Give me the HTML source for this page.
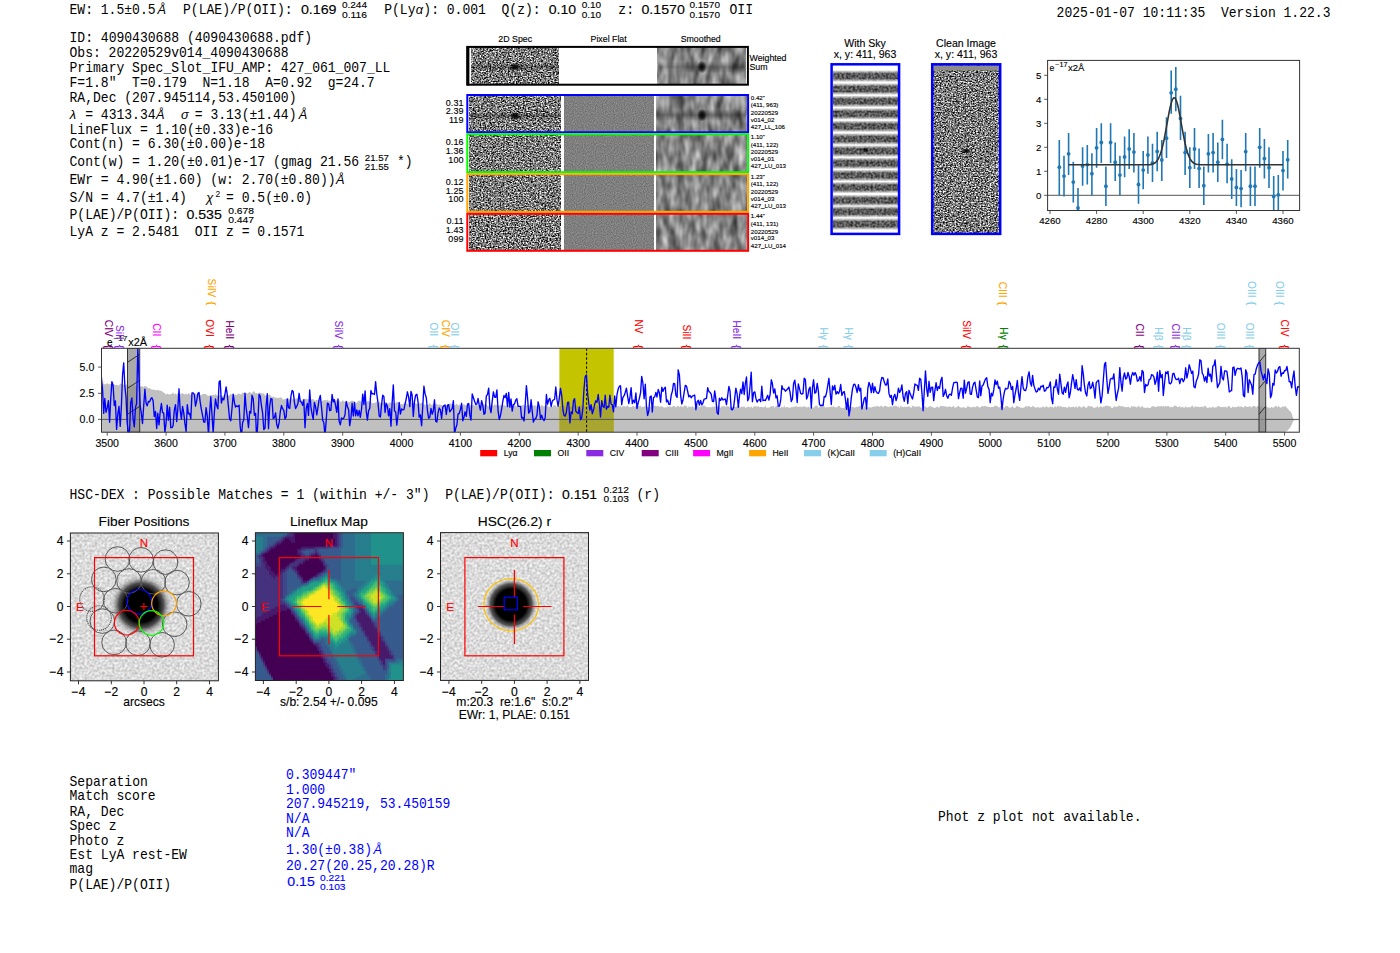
<!DOCTYPE html><html><head><meta charset="utf-8"><style>html,body{margin:0;padding:0;background:#fff;overflow:hidden}</style></head><body><svg width="1400" height="953" viewBox="0 0 1400 953" style="display:block;white-space:pre" xml:space="preserve">
<defs>
<filter id="nz1" x="0" y="0" width="1" height="1" color-interpolation-filters="sRGB">
 <feTurbulence type="fractalNoise" baseFrequency="0.6 0.8" numOctaves="3" seed="3" result="t"/>
 <feColorMatrix in="t" type="matrix" values="1 0 0 0 0  1 0 0 0 0  1 0 0 0 0  0 0 0 0 1"/>
 <feComponentTransfer><feFuncR type="linear" slope="2.0" intercept="-0.52"/><feFuncG type="linear" slope="2.0" intercept="-0.52"/><feFuncB type="linear" slope="2.0" intercept="-0.52"/></feComponentTransfer>
</filter>
<filter id="nz2" x="0" y="0" width="1" height="1" color-interpolation-filters="sRGB">
 <feTurbulence type="fractalNoise" baseFrequency="0.6 0.8" numOctaves="3" seed="11" result="t"/>
 <feColorMatrix in="t" type="matrix" values="1 0 0 0 0  1 0 0 0 0  1 0 0 0 0  0 0 0 0 1"/>
 <feComponentTransfer><feFuncR type="linear" slope="2.0" intercept="-0.52"/><feFuncG type="linear" slope="2.0" intercept="-0.52"/><feFuncB type="linear" slope="2.0" intercept="-0.52"/></feComponentTransfer>
</filter>
<filter id="nz3" x="0" y="0" width="1" height="1" color-interpolation-filters="sRGB">
 <feTurbulence type="fractalNoise" baseFrequency="0.6 0.8" numOctaves="3" seed="21" result="t"/>
 <feColorMatrix in="t" type="matrix" values="1 0 0 0 0  1 0 0 0 0  1 0 0 0 0  0 0 0 0 1"/>
 <feComponentTransfer><feFuncR type="linear" slope="2.0" intercept="-0.52"/><feFuncG type="linear" slope="2.0" intercept="-0.52"/><feFuncB type="linear" slope="2.0" intercept="-0.52"/></feComponentTransfer>
</filter>
<filter id="nz4" x="0" y="0" width="1" height="1" color-interpolation-filters="sRGB">
 <feTurbulence type="fractalNoise" baseFrequency="0.6 0.8" numOctaves="3" seed="31" result="t"/>
 <feColorMatrix in="t" type="matrix" values="1 0 0 0 0  1 0 0 0 0  1 0 0 0 0  0 0 0 0 1"/>
 <feComponentTransfer><feFuncR type="linear" slope="2.0" intercept="-0.52"/><feFuncG type="linear" slope="2.0" intercept="-0.52"/><feFuncB type="linear" slope="2.0" intercept="-0.52"/></feComponentTransfer>
</filter>
<filter id="nz5" x="0" y="0" width="1" height="1" color-interpolation-filters="sRGB">
 <feTurbulence type="fractalNoise" baseFrequency="0.6 0.8" numOctaves="3" seed="41" result="t"/>
 <feColorMatrix in="t" type="matrix" values="1 0 0 0 0  1 0 0 0 0  1 0 0 0 0  0 0 0 0 1"/>
 <feComponentTransfer><feFuncR type="linear" slope="2.0" intercept="-0.52"/><feFuncG type="linear" slope="2.0" intercept="-0.52"/><feFuncB type="linear" slope="2.0" intercept="-0.52"/></feComponentTransfer>
</filter>
<filter id="sm1" x="0" y="0" width="1" height="1" color-interpolation-filters="sRGB">
 <feTurbulence type="fractalNoise" baseFrequency="0.13 0.055" numOctaves="2" seed="5" result="t"/>
 <feColorMatrix in="t" type="matrix" values="1 0 0 0 0  1 0 0 0 0  1 0 0 0 0  0 0 0 0 1"/>
 <feComponentTransfer><feFuncR type="linear" slope="0.8" intercept="0.12"/><feFuncG type="linear" slope="0.8" intercept="0.12"/><feFuncB type="linear" slope="0.8" intercept="0.12"/></feComponentTransfer>
</filter>
<filter id="sm2" x="0" y="0" width="1" height="1" color-interpolation-filters="sRGB">
 <feTurbulence type="fractalNoise" baseFrequency="0.13 0.055" numOctaves="2" seed="15" result="t"/>
 <feColorMatrix in="t" type="matrix" values="1 0 0 0 0  1 0 0 0 0  1 0 0 0 0  0 0 0 0 1"/>
 <feComponentTransfer><feFuncR type="linear" slope="0.8" intercept="0.12"/><feFuncG type="linear" slope="0.8" intercept="0.12"/><feFuncB type="linear" slope="0.8" intercept="0.12"/></feComponentTransfer>
</filter>
<filter id="sm3" x="0" y="0" width="1" height="1" color-interpolation-filters="sRGB">
 <feTurbulence type="fractalNoise" baseFrequency="0.13 0.055" numOctaves="2" seed="25" result="t"/>
 <feColorMatrix in="t" type="matrix" values="1 0 0 0 0  1 0 0 0 0  1 0 0 0 0  0 0 0 0 1"/>
 <feComponentTransfer><feFuncR type="linear" slope="0.8" intercept="0.12"/><feFuncG type="linear" slope="0.8" intercept="0.12"/><feFuncB type="linear" slope="0.8" intercept="0.12"/></feComponentTransfer>
</filter>
<filter id="sm4" x="0" y="0" width="1" height="1" color-interpolation-filters="sRGB">
 <feTurbulence type="fractalNoise" baseFrequency="0.13 0.055" numOctaves="2" seed="35" result="t"/>
 <feColorMatrix in="t" type="matrix" values="1 0 0 0 0  1 0 0 0 0  1 0 0 0 0  0 0 0 0 1"/>
 <feComponentTransfer><feFuncR type="linear" slope="0.8" intercept="0.12"/><feFuncG type="linear" slope="0.8" intercept="0.12"/><feFuncB type="linear" slope="0.8" intercept="0.12"/></feComponentTransfer>
</filter>
<filter id="flat" x="0" y="0" width="1" height="1" color-interpolation-filters="sRGB">
 <feTurbulence type="fractalNoise" baseFrequency="0.9" numOctaves="1" seed="9" result="t"/>
 <feColorMatrix in="t" type="matrix" values="1 0 0 0 0  1 0 0 0 0  1 0 0 0 0  0 0 0 0 1"/>
 <feComponentTransfer><feFuncR type="linear" slope="0.3" intercept="0.35"/><feFuncG type="linear" slope="0.3" intercept="0.35"/><feFuncB type="linear" slope="0.3" intercept="0.35"/></feComponentTransfer>
</filter>
<filter id="cln" x="0" y="0" width="1" height="1" color-interpolation-filters="sRGB">
 <feTurbulence type="fractalNoise" baseFrequency="0.6 0.8" numOctaves="3" seed="51" result="t"/>
 <feColorMatrix in="t" type="matrix" values="1 0 0 0 0  1 0 0 0 0  1 0 0 0 0  0 0 0 0 1"/>
 <feComponentTransfer><feFuncR type="linear" slope="2.0" intercept="-0.52"/><feFuncG type="linear" slope="2.0" intercept="-0.52"/><feFuncB type="linear" slope="2.0" intercept="-0.52"/></feComponentTransfer>
</filter>
<filter id="sky" x="0" y="0" width="1" height="1" color-interpolation-filters="sRGB">
 <feTurbulence type="fractalNoise" baseFrequency="0.4" numOctaves="1" seed="61" result="t"/>
 <feColorMatrix in="t" type="matrix" values="1 0 0 0 0  1 0 0 0 0  1 0 0 0 0  0 0 0 0 1"/>
 <feComponentTransfer><feFuncR type="linear" slope="2.0" intercept="-0.5"/><feFuncG type="linear" slope="2.0" intercept="-0.5"/><feFuncB type="linear" slope="2.0" intercept="-0.5"/></feComponentTransfer>
</filter>
<filter id="lg" x="0" y="0" width="1" height="1" color-interpolation-filters="sRGB">
 <feTurbulence type="fractalNoise" baseFrequency="0.4" numOctaves="1" seed="71" result="t"/>
 <feColorMatrix in="t" type="matrix" values="1 0 0 0 0  1 0 0 0 0  1 0 0 0 0  0 0 0 0 1"/>
 <feComponentTransfer><feFuncR type="linear" slope="0.4" intercept="0.66"/><feFuncG type="linear" slope="0.4" intercept="0.66"/><feFuncB type="linear" slope="0.4" intercept="0.66"/></feComponentTransfer>
</filter>
<linearGradient id="trace" x1="0" y1="0" x2="0" y2="1"><stop offset="0" stop-color="#000" stop-opacity="0"/><stop offset="0.5" stop-color="#000" stop-opacity="0.32"/><stop offset="1" stop-color="#000" stop-opacity="0"/></linearGradient>
<radialGradient id="spot"><stop offset="0" stop-color="#000" stop-opacity="1"/><stop offset="0.5" stop-color="#000" stop-opacity="0.7"/><stop offset="1" stop-color="#000" stop-opacity="0"/></radialGradient>
</defs>
<rect width="1400" height="953" fill="#fff"/>
<text transform="translate(69.5,14.0) scale(1.0,1.107)" font-family="Liberation Mono" font-size="13.00" fill="#000" textLength="93.9" lengthAdjust="spacingAndGlyphs">EW: 1.5±0.5 </text>
<text transform="translate(157.4,14.0) scale(1.0,1.06)" font-family="Liberation Sans" font-size="12.80" fill="#000" font-style="italic">Å</text>
<text transform="translate(183.0,14.0) scale(1.0,1.107)" font-family="Liberation Mono" font-size="13.00" fill="#000" textLength="109.6" lengthAdjust="spacingAndGlyphs">P(LAE)/P(OII):</text>
<text transform="translate(300.9,14.0) scale(1.0,1.08)" font-family="Liberation Sans" font-size="12.40" fill="#000" textLength="35.6" lengthAdjust="spacingAndGlyphs" stroke="#000" stroke-width="0.12">0.169</text>
<text transform="translate(341.9,8.4) scale(1.0,1.08)" font-family="Liberation Sans" font-size="8.80" fill="#000" textLength="25.1" lengthAdjust="spacingAndGlyphs" stroke="#000" stroke-width="0.12">0.244</text>
<text transform="translate(341.9,17.6) scale(1.0,1.08)" font-family="Liberation Sans" font-size="8.80" fill="#000" textLength="25.1" lengthAdjust="spacingAndGlyphs" stroke="#000" stroke-width="0.12">0.116</text>
<text transform="translate(384.2,14.0) scale(1.0,1.107)" font-family="Liberation Mono" font-size="13.00" fill="#000" textLength="101.7" lengthAdjust="spacingAndGlyphs">P(Ly ): 0.001</text>
<text transform="translate(415.8,14.0) scale(1.0,1.06)" font-family="Liberation Sans" font-size="12.80" fill="#000" font-style="italic">α</text>
<text transform="translate(501.5,14.0) scale(1.0,1.107)" font-family="Liberation Mono" font-size="13.00" fill="#000" textLength="39.1" lengthAdjust="spacingAndGlyphs">Q(z):</text>
<text transform="translate(548.7,14.0) scale(1.0,1.08)" font-family="Liberation Sans" font-size="12.40" fill="#000" textLength="27.4" lengthAdjust="spacingAndGlyphs" stroke="#000" stroke-width="0.12">0.10</text>
<text transform="translate(581.7,8.4) scale(1.0,1.08)" font-family="Liberation Sans" font-size="8.80" fill="#000" textLength="19.5" lengthAdjust="spacingAndGlyphs" stroke="#000" stroke-width="0.12">0.10</text>
<text transform="translate(581.7,17.6) scale(1.0,1.08)" font-family="Liberation Sans" font-size="8.80" fill="#000" textLength="19.5" lengthAdjust="spacingAndGlyphs" stroke="#000" stroke-width="0.12">0.10</text>
<text transform="translate(618.3,14.0) scale(1.0,1.107)" font-family="Liberation Mono" font-size="13.00" fill="#000" textLength="15.7" lengthAdjust="spacingAndGlyphs">z:</text>
<text transform="translate(641.5,14.0) scale(1.0,1.08)" font-family="Liberation Sans" font-size="12.40" fill="#000" textLength="43.3" lengthAdjust="spacingAndGlyphs" stroke="#000" stroke-width="0.12">0.1570</text>
<text transform="translate(689.4,8.4) scale(1.0,1.08)" font-family="Liberation Sans" font-size="8.80" fill="#000" textLength="30.6" lengthAdjust="spacingAndGlyphs" stroke="#000" stroke-width="0.12">0.1570</text>
<text transform="translate(689.4,17.6) scale(1.0,1.08)" font-family="Liberation Sans" font-size="8.80" fill="#000" textLength="30.6" lengthAdjust="spacingAndGlyphs" stroke="#000" stroke-width="0.12">0.1570</text>
<text transform="translate(729.5,14.0) scale(1.0,1.107)" font-family="Liberation Mono" font-size="13.00" fill="#000" textLength="23.5" lengthAdjust="spacingAndGlyphs">OII</text>
<text transform="translate(1056.6,16.7) scale(1.0,1.107)" font-family="Liberation Mono" font-size="13.00" fill="#000" textLength="273.9" lengthAdjust="spacingAndGlyphs">2025-01-07 10:11:35  Version 1.22.3</text>
<text transform="translate(69.5,42.1) scale(1.0,1.107)" font-family="Liberation Mono" font-size="13.00" fill="#000" textLength="242.6" lengthAdjust="spacingAndGlyphs">ID: 4090430688 (4090430688.pdf)</text>
<text transform="translate(69.5,56.7) scale(1.0,1.107)" font-family="Liberation Mono" font-size="13.00" fill="#000" textLength="219.1" lengthAdjust="spacingAndGlyphs">Obs: 20220529v014_4090430688</text>
<text transform="translate(69.5,72.1) scale(1.0,1.107)" font-family="Liberation Mono" font-size="13.00" fill="#000" textLength="320.9" lengthAdjust="spacingAndGlyphs">Primary Spec_Slot_IFU_AMP: 427_061_007_LL</text>
<text transform="translate(69.5,86.7) scale(1.0,1.107)" font-family="Liberation Mono" font-size="13.00" fill="#000" textLength="305.2" lengthAdjust="spacingAndGlyphs">F=1.8"  T=0.179  N=1.18  A=0.92  g=24.7</text>
<text transform="translate(69.5,101.9) scale(1.0,1.107)" font-family="Liberation Mono" font-size="13.00" fill="#000" textLength="227.0" lengthAdjust="spacingAndGlyphs">RA,Dec (207.945114,53.450100)</text>
<text transform="translate(69.5,133.6) scale(1.0,1.107)" font-family="Liberation Mono" font-size="13.00" fill="#000" textLength="203.5" lengthAdjust="spacingAndGlyphs">LineFlux = 1.10(±0.33)e-16</text>
<text transform="translate(69.5,148.3) scale(1.0,1.107)" font-family="Liberation Mono" font-size="13.00" fill="#000" textLength="195.6" lengthAdjust="spacingAndGlyphs">Cont(n) = 6.30(±0.00)e-18</text>
<text transform="translate(69.5,236.4) scale(1.0,1.107)" font-family="Liberation Mono" font-size="13.00" fill="#000" textLength="234.8" lengthAdjust="spacingAndGlyphs">LyA z = 2.5481  OII z = 0.1571</text>
<text transform="translate(69.5,118.6) scale(1.0,1.107)" font-family="Liberation Mono" font-size="13.00" fill="#000" textLength="234.8" lengthAdjust="spacingAndGlyphs">  = 4313.34     = 3.13(±1.44) </text>
<text transform="translate(69.8,118.6) scale(1.0,1.06)" font-family="Liberation Sans" font-size="12.80" fill="#000" font-style="italic">λ</text>
<text transform="translate(155.9,118.6) scale(1.0,1.06)" font-family="Liberation Sans" font-size="12.80" fill="#000" font-style="italic">Å</text>
<text transform="translate(180.9,118.6) scale(1.0,1.06)" font-family="Liberation Sans" font-size="12.80" fill="#000" font-style="italic">σ</text>
<text transform="translate(298.8,118.6) scale(1.0,1.06)" font-family="Liberation Sans" font-size="12.80" fill="#000" font-style="italic">Å</text>
<text transform="translate(69.5,184.3) scale(1.0,1.107)" font-family="Liberation Mono" font-size="13.00" fill="#000" textLength="273.9" lengthAdjust="spacingAndGlyphs">EWr = 4.90(±1.60) (w: 2.70(±0.80)) </text>
<text transform="translate(335.9,184.3) scale(1.0,1.06)" font-family="Liberation Sans" font-size="12.80" fill="#000" font-style="italic">Å</text>
<text transform="translate(69.5,166.4) scale(1.0,1.107)" font-family="Liberation Mono" font-size="13.00" fill="#000" textLength="289.6" lengthAdjust="spacingAndGlyphs">Cont(w) = 1.20(±0.01)e-17 (gmag 21.56</text>
<text transform="translate(364.8,161.0) scale(1.0,1.08)" font-family="Liberation Sans" font-size="8.80" fill="#000" textLength="24.2" lengthAdjust="spacingAndGlyphs" stroke="#000" stroke-width="0.12">21.57</text>
<text transform="translate(364.8,170.0) scale(1.0,1.08)" font-family="Liberation Sans" font-size="8.80" fill="#000" textLength="24.2" lengthAdjust="spacingAndGlyphs" stroke="#000" stroke-width="0.12">21.55</text>
<text transform="translate(397.0,166.4) scale(1.0,1.107)" font-family="Liberation Mono" font-size="13.00" fill="#000" textLength="15.7" lengthAdjust="spacingAndGlyphs">*)</text>
<text transform="translate(69.5,201.7) scale(1.0,1.107)" font-family="Liberation Mono" font-size="13.00" fill="#000" textLength="242.6" lengthAdjust="spacingAndGlyphs">S/N = 4.7(±1.4)     = 0.5(±0.0)</text>
<text transform="translate(206.3,201.7) scale(1.0,1.06)" font-family="Liberation Sans" font-size="12.80" fill="#000" font-style="italic">χ</text>
<text transform="translate(215.4,196.7) scale(1.0,1.06)" font-family="Liberation Sans" font-size="8.50" fill="#000">2</text>
<text transform="translate(69.5,219.3) scale(1.0,1.107)" font-family="Liberation Mono" font-size="13.00" fill="#000" textLength="109.6" lengthAdjust="spacingAndGlyphs">P(LAE)/P(OII):</text>
<text transform="translate(186.4,219.3) scale(1.0,1.08)" font-family="Liberation Sans" font-size="12.40" fill="#000" textLength="35.4" lengthAdjust="spacingAndGlyphs" stroke="#000" stroke-width="0.12">0.535</text>
<text transform="translate(228.2,213.8) scale(1.0,1.08)" font-family="Liberation Sans" font-size="8.80" fill="#000" textLength="25.8" lengthAdjust="spacingAndGlyphs" stroke="#000" stroke-width="0.12">0.678</text>
<text transform="translate(228.2,222.8) scale(1.0,1.08)" font-family="Liberation Sans" font-size="8.80" fill="#000" textLength="25.8" lengthAdjust="spacingAndGlyphs" stroke="#000" stroke-width="0.12">0.447</text>
<text transform="translate(515.2,41.8) scale(1.1,1.08)" font-family="Liberation Sans" font-size="8.00" fill="#000" text-anchor="middle" stroke="#000" stroke-width="0.12">2D Spec</text>
<text transform="translate(608.6,41.8) scale(1.1,1.08)" font-family="Liberation Sans" font-size="8.00" fill="#000" text-anchor="middle" stroke="#000" stroke-width="0.12">Pixel Flat</text>
<text transform="translate(700.7,41.8) scale(1.1,1.08)" font-family="Liberation Sans" font-size="8.00" fill="#000" text-anchor="middle" stroke="#000" stroke-width="0.12">Smoothed</text>
<rect x="471.5" y="47.2" width="86.8" height="37.2" fill="#888" filter="url(#nz1)"/>
<ellipse cx="515" cy="67" rx="6" ry="4" fill="url(#spot)"/>
<rect x="657.8" y="47.2" width="87.8" height="37.2" fill="#888" filter="url(#sm1)"/>
<rect x="657.8" y="61" width="87.8" height="12" fill="url(#trace)"/>
<ellipse cx="702" cy="67" rx="5" ry="6.5" fill="url(#spot)"/>
<rect x="471.5" y="63" width="86.8" height="8" fill="url(#trace)"/>
<rect x="467.4" y="46.9" width="280.5" height="37.8" fill="none" stroke="#000" stroke-width="2"/>
<rect x="466.4" y="46.0" width="3" height="39.4" fill="#000"/>
<text transform="translate(749.5,61.0) scale(1.1,1.08)" font-family="Liberation Sans" font-size="8.00" fill="#000" stroke="#000" stroke-width="0.12">Weighted</text>
<text transform="translate(749.5,69.5) scale(1.1,1.08)" font-family="Liberation Sans" font-size="8.00" fill="#000" stroke="#000" stroke-width="0.12">Sum</text>
<rect x="469.7" y="95.0" width="90.4" height="37.3" fill="#888" filter="url(#nz2)"/>
<rect x="564.1" y="95.0" width="89.5" height="37.3" fill="#808080" filter="url(#flat)"/>
<rect x="656.6" y="95.0" width="89.6" height="37.3" fill="#888" filter="url(#sm2)"/>
<ellipse cx="515" cy="116.0" rx="6" ry="4" fill="url(#spot)"/>
<rect x="656.6" y="109.0" width="89.6" height="12" fill="url(#trace)"/>
<rect x="469.7" y="112.0" width="90.4" height="8" fill="url(#trace)"/>
<ellipse cx="702" cy="115.0" rx="5" ry="6.5" fill="url(#spot)"/>
<rect x="467.3" y="95.0" width="280.8" height="37.3" fill="none" stroke="#0000ff" stroke-width="2"/>
<text transform="translate(463.4,105.6) scale(1.1,1.08)" font-family="Liberation Sans" font-size="8.20" fill="#000" text-anchor="end" stroke="#000" stroke-width="0.12">0.31</text>
<text transform="translate(463.4,114.4) scale(1.1,1.08)" font-family="Liberation Sans" font-size="8.20" fill="#000" text-anchor="end" stroke="#000" stroke-width="0.12">2.39</text>
<text transform="translate(463.4,123.2) scale(1.1,1.08)" font-family="Liberation Sans" font-size="8.20" fill="#000" text-anchor="end" stroke="#000" stroke-width="0.12">119</text>
<text transform="translate(750.8,99.6) scale(1.1,1.08)" font-family="Liberation Sans" font-size="5.60" fill="#000" stroke="#000" stroke-width="0.12">0.42"</text>
<text transform="translate(750.8,107.2) scale(1.1,1.08)" font-family="Liberation Sans" font-size="5.60" fill="#000" stroke="#000" stroke-width="0.12">(411, 963)</text>
<text transform="translate(750.8,115.0) scale(1.1,1.08)" font-family="Liberation Sans" font-size="5.60" fill="#000" stroke="#000" stroke-width="0.12">20220529</text>
<text transform="translate(750.8,121.6) scale(1.1,1.08)" font-family="Liberation Sans" font-size="5.60" fill="#000" stroke="#000" stroke-width="0.12">v014_02</text>
<text transform="translate(750.8,129.0) scale(1.1,1.08)" font-family="Liberation Sans" font-size="5.60" fill="#000" stroke="#000" stroke-width="0.12">427_LL_106</text>
<rect x="469.7" y="134.3" width="90.4" height="37.9" fill="#888" filter="url(#nz3)"/>
<rect x="564.1" y="134.3" width="89.5" height="37.9" fill="#808080" filter="url(#flat)"/>
<rect x="656.6" y="134.3" width="89.6" height="37.9" fill="#888" filter="url(#sm3)"/>
<rect x="467.3" y="134.3" width="280.8" height="37.9" fill="none" stroke="#00ff00" stroke-width="2"/>
<text transform="translate(463.4,144.9) scale(1.1,1.08)" font-family="Liberation Sans" font-size="8.20" fill="#000" text-anchor="end" stroke="#000" stroke-width="0.12">0.16</text>
<text transform="translate(463.4,153.7) scale(1.1,1.08)" font-family="Liberation Sans" font-size="8.20" fill="#000" text-anchor="end" stroke="#000" stroke-width="0.12">1.36</text>
<text transform="translate(463.4,162.5) scale(1.1,1.08)" font-family="Liberation Sans" font-size="8.20" fill="#000" text-anchor="end" stroke="#000" stroke-width="0.12">100</text>
<text transform="translate(750.8,138.9) scale(1.1,1.08)" font-family="Liberation Sans" font-size="5.60" fill="#000" stroke="#000" stroke-width="0.12">1.10"</text>
<text transform="translate(750.8,146.5) scale(1.1,1.08)" font-family="Liberation Sans" font-size="5.60" fill="#000" stroke="#000" stroke-width="0.12">(411, 122)</text>
<text transform="translate(750.8,154.3) scale(1.1,1.08)" font-family="Liberation Sans" font-size="5.60" fill="#000" stroke="#000" stroke-width="0.12">20220529</text>
<text transform="translate(750.8,160.9) scale(1.1,1.08)" font-family="Liberation Sans" font-size="5.60" fill="#000" stroke="#000" stroke-width="0.12">v014_01</text>
<text transform="translate(750.8,168.3) scale(1.1,1.08)" font-family="Liberation Sans" font-size="5.60" fill="#000" stroke="#000" stroke-width="0.12">427_LU_013</text>
<rect x="469.7" y="174.2" width="90.4" height="37.6" fill="#888" filter="url(#nz4)"/>
<rect x="564.1" y="174.2" width="89.5" height="37.6" fill="#808080" filter="url(#flat)"/>
<rect x="656.6" y="174.2" width="89.6" height="37.6" fill="#888" filter="url(#sm4)"/>
<rect x="467.3" y="174.2" width="280.8" height="37.6" fill="none" stroke="#ffa500" stroke-width="2"/>
<text transform="translate(463.4,184.8) scale(1.1,1.08)" font-family="Liberation Sans" font-size="8.20" fill="#000" text-anchor="end" stroke="#000" stroke-width="0.12">0.12</text>
<text transform="translate(463.4,193.6) scale(1.1,1.08)" font-family="Liberation Sans" font-size="8.20" fill="#000" text-anchor="end" stroke="#000" stroke-width="0.12">1.25</text>
<text transform="translate(463.4,202.4) scale(1.1,1.08)" font-family="Liberation Sans" font-size="8.20" fill="#000" text-anchor="end" stroke="#000" stroke-width="0.12">100</text>
<text transform="translate(750.8,178.8) scale(1.1,1.08)" font-family="Liberation Sans" font-size="5.60" fill="#000" stroke="#000" stroke-width="0.12">1.23"</text>
<text transform="translate(750.8,186.4) scale(1.1,1.08)" font-family="Liberation Sans" font-size="5.60" fill="#000" stroke="#000" stroke-width="0.12">(411, 122)</text>
<text transform="translate(750.8,194.2) scale(1.1,1.08)" font-family="Liberation Sans" font-size="5.60" fill="#000" stroke="#000" stroke-width="0.12">20220529</text>
<text transform="translate(750.8,200.8) scale(1.1,1.08)" font-family="Liberation Sans" font-size="5.60" fill="#000" stroke="#000" stroke-width="0.12">v014_03</text>
<text transform="translate(750.8,208.2) scale(1.1,1.08)" font-family="Liberation Sans" font-size="5.60" fill="#000" stroke="#000" stroke-width="0.12">427_LU_013</text>
<rect x="469.7" y="213.8" width="90.4" height="37.0" fill="#888" filter="url(#nz5)"/>
<rect x="564.1" y="213.8" width="89.5" height="37.0" fill="#808080" filter="url(#flat)"/>
<rect x="656.6" y="213.8" width="89.6" height="37.0" fill="#888" filter="url(#sm1)"/>
<rect x="467.3" y="213.8" width="280.8" height="37.0" fill="none" stroke="#ff0000" stroke-width="2"/>
<text transform="translate(463.4,224.4) scale(1.1,1.08)" font-family="Liberation Sans" font-size="8.20" fill="#000" text-anchor="end" stroke="#000" stroke-width="0.12">0.11</text>
<text transform="translate(463.4,233.2) scale(1.1,1.08)" font-family="Liberation Sans" font-size="8.20" fill="#000" text-anchor="end" stroke="#000" stroke-width="0.12">1.43</text>
<text transform="translate(463.4,242.0) scale(1.1,1.08)" font-family="Liberation Sans" font-size="8.20" fill="#000" text-anchor="end" stroke="#000" stroke-width="0.12">099</text>
<text transform="translate(750.8,218.4) scale(1.1,1.08)" font-family="Liberation Sans" font-size="5.60" fill="#000" stroke="#000" stroke-width="0.12">1.44"</text>
<text transform="translate(750.8,226.0) scale(1.1,1.08)" font-family="Liberation Sans" font-size="5.60" fill="#000" stroke="#000" stroke-width="0.12">(411, 131)</text>
<text transform="translate(750.8,233.8) scale(1.1,1.08)" font-family="Liberation Sans" font-size="5.60" fill="#000" stroke="#000" stroke-width="0.12">20220529</text>
<text transform="translate(750.8,240.4) scale(1.1,1.08)" font-family="Liberation Sans" font-size="5.60" fill="#000" stroke="#000" stroke-width="0.12">v014_03</text>
<text transform="translate(750.8,247.8) scale(1.1,1.08)" font-family="Liberation Sans" font-size="5.60" fill="#000" stroke="#000" stroke-width="0.12">427_LU_014</text>
<text transform="translate(865.0,47.1) scale(1.1,1.08)" font-family="Liberation Sans" font-size="9.60" fill="#000" text-anchor="middle" stroke="#000" stroke-width="0.12">With Sky</text>
<text transform="translate(865.0,57.9) scale(1.1,1.08)" font-family="Liberation Sans" font-size="9.60" fill="#000" text-anchor="middle" stroke="#000" stroke-width="0.12">x, y: 411, 963</text>
<text transform="translate(966.0,47.1) scale(1.1,1.08)" font-family="Liberation Sans" font-size="9.60" fill="#000" text-anchor="middle" stroke="#000" stroke-width="0.12">Clean Image</text>
<text transform="translate(966.0,57.9) scale(1.1,1.08)" font-family="Liberation Sans" font-size="9.60" fill="#000" text-anchor="middle" stroke="#000" stroke-width="0.12">x, y: 411, 963</text>
<defs><linearGradient id="bandg" x1="0" y1="0" x2="0" y2="1"><stop offset="0" stop-color="#fff"/><stop offset="0.3" stop-color="#585858"/><stop offset="0.7" stop-color="#585858"/><stop offset="1" stop-color="#fff"/></linearGradient><filter id="skyf" x="0" y="0" width="1" height="1" color-interpolation-filters="sRGB"><feTurbulence type="fractalNoise" baseFrequency="0.45" numOctaves="1" seed="61" result="t"/><feColorMatrix in="t" type="matrix" values="1 0 0 0 0  1 0 0 0 0  1 0 0 0 0  0 0 0 0 1" result="n"/><feComposite in="n" in2="SourceGraphic" operator="arithmetic" k1="1.1" k2="-1.1" k3="0.45" k4="0.55"/></filter></defs>
<g filter="url(#skyf)">
<rect x="833" y="66" width="65" height="167" fill="#fff"/>
<rect x="833" y="70.1" width="65" height="12" fill="url(#bandg)"/>
<rect x="833" y="83.0" width="65" height="12" fill="url(#bandg)"/>
<rect x="833" y="95.4" width="65" height="12" fill="url(#bandg)"/>
<rect x="833" y="107.8" width="65" height="12" fill="url(#bandg)"/>
<rect x="833" y="120.3" width="65" height="12" fill="url(#bandg)"/>
<rect x="833" y="133.0" width="65" height="12" fill="url(#bandg)"/>
<rect x="833" y="145.1" width="65" height="12" fill="url(#bandg)"/>
<rect x="833" y="157.3" width="65" height="12" fill="url(#bandg)"/>
<rect x="833" y="169.4" width="65" height="12" fill="url(#bandg)"/>
<rect x="833" y="181.5" width="65" height="12" fill="url(#bandg)"/>
<rect x="833" y="194.4" width="65" height="12" fill="url(#bandg)"/>
<rect x="833" y="205.8" width="65" height="12" fill="url(#bandg)"/>
<rect x="833" y="218.0" width="65" height="12" fill="url(#bandg)"/>
<ellipse cx="865" cy="150" rx="3" ry="2.5" fill="url(#spot)"/>
</g>
<rect x="831.6" y="64.3" width="67.5" height="169.6" fill="none" stroke="#0000ff" stroke-width="2.5"/>
<rect x="933" y="65.5" width="67" height="168" fill="#888" filter="url(#cln)"/>
<rect x="933" y="65.5" width="67" height="5" fill="#8c8c8c"/>
<ellipse cx="966" cy="151" rx="5" ry="3" fill="url(#spot)"/>
<rect x="932.2" y="64.3" width="68" height="169.6" fill="none" stroke="#0000ff" stroke-width="2.5"/>
<defs><clipPath id="fitclip"><rect x="1047.6" y="60.4" width="252" height="150.1"/></clipPath></defs>
<g clip-path="url(#fitclip)">
<line x1="1047.6" y1="195.3" x2="1299.6" y2="195.3" stroke="#555" stroke-width="1"/>
<path d="M1059.3 140.1V195.3M1064.0 155.7V196.5M1068.6 132.9V174.9M1073.3 161.7V202.5M1078.0 188.1V216.9M1082.6 147.3V185.7M1087.3 144.9V184.5M1091.9 153.3V195.3M1096.6 128.1V167.7M1101.3 123.3V162.9M1105.9 166.5V206.1M1110.6 123.3V162.9M1115.2 142.5V180.9M1119.9 155.7V195.3M1124.6 136.5V177.3M1129.2 129.3V168.9M1133.9 132.9V172.5M1138.5 165.3V203.7M1143.2 150.9V189.3M1147.9 136.5V173.7M1152.5 143.7V182.1M1157.2 131.7V171.3M1161.8 140.1V180.9M1166.5 117.3V158.1M1171.2 70.5V113.7M1175.8 66.9V111.3M1180.5 95.7V140.1M1185.1 131.7V174.9M1189.8 147.3V188.1M1194.5 128.1V168.9M1199.1 148.5V188.1M1203.8 166.5V204.9M1208.4 134.1V172.5M1213.1 132.9V172.5M1217.8 142.5V182.1M1222.4 119.7V159.3M1227.1 143.7V183.3M1231.7 159.3V198.9M1236.4 168.9V206.1M1241.1 170.1V207.3M1245.7 132.9V171.3M1250.4 166.5V206.1M1255.0 166.5V206.1M1259.7 128.1V167.7M1264.4 138.9V178.5M1269.0 147.3V188.1M1273.7 176.1V210.4M1278.3 174.9V210.4M1283.0 150.9V190.5M1287.7 140.1V178.5" stroke="#1f77b4" stroke-width="1.6" fill="none"/>
<circle cx="1059.3" cy="167.2" r="1.9" fill="#1f77b4"/>
<circle cx="1064.0" cy="176.1" r="1.9" fill="#1f77b4"/>
<circle cx="1068.6" cy="153.8" r="1.9" fill="#1f77b4"/>
<circle cx="1073.3" cy="182.1" r="1.9" fill="#1f77b4"/>
<circle cx="1078.0" cy="208.0" r="1.9" fill="#1f77b4"/>
<circle cx="1082.6" cy="166.0" r="1.9" fill="#1f77b4"/>
<circle cx="1087.3" cy="164.6" r="1.9" fill="#1f77b4"/>
<circle cx="1091.9" cy="173.7" r="1.9" fill="#1f77b4"/>
<circle cx="1096.6" cy="147.8" r="1.9" fill="#1f77b4"/>
<circle cx="1101.3" cy="142.5" r="1.9" fill="#1f77b4"/>
<circle cx="1105.9" cy="186.2" r="1.9" fill="#1f77b4"/>
<circle cx="1110.6" cy="142.5" r="1.9" fill="#1f77b4"/>
<circle cx="1115.2" cy="162.2" r="1.9" fill="#1f77b4"/>
<circle cx="1119.9" cy="175.1" r="1.9" fill="#1f77b4"/>
<circle cx="1124.6" cy="156.9" r="1.9" fill="#1f77b4"/>
<circle cx="1129.2" cy="149.0" r="1.9" fill="#1f77b4"/>
<circle cx="1133.9" cy="152.1" r="1.9" fill="#1f77b4"/>
<circle cx="1138.5" cy="184.5" r="1.9" fill="#1f77b4"/>
<circle cx="1143.2" cy="170.1" r="1.9" fill="#1f77b4"/>
<circle cx="1147.9" cy="155.0" r="1.9" fill="#1f77b4"/>
<circle cx="1152.5" cy="162.9" r="1.9" fill="#1f77b4"/>
<circle cx="1157.2" cy="151.4" r="1.9" fill="#1f77b4"/>
<circle cx="1161.8" cy="160.0" r="1.9" fill="#1f77b4"/>
<circle cx="1166.5" cy="138.2" r="1.9" fill="#1f77b4"/>
<circle cx="1171.2" cy="92.8" r="1.9" fill="#1f77b4"/>
<circle cx="1175.8" cy="89.2" r="1.9" fill="#1f77b4"/>
<circle cx="1180.5" cy="118.5" r="1.9" fill="#1f77b4"/>
<circle cx="1185.1" cy="152.6" r="1.9" fill="#1f77b4"/>
<circle cx="1189.8" cy="167.7" r="1.9" fill="#1f77b4"/>
<circle cx="1194.5" cy="149.0" r="1.9" fill="#1f77b4"/>
<circle cx="1199.1" cy="168.4" r="1.9" fill="#1f77b4"/>
<circle cx="1203.8" cy="185.7" r="1.9" fill="#1f77b4"/>
<circle cx="1208.4" cy="153.8" r="1.9" fill="#1f77b4"/>
<circle cx="1213.1" cy="152.6" r="1.9" fill="#1f77b4"/>
<circle cx="1217.8" cy="162.2" r="1.9" fill="#1f77b4"/>
<circle cx="1222.4" cy="139.4" r="1.9" fill="#1f77b4"/>
<circle cx="1227.1" cy="164.1" r="1.9" fill="#1f77b4"/>
<circle cx="1231.7" cy="179.0" r="1.9" fill="#1f77b4"/>
<circle cx="1236.4" cy="187.4" r="1.9" fill="#1f77b4"/>
<circle cx="1241.1" cy="188.6" r="1.9" fill="#1f77b4"/>
<circle cx="1245.7" cy="151.6" r="1.9" fill="#1f77b4"/>
<circle cx="1250.4" cy="186.2" r="1.9" fill="#1f77b4"/>
<circle cx="1255.0" cy="186.2" r="1.9" fill="#1f77b4"/>
<circle cx="1259.7" cy="147.3" r="1.9" fill="#1f77b4"/>
<circle cx="1264.4" cy="158.6" r="1.9" fill="#1f77b4"/>
<circle cx="1269.0" cy="167.7" r="1.9" fill="#1f77b4"/>
<circle cx="1273.7" cy="196.5" r="1.9" fill="#1f77b4"/>
<circle cx="1278.3" cy="194.8" r="1.9" fill="#1f77b4"/>
<circle cx="1283.0" cy="170.6" r="1.9" fill="#1f77b4"/>
<circle cx="1287.7" cy="159.8" r="1.9" fill="#1f77b4"/>
<path d="M1068.6 164.8L1069.8 164.8L1071.0 164.8L1072.1 164.8L1073.3 164.8L1074.5 164.8L1075.6 164.8L1076.8 164.8L1078.0 164.8L1079.1 164.8L1080.3 164.8L1081.5 164.8L1082.6 164.8L1083.8 164.8L1085.0 164.8L1086.1 164.8L1087.3 164.8L1088.4 164.8L1089.6 164.8L1090.8 164.8L1091.9 164.8L1093.1 164.8L1094.3 164.8L1095.4 164.8L1096.6 164.8L1097.8 164.8L1098.9 164.8L1100.1 164.8L1101.3 164.8L1102.4 164.8L1103.6 164.8L1104.8 164.8L1105.9 164.8L1107.1 164.8L1108.2 164.8L1109.4 164.8L1110.6 164.8L1111.7 164.8L1112.9 164.8L1114.1 164.8L1115.2 164.8L1116.4 164.8L1117.6 164.8L1118.7 164.8L1119.9 164.8L1121.1 164.8L1122.2 164.8L1123.4 164.8L1124.6 164.8L1125.7 164.8L1126.9 164.8L1128.1 164.8L1129.2 164.8L1130.4 164.8L1131.5 164.8L1132.7 164.8L1133.9 164.8L1135.0 164.8L1136.2 164.8L1137.4 164.8L1138.5 164.8L1139.7 164.8L1140.9 164.8L1142.0 164.8L1143.2 164.8L1144.4 164.8L1145.5 164.8L1146.7 164.8L1147.9 164.7L1149.0 164.7L1150.2 164.6L1151.4 164.4L1152.5 164.1L1153.7 163.6L1154.8 163.0L1156.0 162.0L1157.2 160.6L1158.3 158.8L1159.5 156.3L1160.7 153.1L1161.8 149.2L1163.0 144.6L1164.2 139.1L1165.3 133.1L1166.5 126.7L1167.7 120.1L1168.8 113.8L1170.0 108.0L1171.2 103.3L1172.3 99.8L1173.5 97.9L1174.7 97.8L1175.8 99.3L1177.0 102.5L1178.2 107.0L1179.3 112.6L1180.5 118.8L1181.6 125.4L1182.8 131.9L1184.0 138.0L1185.1 143.5L1186.3 148.4L1187.5 152.4L1188.6 155.7L1189.8 158.3L1191.0 160.3L1192.1 161.7L1193.3 162.8L1194.5 163.5L1195.6 164.0L1196.8 164.3L1198.0 164.5L1199.1 164.6L1200.3 164.7L1201.5 164.8L1202.6 164.8L1203.8 164.8L1204.9 164.8L1206.1 164.8L1207.3 164.8L1208.4 164.8L1209.6 164.8L1210.8 164.8L1211.9 164.8L1213.1 164.8L1214.3 164.8L1215.4 164.8L1216.6 164.8L1217.8 164.8L1218.9 164.8L1220.1 164.8L1221.3 164.8L1222.4 164.8L1223.6 164.8L1224.8 164.8L1225.9 164.8L1227.1 164.8L1228.2 164.8L1229.4 164.8L1230.6 164.8L1231.7 164.8L1232.9 164.8L1234.1 164.8L1235.2 164.8L1236.4 164.8L1237.6 164.8L1238.7 164.8L1239.9 164.8L1241.1 164.8L1242.2 164.8L1243.4 164.8L1244.6 164.8L1245.7 164.8L1246.9 164.8L1248.0 164.8L1249.2 164.8L1250.4 164.8L1251.5 164.8L1252.7 164.8L1253.9 164.8L1255.0 164.8L1256.2 164.8L1257.4 164.8L1258.5 164.8L1259.7 164.8L1260.9 164.8L1262.0 164.8L1263.2 164.8L1264.4 164.8L1265.5 164.8L1266.7 164.8L1267.9 164.8L1269.0 164.8L1270.2 164.8L1271.3 164.8L1272.5 164.8L1273.7 164.8L1274.8 164.8L1276.0 164.8L1277.2 164.8L1278.3 164.8L1279.5 164.8L1280.7 164.8L1281.8 164.8L1283.0 164.8" stroke="#333" stroke-width="1.6" fill="none"/>
</g>
<rect x="1047.6" y="60.4" width="252" height="150.1" fill="none" stroke="#333" stroke-width="1"/>
<line x1="1044.1" y1="195.3" x2="1047.6" y2="195.3" stroke="#333" stroke-width="0.8"/>
<text transform="translate(1041.5,198.6) scale(1.1,1.08)" font-family="Liberation Sans" font-size="8.80" fill="#000" text-anchor="end" stroke="#000" stroke-width="0.12">0</text>
<line x1="1044.1" y1="171.3" x2="1047.6" y2="171.3" stroke="#333" stroke-width="0.8"/>
<text transform="translate(1041.5,174.6) scale(1.1,1.08)" font-family="Liberation Sans" font-size="8.80" fill="#000" text-anchor="end" stroke="#000" stroke-width="0.12">1</text>
<line x1="1044.1" y1="147.3" x2="1047.6" y2="147.3" stroke="#333" stroke-width="0.8"/>
<text transform="translate(1041.5,150.6) scale(1.1,1.08)" font-family="Liberation Sans" font-size="8.80" fill="#000" text-anchor="end" stroke="#000" stroke-width="0.12">2</text>
<line x1="1044.1" y1="123.3" x2="1047.6" y2="123.3" stroke="#333" stroke-width="0.8"/>
<text transform="translate(1041.5,126.6) scale(1.1,1.08)" font-family="Liberation Sans" font-size="8.80" fill="#000" text-anchor="end" stroke="#000" stroke-width="0.12">3</text>
<line x1="1044.1" y1="99.3" x2="1047.6" y2="99.3" stroke="#333" stroke-width="0.8"/>
<text transform="translate(1041.5,102.6) scale(1.1,1.08)" font-family="Liberation Sans" font-size="8.80" fill="#000" text-anchor="end" stroke="#000" stroke-width="0.12">4</text>
<line x1="1044.1" y1="75.3" x2="1047.6" y2="75.3" stroke="#333" stroke-width="0.8"/>
<text transform="translate(1041.5,78.6) scale(1.1,1.08)" font-family="Liberation Sans" font-size="8.80" fill="#000" text-anchor="end" stroke="#000" stroke-width="0.12">5</text>
<line x1="1050.0" y1="210.5" x2="1050.0" y2="214" stroke="#333" stroke-width="0.8"/>
<text transform="translate(1050.0,224.2) scale(1.1,1.08)" font-family="Liberation Sans" font-size="8.80" fill="#000" text-anchor="middle" stroke="#000" stroke-width="0.12">4260</text>
<line x1="1096.6" y1="210.5" x2="1096.6" y2="214" stroke="#333" stroke-width="0.8"/>
<text transform="translate(1096.6,224.2) scale(1.1,1.08)" font-family="Liberation Sans" font-size="8.80" fill="#000" text-anchor="middle" stroke="#000" stroke-width="0.12">4280</text>
<line x1="1143.2" y1="210.5" x2="1143.2" y2="214" stroke="#333" stroke-width="0.8"/>
<text transform="translate(1143.2,224.2) scale(1.1,1.08)" font-family="Liberation Sans" font-size="8.80" fill="#000" text-anchor="middle" stroke="#000" stroke-width="0.12">4300</text>
<line x1="1189.8" y1="210.5" x2="1189.8" y2="214" stroke="#333" stroke-width="0.8"/>
<text transform="translate(1189.8,224.2) scale(1.1,1.08)" font-family="Liberation Sans" font-size="8.80" fill="#000" text-anchor="middle" stroke="#000" stroke-width="0.12">4320</text>
<line x1="1236.4" y1="210.5" x2="1236.4" y2="214" stroke="#333" stroke-width="0.8"/>
<text transform="translate(1236.4,224.2) scale(1.1,1.08)" font-family="Liberation Sans" font-size="8.80" fill="#000" text-anchor="middle" stroke="#000" stroke-width="0.12">4340</text>
<line x1="1283.0" y1="210.5" x2="1283.0" y2="214" stroke="#333" stroke-width="0.8"/>
<text transform="translate(1283.0,224.2) scale(1.1,1.08)" font-family="Liberation Sans" font-size="8.80" fill="#000" text-anchor="middle" stroke="#000" stroke-width="0.12">4360</text>
<text transform="translate(1049.6,71.2) scale(1.0,1.08)" font-family="Liberation Sans" font-size="8.70" fill="#000" stroke="#000" stroke-width="0.12">e</text>
<text transform="translate(1055.2,67.3) scale(1.0,1.08)" font-family="Liberation Sans" font-size="6.10" fill="#000" textLength="12.2" lengthAdjust="spacingAndGlyphs" stroke="#000" stroke-width="0.12">−17</text>
<text transform="translate(1068.0,71.2) scale(1.0,1.08)" font-family="Liberation Sans" font-size="8.70" fill="#000" textLength="16.4" lengthAdjust="spacingAndGlyphs" stroke="#000" stroke-width="0.12">x2Å</text>
<defs><clipPath id="specclip"><rect x="101.5" y="348.3" width="1197.8" height="83.9"/></clipPath><clipPath id="bandclip"><rect x="559.4" y="348.3" width="54.3" height="83.9"/></clipPath><pattern id="hatch" width="8" height="18" patternUnits="userSpaceOnUse" patternTransform="translate(0,0)"><rect width="8" height="18" fill="#8c8c8c"/></pattern></defs>
<g clip-path="url(#specclip)">
<polygon points="89.5,385.5 90.7,385.3 91.9,384.4 93.1,383.7 94.2,385.7 95.4,384.6 96.6,383.7 97.8,384.4 99.0,384.1 100.1,383.7 101.3,383.9 102.5,385.4 103.7,383.1 104.8,384.6 106.0,384.1 107.2,383.0 108.4,384.3 109.6,384.2 110.7,383.8 111.9,384.5 113.1,384.8 114.3,384.2 115.4,385.2 116.6,384.7 117.8,385.2 119.0,385.5 120.2,383.5 121.3,383.9 122.5,383.6 123.7,385.1 124.9,385.5 126.0,384.0 127.2,385.7 128.4,385.3 129.6,384.9 130.7,386.0 131.9,385.4 133.1,384.7 134.3,385.2 135.5,386.0 136.6,386.5 137.8,385.8 139.0,385.8 140.2,386.4 141.3,386.2 142.5,386.3 143.7,387.3 144.9,385.7 146.1,386.3 147.2,387.2 148.4,388.4 149.6,388.0 150.8,388.9 151.9,389.6 153.1,389.8 154.3,389.4 155.5,390.5 156.7,390.0 157.8,389.8 159.0,390.5 160.2,390.5 161.4,390.9 162.5,391.5 163.7,392.6 164.9,393.6 166.1,394.4 167.2,393.6 168.4,394.3 169.6,394.4 170.8,393.9 172.0,393.9 173.1,392.3 174.3,394.5 175.5,393.3 176.7,394.8 177.8,392.8 179.0,394.7 180.2,394.1 181.4,393.8 182.6,393.1 183.7,394.0 184.9,394.5 186.1,393.2 187.3,394.8 188.4,392.9 189.6,393.7 190.8,395.3 192.0,393.0 193.2,393.3 194.3,395.0 195.5,393.1 196.7,394.6 197.9,393.2 199.0,394.4 200.2,394.7 201.4,394.9 202.6,394.0 203.7,393.9 204.9,393.9 206.1,394.0 207.3,395.6 208.5,395.9 209.6,395.3 210.8,395.3 212.0,395.2 213.2,394.8 214.3,395.6 215.5,393.8 216.7,395.4 217.9,395.8 219.1,395.4 220.2,395.3 221.4,395.1 222.6,396.1 223.8,395.5 224.9,394.3 226.1,396.2 227.3,394.4 228.5,395.6 229.6,395.3 230.8,393.8 232.0,394.7 233.2,393.4 234.4,395.6 235.5,394.1 236.7,395.2 237.9,394.0 239.1,393.2 240.2,394.6 241.4,394.3 242.6,392.6 243.8,392.7 245.0,393.1 246.1,392.9 247.3,393.7 248.5,392.8 249.7,391.7 250.8,392.8 252.0,393.6 253.2,391.3 254.4,391.5 255.6,393.5 256.7,392.9 257.9,393.9 259.1,392.3 260.3,393.1 261.4,392.7 262.6,394.1 263.8,393.0 265.0,395.6 266.1,395.4 267.3,394.2 268.5,395.0 269.7,394.4 270.9,396.1 272.0,397.2 273.2,396.3 274.4,397.4 275.6,397.6 276.7,397.7 277.9,398.0 279.1,397.7 280.3,397.6 281.5,397.2 282.6,399.4 283.8,399.6 285.0,398.9 286.2,398.8 287.3,399.7 288.5,398.0 289.7,399.4 290.9,397.6 292.1,398.5 293.2,400.0 294.4,397.9 295.6,399.1 296.8,398.3 297.9,398.6 299.1,399.7 300.3,399.2 301.5,400.4 302.6,400.5 303.8,399.8 305.0,398.4 306.2,398.9 307.4,398.9 308.5,399.8 309.7,398.5 310.9,399.5 312.1,399.5 313.2,398.8 314.4,400.5 315.6,400.6 316.8,399.8 318.0,399.9 319.1,399.7 320.3,401.1 321.5,400.7 322.7,400.8 323.8,400.3 325.0,400.1 326.2,400.6 327.4,399.5 328.6,400.7 329.7,400.4 330.9,401.5 332.1,400.6 333.3,399.6 334.4,399.8 335.6,402.0 336.8,399.6 338.0,400.8 339.1,400.2 340.3,401.7 341.5,402.1 342.7,400.1 343.9,401.2 345.0,401.8 346.2,401.8 347.4,401.6 348.6,402.0 349.7,402.0 350.9,401.1 352.1,400.4 353.3,401.1 354.5,401.4 355.6,402.4 356.8,402.9 358.0,400.8 359.2,400.8 360.3,400.8 361.5,402.6 362.7,403.0 363.9,401.9 365.1,402.0 366.2,401.9 367.4,401.4 368.6,401.1 369.8,402.1 370.9,401.4 372.1,403.4 373.3,402.9 374.5,402.9 375.6,402.6 376.8,401.4 378.0,403.2 379.2,401.6 380.4,403.3 381.5,403.4 382.7,402.9 383.9,402.6 385.1,401.7 386.2,402.4 387.4,403.2 388.6,403.6 389.8,402.6 391.0,402.2 392.1,403.0 393.3,403.6 394.5,403.4 395.7,403.1 396.8,402.1 398.0,402.0 399.2,404.1 400.4,404.2 401.6,403.7 402.7,404.5 403.9,403.2 405.1,402.2 406.3,402.7 407.4,403.8 408.6,404.6 409.8,403.1 411.0,402.9 412.1,402.6 413.3,402.6 414.5,403.0 415.7,403.4 416.9,403.9 418.0,404.1 419.2,402.9 420.4,403.5 421.6,402.7 422.7,403.1 423.9,404.5 425.1,404.8 426.3,405.1 427.5,405.0 428.6,404.3 429.8,402.9 431.0,404.4 432.2,405.2 433.3,403.2 434.5,404.2 435.7,404.0 436.9,403.8 438.0,405.2 439.2,404.2 440.4,404.8 441.6,404.9 442.8,405.5 443.9,404.4 445.1,405.5 446.3,405.4 447.5,404.2 448.6,404.1 449.8,403.6 451.0,403.5 452.2,404.6 453.4,403.8 454.5,405.4 455.7,404.5 456.9,403.6 458.1,405.8 459.2,404.0 460.4,405.6 461.6,405.9 462.8,404.7 464.0,403.9 465.1,405.3 466.3,405.5 467.5,405.3 468.7,405.6 469.8,404.8 471.0,405.9 472.2,405.7 473.4,404.2 474.5,405.7 475.7,404.5 476.9,405.1 478.1,406.0 479.3,405.4 480.4,405.7 481.6,404.4 482.8,404.1 484.0,404.6 485.1,405.1 486.3,403.9 487.5,405.9 488.7,406.2 489.9,405.9 491.0,405.2 492.2,404.6 493.4,406.2 494.6,404.1 495.7,405.2 496.9,404.5 498.1,404.8 499.3,406.3 500.5,404.5 501.6,405.7 502.8,405.2 504.0,405.0 505.2,405.8 506.3,406.0 507.5,405.6 508.7,404.8 509.9,405.0 511.0,405.5 512.2,404.7 513.4,406.2 514.6,404.5 515.8,405.8 516.9,406.7 518.1,405.5 519.3,405.6 520.5,406.1 521.6,405.5 522.8,405.1 524.0,404.5 525.2,406.8 526.4,405.4 527.5,404.5 528.7,406.1 529.9,404.7 531.1,406.1 532.2,405.1 533.4,406.0 534.6,405.4 535.8,405.3 537.0,406.7 538.1,406.6 539.3,405.8 540.5,406.7 541.7,405.0 542.8,405.5 544.0,406.9 545.2,405.0 546.4,405.2 547.5,405.0 548.7,407.2 549.9,407.0 551.1,406.9 552.3,407.0 553.4,405.6 554.6,404.9 555.8,405.5 557.0,407.2 558.1,405.1 559.3,406.5 560.5,406.2 561.7,405.6 562.9,405.9 564.0,405.2 565.2,406.9 566.4,406.9 567.6,407.1 568.7,406.8 569.9,406.2 571.1,407.2 572.3,405.3 573.5,405.5 574.6,405.6 575.8,405.2 577.0,406.2 578.2,405.9 579.3,406.9 580.5,405.3 581.7,405.5 582.9,406.0 584.0,407.1 585.2,406.2 586.4,406.7 587.6,407.1 588.8,406.4 589.9,406.1 591.1,405.4 592.3,406.7 593.5,407.1 594.6,406.9 595.8,406.2 597.0,406.1 598.2,406.8 599.4,405.5 600.5,406.6 601.7,406.3 602.9,405.7 604.1,405.5 605.2,406.5 606.4,407.6 607.6,405.8 608.8,407.3 609.9,406.2 611.1,405.4 612.3,406.2 613.5,405.5 614.7,406.6 615.8,407.4 617.0,406.6 618.2,405.6 619.4,407.1 620.5,405.3 621.7,407.4 622.9,406.0 624.1,405.7 625.3,407.1 626.4,405.9 627.6,405.4 628.8,406.9 630.0,407.1 631.1,407.0 632.3,406.5 633.5,405.5 634.7,406.9 635.9,405.4 637.0,405.8 638.2,406.3 639.4,406.1 640.6,405.4 641.7,407.5 642.9,406.6 644.1,407.0 645.3,405.5 646.4,406.5 647.6,406.9 648.8,407.5 650.0,405.6 651.2,407.5 652.3,406.5 653.5,405.8 654.7,406.1 655.9,405.7 657.0,406.4 658.2,406.0 659.4,406.4 660.6,406.7 661.8,405.9 662.9,407.0 664.1,407.4 665.3,407.6 666.5,407.6 667.6,406.1 668.8,407.2 670.0,405.6 671.2,407.5 672.4,406.6 673.5,405.9 674.7,406.1 675.9,407.8 677.1,406.0 678.2,405.5 679.4,407.3 680.6,405.8 681.8,406.5 682.9,407.3 684.1,405.5 685.3,405.6 686.5,405.9 687.7,407.9 688.8,406.2 690.0,406.8 691.2,407.3 692.4,405.8 693.5,407.5 694.7,407.6 695.9,406.4 697.1,406.4 698.3,406.0 699.4,407.2 700.6,406.3 701.8,406.1 703.0,405.5 704.1,405.5 705.3,406.1 706.5,407.2 707.7,406.9 708.9,407.3 710.0,407.0 711.2,407.6 712.4,406.2 713.6,407.6 714.7,406.0 715.9,407.0 717.1,406.9 718.3,405.6 719.4,406.2 720.6,407.9 721.8,405.9 723.0,406.5 724.2,406.0 725.3,406.7 726.5,406.6 727.7,406.1 728.9,406.5 730.0,407.7 731.2,406.1 732.4,407.2 733.6,407.5 734.8,406.6 735.9,407.3 737.1,406.0 738.3,406.1 739.5,405.7 740.6,407.8 741.8,406.3 743.0,407.3 744.2,405.9 745.4,408.0 746.5,407.2 747.7,407.1 748.9,406.3 750.1,407.7 751.2,406.2 752.4,407.9 753.6,406.7 754.8,405.9 755.9,406.6 757.1,406.5 758.3,406.3 759.5,407.3 760.7,407.1 761.8,406.7 763.0,407.2 764.2,407.3 765.4,405.7 766.5,408.1 767.7,407.4 768.9,407.7 770.1,407.1 771.3,405.9 772.4,406.5 773.6,405.8 774.8,407.9 776.0,405.6 777.1,406.0 778.3,405.9 779.5,407.0 780.7,407.9 781.9,406.3 783.0,407.9 784.2,405.6 785.4,407.7 786.6,406.9 787.7,407.0 788.9,407.8 790.1,407.7 791.3,407.0 792.4,407.3 793.6,406.8 794.8,406.7 796.0,406.3 797.2,406.6 798.3,407.0 799.5,406.7 800.7,406.4 801.9,407.5 803.0,406.3 804.2,406.4 805.4,406.5 806.6,407.4 807.8,407.3 808.9,406.4 810.1,408.0 811.3,407.3 812.5,407.2 813.6,407.8 814.8,406.5 816.0,405.6 817.2,405.8 818.3,407.9 819.5,406.8 820.7,407.3 821.9,405.7 823.1,406.5 824.2,406.1 825.4,408.0 826.6,406.7 827.8,407.5 828.9,407.1 830.1,406.9 831.3,406.4 832.5,407.1 833.7,406.0 834.8,407.2 836.0,407.5 837.2,406.9 838.4,405.9 839.5,405.7 840.7,407.8 841.9,407.7 843.1,407.9 844.3,407.7 845.4,405.9 846.6,406.3 847.8,406.1 849.0,406.2 850.1,407.3 851.3,407.1 852.5,407.2 853.7,406.8 854.8,407.9 856.0,406.8 857.2,407.0 858.4,406.7 859.6,405.8 860.7,405.8 861.9,407.1 863.1,407.9 864.3,405.7 865.4,407.7 866.6,405.8 867.8,407.8 869.0,407.0 870.2,407.4 871.3,407.5 872.5,406.8 873.7,406.8 874.9,406.2 876.0,406.8 877.2,405.7 878.4,406.4 879.6,406.7 880.8,406.0 881.9,405.7 883.1,407.6 884.3,405.8 885.5,405.9 886.6,406.6 887.8,406.8 889.0,406.9 890.2,406.3 891.3,406.6 892.5,406.7 893.7,405.9 894.9,405.9 896.1,405.6 897.2,407.1 898.4,406.3 899.6,407.9 900.8,405.6 901.9,406.8 903.1,407.2 904.3,406.4 905.5,407.0 906.7,406.7 907.8,406.8 909.0,406.3 910.2,407.0 911.4,408.0 912.5,405.8 913.7,405.9 914.9,407.1 916.1,406.5 917.3,406.4 918.4,406.5 919.6,406.3 920.8,407.8 922.0,407.4 923.1,406.6 924.3,406.0 925.5,406.4 926.7,407.7 927.8,407.5 929.0,406.5 930.2,406.0 931.4,406.7 932.6,407.0 933.7,407.7 934.9,407.9 936.1,407.3 937.3,406.3 938.4,407.7 939.6,407.0 940.8,405.7 942.0,406.1 943.2,405.9 944.3,406.6 945.5,406.2 946.7,406.8 947.9,407.1 949.0,406.2 950.2,406.7 951.4,407.3 952.6,406.5 953.8,405.7 954.9,407.9 956.1,407.2 957.3,406.6 958.5,405.8 959.6,407.1 960.8,407.6 962.0,407.7 963.2,406.9 964.3,407.3 965.5,408.0 966.7,407.5 967.9,405.7 969.1,407.1 970.2,407.1 971.4,407.5 972.6,407.1 973.8,406.7 974.9,407.6 976.1,406.6 977.3,406.0 978.5,407.0 979.7,407.6 980.8,407.2 982.0,405.7 983.2,406.6 984.4,406.0 985.5,405.9 986.7,406.7 987.9,406.4 989.1,407.1 990.2,407.2 991.4,406.9 992.6,407.1 993.8,406.7 995.0,405.6 996.1,406.1 997.3,405.9 998.5,407.5 999.7,407.3 1000.8,405.7 1002.0,407.1 1003.2,406.7 1004.4,408.0 1005.6,405.9 1006.7,406.2 1007.9,406.1 1009.1,407.8 1010.3,407.8 1011.4,407.1 1012.6,405.9 1013.8,407.9 1015.0,407.9 1016.2,406.2 1017.3,406.1 1018.5,406.8 1019.7,406.9 1020.9,407.7 1022.0,407.7 1023.2,407.7 1024.4,407.5 1025.6,406.0 1026.7,406.6 1027.9,406.6 1029.1,405.6 1030.3,407.3 1031.5,406.9 1032.6,406.1 1033.8,406.5 1035.0,407.4 1036.2,407.6 1037.3,407.2 1038.5,407.3 1039.7,407.8 1040.9,407.3 1042.1,407.5 1043.2,406.0 1044.4,407.7 1045.6,406.8 1046.8,406.2 1047.9,407.4 1049.1,407.6 1050.3,406.6 1051.5,407.1 1052.7,406.9 1053.8,407.9 1055.0,405.6 1056.2,407.6 1057.4,406.2 1058.5,405.6 1059.7,407.3 1060.9,405.6 1062.1,407.3 1063.2,406.9 1064.4,406.9 1065.6,407.3 1066.8,407.4 1068.0,407.7 1069.1,406.1 1070.3,407.4 1071.5,407.1 1072.7,407.1 1073.8,406.5 1075.0,407.7 1076.2,406.0 1077.4,407.8 1078.6,406.5 1079.7,405.9 1080.9,407.4 1082.1,407.4 1083.3,406.1 1084.4,406.4 1085.6,407.7 1086.8,407.7 1088.0,405.8 1089.2,406.0 1090.3,406.8 1091.5,406.1 1092.7,407.1 1093.9,408.1 1095.0,407.4 1096.2,407.5 1097.4,406.1 1098.6,407.7 1099.7,407.1 1100.9,405.7 1102.1,407.4 1103.3,406.5 1104.5,406.4 1105.6,405.8 1106.8,405.7 1108.0,405.8 1109.2,406.7 1110.3,405.7 1111.5,407.9 1112.7,408.0 1113.9,406.3 1115.1,406.6 1116.2,407.1 1117.4,406.4 1118.6,406.0 1119.8,405.6 1120.9,406.4 1122.1,406.3 1123.3,406.5 1124.5,407.0 1125.7,407.0 1126.8,407.6 1128.0,406.5 1129.2,407.2 1130.4,408.1 1131.5,405.8 1132.7,406.7 1133.9,406.5 1135.1,406.2 1136.2,407.4 1137.4,407.1 1138.6,405.6 1139.8,407.5 1141.0,407.2 1142.1,405.8 1143.3,407.5 1144.5,407.8 1145.7,407.7 1146.8,407.7 1148.0,407.6 1149.2,408.1 1150.4,408.0 1151.6,406.4 1152.7,406.3 1153.9,406.3 1155.1,406.9 1156.3,406.9 1157.4,406.1 1158.6,406.5 1159.8,406.2 1161.0,405.9 1162.2,406.7 1163.3,405.7 1164.5,406.7 1165.7,406.0 1166.9,406.5 1168.0,405.7 1169.2,406.6 1170.4,407.6 1171.6,406.6 1172.7,407.5 1173.9,406.0 1175.1,405.6 1176.3,406.1 1177.5,406.9 1178.6,407.0 1179.8,406.0 1181.0,407.8 1182.2,406.4 1183.3,407.6 1184.5,407.8 1185.7,405.9 1186.9,407.8 1188.1,407.3 1189.2,407.0 1190.4,407.5 1191.6,406.0 1192.8,405.6 1193.9,408.0 1195.1,405.9 1196.3,407.0 1197.5,406.5 1198.6,406.9 1199.8,407.0 1201.0,407.0 1202.2,406.2 1203.4,407.6 1204.5,405.7 1205.7,406.1 1206.9,407.7 1208.1,408.1 1209.2,407.3 1210.4,407.6 1211.6,407.8 1212.8,406.2 1214.0,407.9 1215.1,407.3 1216.3,407.4 1217.5,406.2 1218.7,405.8 1219.8,406.9 1221.0,407.1 1222.2,407.3 1223.4,406.8 1224.6,407.3 1225.7,406.3 1226.9,408.0 1228.1,405.9 1229.3,406.1 1230.4,407.5 1231.6,408.1 1232.8,406.3 1234.0,407.6 1235.1,407.0 1236.3,407.3 1237.5,406.8 1238.7,405.9 1239.9,407.2 1241.0,406.2 1242.2,406.7 1243.4,407.8 1244.6,406.3 1245.7,406.1 1246.9,407.0 1248.1,407.1 1249.3,406.2 1250.5,406.4 1251.6,407.5 1252.8,405.9 1254.0,405.9 1255.2,406.2 1256.3,407.5 1257.5,405.7 1258.7,406.3 1259.9,408.0 1261.1,406.0 1262.2,406.8 1263.4,408.1 1264.6,407.7 1265.8,407.5 1266.9,406.5 1268.1,407.8 1269.3,407.5 1270.5,407.9 1271.6,406.8 1272.8,407.7 1274.0,407.5 1275.2,405.9 1276.4,406.1 1277.5,407.5 1278.7,405.8 1279.9,407.2 1281.1,407.7 1282.2,406.4 1283.4,406.6 1284.6,406.8 1285.8,406.0 1287.0,408.3 1288.1,408.7 1289.3,410.7 1290.5,411.2 1291.7,413.6 1292.8,417.0 1294.0,420.7 1295.2,419.8 1296.4,420.2 1297.6,419.1 1298.7,420.0 1299.9,420.2 1301.1,419.6 1302.3,419.3 1303.4,420.5 1304.6,418.3 1305.8,420.1 1307.0,419.7 1308.1,419.9 1309.3,418.2 1310.5,418.5 1310.5,419.4 1309.3,419.4 1308.1,419.4 1307.0,419.4 1305.8,419.4 1304.6,419.4 1303.4,419.4 1302.3,419.4 1301.1,419.4 1299.9,419.4 1298.7,419.4 1297.6,419.4 1296.4,419.4 1295.2,419.4 1294.0,419.4 1292.8,422.2 1291.7,424.8 1290.5,427.1 1289.3,428.8 1288.1,429.8 1287.0,430.9 1285.8,431.6 1284.6,431.9 1283.4,431.9 1282.2,431.9 1281.1,431.9 1279.9,431.9 1278.7,431.9 1277.5,431.9 1276.4,431.9 1275.2,431.9 1274.0,431.9 1272.8,431.9 1271.6,431.9 1270.5,431.9 1269.3,431.9 1268.1,431.9 1266.9,431.9 1265.8,431.9 1264.6,431.9 1263.4,431.9 1262.2,431.9 1261.1,431.9 1259.9,431.9 1258.7,431.9 1257.5,431.9 1256.3,431.9 1255.2,431.9 1254.0,431.9 1252.8,431.9 1251.6,431.9 1250.5,431.9 1249.3,431.9 1248.1,431.9 1246.9,431.9 1245.7,431.9 1244.6,431.9 1243.4,431.9 1242.2,431.9 1241.0,431.9 1239.9,431.9 1238.7,431.9 1237.5,431.9 1236.3,431.9 1235.1,431.9 1234.0,431.9 1232.8,431.9 1231.6,431.9 1230.4,431.9 1229.3,431.9 1228.1,431.9 1226.9,431.9 1225.7,431.9 1224.6,431.9 1223.4,431.9 1222.2,431.9 1221.0,431.9 1219.8,431.9 1218.7,431.9 1217.5,431.9 1216.3,431.9 1215.1,431.9 1214.0,431.9 1212.8,431.9 1211.6,431.9 1210.4,431.9 1209.2,431.9 1208.1,431.9 1206.9,431.9 1205.7,431.9 1204.5,431.9 1203.4,431.9 1202.2,431.9 1201.0,431.9 1199.8,431.9 1198.6,431.9 1197.5,431.9 1196.3,431.9 1195.1,431.9 1193.9,431.9 1192.8,431.9 1191.6,431.9 1190.4,431.9 1189.2,431.9 1188.1,431.9 1186.9,431.9 1185.7,431.9 1184.5,431.9 1183.3,431.9 1182.2,431.9 1181.0,431.9 1179.8,431.9 1178.6,431.9 1177.5,431.9 1176.3,431.9 1175.1,431.9 1173.9,431.9 1172.7,431.9 1171.6,431.9 1170.4,431.9 1169.2,431.9 1168.0,431.9 1166.9,431.9 1165.7,431.9 1164.5,431.9 1163.3,431.9 1162.2,431.9 1161.0,431.9 1159.8,431.9 1158.6,431.9 1157.4,431.9 1156.3,431.9 1155.1,431.9 1153.9,431.9 1152.7,431.9 1151.6,431.9 1150.4,431.9 1149.2,431.9 1148.0,431.9 1146.8,431.9 1145.7,431.9 1144.5,431.9 1143.3,431.9 1142.1,431.9 1141.0,431.9 1139.8,431.9 1138.6,431.9 1137.4,431.9 1136.2,431.9 1135.1,431.9 1133.9,431.9 1132.7,431.9 1131.5,431.9 1130.4,431.9 1129.2,431.9 1128.0,431.9 1126.8,431.9 1125.7,431.9 1124.5,431.9 1123.3,431.9 1122.1,431.9 1120.9,431.9 1119.8,431.9 1118.6,431.9 1117.4,431.9 1116.2,431.9 1115.1,431.9 1113.9,431.9 1112.7,431.9 1111.5,431.9 1110.3,431.9 1109.2,431.9 1108.0,431.9 1106.8,431.9 1105.6,431.9 1104.5,431.9 1103.3,431.9 1102.1,431.9 1100.9,431.9 1099.7,431.9 1098.6,431.9 1097.4,431.9 1096.2,431.9 1095.0,431.9 1093.9,431.9 1092.7,431.9 1091.5,431.9 1090.3,431.9 1089.2,431.9 1088.0,431.9 1086.8,431.9 1085.6,431.9 1084.4,431.9 1083.3,431.9 1082.1,431.9 1080.9,431.9 1079.7,431.9 1078.6,431.9 1077.4,431.9 1076.2,431.9 1075.0,431.9 1073.8,431.9 1072.7,431.9 1071.5,431.9 1070.3,431.9 1069.1,431.9 1068.0,431.9 1066.8,431.9 1065.6,431.9 1064.4,431.9 1063.2,431.9 1062.1,431.9 1060.9,431.9 1059.7,431.9 1058.5,431.9 1057.4,431.9 1056.2,431.9 1055.0,431.9 1053.8,431.9 1052.7,431.9 1051.5,431.9 1050.3,431.9 1049.1,431.9 1047.9,431.9 1046.8,431.9 1045.6,431.9 1044.4,431.9 1043.2,431.9 1042.1,431.9 1040.9,431.9 1039.7,431.9 1038.5,431.9 1037.3,431.9 1036.2,431.9 1035.0,431.9 1033.8,431.9 1032.6,431.9 1031.5,431.9 1030.3,431.9 1029.1,431.9 1027.9,431.9 1026.7,431.9 1025.6,431.9 1024.4,431.9 1023.2,431.9 1022.0,431.9 1020.9,431.9 1019.7,431.9 1018.5,431.9 1017.3,431.9 1016.2,431.9 1015.0,431.9 1013.8,431.9 1012.6,431.9 1011.4,431.9 1010.3,431.9 1009.1,431.9 1007.9,431.9 1006.7,431.9 1005.6,431.9 1004.4,431.9 1003.2,431.9 1002.0,431.9 1000.8,431.9 999.7,431.9 998.5,431.9 997.3,431.9 996.1,431.9 995.0,431.9 993.8,431.9 992.6,431.9 991.4,431.9 990.2,431.9 989.1,431.9 987.9,431.9 986.7,431.9 985.5,431.9 984.4,431.9 983.2,431.9 982.0,431.9 980.8,431.9 979.7,431.9 978.5,431.9 977.3,431.9 976.1,431.9 974.9,431.9 973.8,431.9 972.6,431.9 971.4,431.9 970.2,431.9 969.1,431.9 967.9,431.9 966.7,431.9 965.5,431.9 964.3,431.9 963.2,431.9 962.0,431.9 960.8,431.9 959.6,431.9 958.5,431.9 957.3,431.9 956.1,431.9 954.9,431.9 953.8,431.9 952.6,431.9 951.4,431.9 950.2,431.9 949.0,431.9 947.9,431.9 946.7,431.9 945.5,431.9 944.3,431.9 943.2,431.9 942.0,431.9 940.8,431.9 939.6,431.9 938.4,431.9 937.3,431.9 936.1,431.9 934.9,431.9 933.7,431.9 932.6,431.9 931.4,431.9 930.2,431.9 929.0,431.9 927.8,431.9 926.7,431.9 925.5,431.9 924.3,431.9 923.1,431.9 922.0,431.9 920.8,431.9 919.6,431.9 918.4,431.9 917.3,431.9 916.1,431.9 914.9,431.9 913.7,431.9 912.5,431.9 911.4,431.9 910.2,431.9 909.0,431.9 907.8,431.9 906.7,431.9 905.5,431.9 904.3,431.9 903.1,431.9 901.9,431.9 900.8,431.9 899.6,431.9 898.4,431.9 897.2,431.9 896.1,431.9 894.9,431.9 893.7,431.9 892.5,431.9 891.3,431.9 890.2,431.9 889.0,431.9 887.8,431.9 886.6,431.9 885.5,431.9 884.3,431.9 883.1,431.9 881.9,431.9 880.8,431.9 879.6,431.9 878.4,431.9 877.2,431.9 876.0,431.9 874.9,431.9 873.7,431.9 872.5,431.9 871.3,431.9 870.2,431.9 869.0,431.9 867.8,431.9 866.6,431.9 865.4,431.9 864.3,431.9 863.1,431.9 861.9,431.9 860.7,431.9 859.6,431.9 858.4,431.9 857.2,431.9 856.0,431.9 854.8,431.9 853.7,431.9 852.5,431.9 851.3,431.9 850.1,431.9 849.0,431.9 847.8,431.9 846.6,431.9 845.4,431.9 844.3,431.9 843.1,431.9 841.9,431.9 840.7,431.9 839.5,431.9 838.4,431.9 837.2,431.9 836.0,431.9 834.8,431.9 833.7,431.9 832.5,431.9 831.3,431.9 830.1,431.9 828.9,431.9 827.8,431.9 826.6,431.9 825.4,431.9 824.2,431.9 823.1,431.9 821.9,431.9 820.7,431.9 819.5,431.9 818.3,431.9 817.2,431.9 816.0,431.9 814.8,431.9 813.6,431.9 812.5,431.9 811.3,431.9 810.1,431.9 808.9,431.9 807.8,431.9 806.6,431.9 805.4,431.9 804.2,431.9 803.0,431.9 801.9,431.9 800.7,431.9 799.5,431.9 798.3,431.9 797.2,431.9 796.0,431.9 794.8,431.9 793.6,431.9 792.4,431.9 791.3,431.9 790.1,431.9 788.9,431.9 787.7,431.9 786.6,431.9 785.4,431.9 784.2,431.9 783.0,431.9 781.9,431.9 780.7,431.9 779.5,431.9 778.3,431.9 777.1,431.9 776.0,431.9 774.8,431.9 773.6,431.9 772.4,431.9 771.3,431.9 770.1,431.9 768.9,431.9 767.7,431.9 766.5,431.9 765.4,431.9 764.2,431.9 763.0,431.9 761.8,431.9 760.7,431.9 759.5,431.9 758.3,431.9 757.1,431.9 755.9,431.9 754.8,431.9 753.6,431.9 752.4,431.9 751.2,432.0 750.1,432.0 748.9,432.0 747.7,432.0 746.5,432.0 745.4,432.0 744.2,432.0 743.0,432.0 741.8,432.0 740.6,432.0 739.5,432.0 738.3,432.0 737.1,432.0 735.9,432.0 734.8,432.0 733.6,432.0 732.4,432.0 731.2,432.0 730.0,432.0 728.9,432.0 727.7,432.0 726.5,432.0 725.3,432.0 724.2,432.0 723.0,432.0 721.8,432.0 720.6,432.0 719.4,432.0 718.3,432.0 717.1,432.1 715.9,432.1 714.7,432.1 713.6,432.1 712.4,432.1 711.2,432.1 710.0,432.1 708.9,432.1 707.7,432.1 706.5,432.1 705.3,432.1 704.1,432.1 703.0,432.1 701.8,432.1 700.6,432.1 699.4,432.1 698.3,432.1 697.1,432.1 695.9,432.1 694.7,432.1 693.5,432.1 692.4,432.1 691.2,432.1 690.0,432.1 688.8,432.1 687.7,432.1 686.5,432.1 685.3,432.1 684.1,432.1 682.9,432.2 681.8,432.2 680.6,432.2 679.4,432.2 678.2,432.2 677.1,432.2 675.9,432.2 674.7,432.2 673.5,432.2 672.4,432.2 671.2,432.2 670.0,432.2 668.8,432.2 667.6,432.2 666.5,432.2 665.3,432.2 664.1,432.2 662.9,432.2 661.8,432.2 660.6,432.2 659.4,432.2 658.2,432.2 657.0,432.2 655.9,432.2 654.7,432.2 653.5,432.2 652.3,432.2 651.2,432.2 650.0,432.3 648.8,432.3 647.6,432.3 646.4,432.3 645.3,432.3 644.1,432.3 642.9,432.3 641.7,432.3 640.6,432.3 639.4,432.3 638.2,432.3 637.0,432.3 635.9,432.3 634.7,432.3 633.5,432.3 632.3,432.3 631.1,432.3 630.0,432.3 628.8,432.3 627.6,432.3 626.4,432.3 625.3,432.3 624.1,432.3 622.9,432.3 621.7,432.3 620.5,432.3 619.4,432.3 618.2,432.3 617.0,432.3 615.8,432.4 614.7,432.4 613.5,432.4 612.3,432.4 611.1,432.4 609.9,432.4 608.8,432.4 607.6,432.4 606.4,432.4 605.2,432.4 604.1,432.4 602.9,432.4 601.7,432.4 600.5,432.4 599.4,432.4 598.2,432.4 597.0,432.4 595.8,432.4 594.6,432.4 593.5,432.4 592.3,432.4 591.1,432.4 589.9,432.4 588.8,432.4 587.6,432.4 586.4,432.4 585.2,432.4 584.0,432.4 582.9,432.4 581.7,432.5 580.5,432.5 579.3,432.5 578.2,432.5 577.0,432.5 575.8,432.5 574.6,432.5 573.5,432.5 572.3,432.5 571.1,432.6 569.9,432.6 568.7,432.6 567.6,432.6 566.4,432.6 565.2,432.6 564.0,432.7 562.9,432.7 561.7,432.7 560.5,432.7 559.3,432.7 558.1,432.7 557.0,432.7 555.8,432.8 554.6,432.8 553.4,432.8 552.3,432.8 551.1,432.8 549.9,432.8 548.7,432.9 547.5,432.9 546.4,432.9 545.2,432.9 544.0,432.9 542.8,432.9 541.7,432.9 540.5,433.0 539.3,433.0 538.1,433.0 537.0,433.0 535.8,433.0 534.6,433.0 533.4,433.1 532.2,433.1 531.1,433.1 529.9,433.1 528.7,433.1 527.5,433.1 526.4,433.2 525.2,433.2 524.0,433.2 522.8,433.2 521.6,433.2 520.5,433.2 519.3,433.2 518.1,433.3 516.9,433.3 515.8,433.3 514.6,433.3 513.4,433.3 512.2,433.3 511.0,433.4 509.9,433.4 508.7,433.4 507.5,433.4 506.3,433.4 505.2,433.4 504.0,433.5 502.8,433.5 501.6,433.5 500.5,433.5 499.3,433.5 498.1,433.5 496.9,433.5 495.7,433.6 494.6,433.6 493.4,433.6 492.2,433.6 491.0,433.6 489.9,433.6 488.7,433.7 487.5,433.7 486.3,433.7 485.1,433.7 484.0,433.7 482.8,433.7 481.6,433.7 480.4,433.8 479.3,433.8 478.1,433.8 476.9,433.8 475.7,433.8 474.5,433.8 473.4,433.9 472.2,433.9 471.0,433.9 469.8,433.9 468.7,433.9 467.5,433.9 466.3,434.0 465.1,434.0 464.0,434.0 462.8,434.0 461.6,434.0 460.4,434.0 459.2,434.1 458.1,434.1 456.9,434.1 455.7,434.2 454.5,434.2 453.4,434.2 452.2,434.2 451.0,434.3 449.8,434.3 448.6,434.3 447.5,434.4 446.3,434.4 445.1,434.4 443.9,434.5 442.8,434.5 441.6,434.5 440.4,434.6 439.2,434.6 438.0,434.6 436.9,434.7 435.7,434.7 434.5,434.7 433.3,434.8 432.2,434.8 431.0,434.8 429.8,434.8 428.6,434.9 427.5,434.9 426.3,434.9 425.1,435.0 423.9,435.0 422.7,435.0 421.6,435.1 420.4,435.1 419.2,435.1 418.0,435.2 416.9,435.2 415.7,435.2 414.5,435.3 413.3,435.3 412.1,435.3 411.0,435.3 409.8,435.4 408.6,435.4 407.4,435.4 406.3,435.5 405.1,435.5 403.9,435.5 402.7,435.6 401.6,435.6 400.4,435.6 399.2,435.7 398.0,435.7 396.8,435.8 395.7,435.8 394.5,435.8 393.3,435.9 392.1,435.9 391.0,436.0 389.8,436.0 388.6,436.1 387.4,436.1 386.2,436.1 385.1,436.2 383.9,436.2 382.7,436.3 381.5,436.3 380.4,436.3 379.2,436.4 378.0,436.4 376.8,436.5 375.6,436.5 374.5,436.6 373.3,436.6 372.1,436.6 370.9,436.7 369.8,436.7 368.6,436.8 367.4,436.8 366.2,436.9 365.1,436.9 363.9,436.9 362.7,437.0 361.5,437.0 360.3,437.1 359.2,437.1 358.0,437.1 356.8,437.2 355.6,437.2 354.5,437.3 353.3,437.3 352.1,437.4 350.9,437.4 349.7,437.4 348.6,437.5 347.4,437.5 346.2,437.6 345.0,437.6 343.9,437.6 342.7,437.7 341.5,437.7 340.3,437.8 339.1,437.8 338.0,437.9 336.8,437.9 335.6,438.0 334.4,438.1 333.3,438.1 332.1,438.2 330.9,438.2 329.7,438.3 328.6,438.3 327.4,438.4 326.2,438.4 325.0,438.5 323.8,438.5 322.7,438.6 321.5,438.6 320.3,438.7 319.1,438.7 318.0,438.8 316.8,438.8 315.6,438.9 314.4,438.9 313.2,439.0 312.1,439.0 310.9,439.1 309.7,439.2 308.5,439.2 307.4,439.3 306.2,439.3 305.0,439.4 303.8,439.4 302.6,439.5 301.5,439.5 300.3,439.6 299.1,439.6 297.9,439.7 296.8,439.7 295.6,439.8 294.4,439.8 293.2,439.9 292.1,439.9 290.9,440.0 289.7,440.0 288.5,440.1 287.3,440.1 286.2,440.2 285.0,440.2 283.8,440.3 282.6,440.6 281.5,440.8 280.3,441.1 279.1,441.3 277.9,441.6 276.7,441.8 275.6,442.1 274.4,442.3 273.2,442.6 272.0,442.8 270.9,443.1 269.7,443.3 268.5,443.6 267.3,443.8 266.1,444.1 265.0,444.3 263.8,444.6 262.6,444.8 261.4,445.1 260.3,445.3 259.1,445.6 257.9,445.8 256.7,446.1 255.6,446.3 254.4,446.6 253.2,446.4 252.0,446.3 250.8,446.2 249.7,446.1 248.5,445.9 247.3,445.8 246.1,445.7 245.0,445.6 243.8,445.4 242.6,445.3 241.4,445.2 240.2,445.1 239.1,444.9 237.9,444.8 236.7,444.7 235.5,444.6 234.4,444.4 233.2,444.3 232.0,444.2 230.8,444.1 229.6,443.9 228.5,443.8 227.3,443.7 226.1,443.6 224.9,443.4 223.8,443.5 222.6,443.5 221.4,443.6 220.2,443.6 219.1,443.6 217.9,443.7 216.7,443.7 215.5,443.8 214.3,443.8 213.2,443.9 212.0,443.9 210.8,443.9 209.6,444.0 208.5,444.0 207.3,444.1 206.1,444.1 204.9,444.1 203.7,444.2 202.6,444.2 201.4,444.3 200.2,444.3 199.0,444.4 197.9,444.4 196.7,444.4 195.5,444.5 194.3,444.5 193.2,444.6 192.0,444.6 190.8,444.6 189.6,444.7 188.4,444.7 187.3,444.8 186.1,444.8 184.9,444.9 183.7,444.9 182.6,444.9 181.4,445.0 180.2,445.0 179.0,445.1 177.8,445.1 176.7,445.1 175.5,445.2 174.3,445.2 173.1,445.3 172.0,445.3 170.8,445.4 169.6,445.4 168.4,445.4 167.2,445.5 166.1,445.5 164.9,445.9 163.7,446.3 162.5,446.6 161.4,447.0 160.2,447.4 159.0,447.7 157.8,448.1 156.7,448.5 155.5,448.8 154.3,449.2 153.1,449.5 151.9,449.9 150.8,450.3 149.6,450.6 148.4,451.0 147.2,451.4 146.1,451.7 144.9,452.1 143.7,452.5 142.5,452.8 141.3,452.9 140.2,453.0 139.0,453.0 137.8,453.1 136.6,453.2 135.5,453.3 134.3,453.3 133.1,453.4 131.9,453.5 130.7,453.5 129.6,453.6 128.4,453.7 127.2,453.7 126.0,453.8 124.9,453.9 123.7,454.0 122.5,454.0 121.3,454.1 120.2,454.2 119.0,454.2 117.8,454.3 116.6,454.4 115.4,454.4 114.3,454.5 113.1,454.6 111.9,454.7 110.7,454.7 109.6,454.8 108.4,454.9 107.2,454.9 106.0,454.9 104.8,454.8 103.7,454.7 102.5,454.7 101.3,454.6 100.1,454.5 99.0,454.4 97.8,454.4 96.6,454.3 95.4,454.2 94.2,454.2 93.1,454.1 91.9,454.0 90.7,454.0 89.5,453.9" fill="#c0c0c0"/>
<rect x="559.4" y="348.3" width="54.3" height="83.9" fill="#c4c400"/>
<g clip-path="url(#bandclip)"><polygon points="89.5,385.5 90.7,385.3 91.9,384.4 93.1,383.7 94.2,385.7 95.4,384.6 96.6,383.7 97.8,384.4 99.0,384.1 100.1,383.7 101.3,383.9 102.5,385.4 103.7,383.1 104.8,384.6 106.0,384.1 107.2,383.0 108.4,384.3 109.6,384.2 110.7,383.8 111.9,384.5 113.1,384.8 114.3,384.2 115.4,385.2 116.6,384.7 117.8,385.2 119.0,385.5 120.2,383.5 121.3,383.9 122.5,383.6 123.7,385.1 124.9,385.5 126.0,384.0 127.2,385.7 128.4,385.3 129.6,384.9 130.7,386.0 131.9,385.4 133.1,384.7 134.3,385.2 135.5,386.0 136.6,386.5 137.8,385.8 139.0,385.8 140.2,386.4 141.3,386.2 142.5,386.3 143.7,387.3 144.9,385.7 146.1,386.3 147.2,387.2 148.4,388.4 149.6,388.0 150.8,388.9 151.9,389.6 153.1,389.8 154.3,389.4 155.5,390.5 156.7,390.0 157.8,389.8 159.0,390.5 160.2,390.5 161.4,390.9 162.5,391.5 163.7,392.6 164.9,393.6 166.1,394.4 167.2,393.6 168.4,394.3 169.6,394.4 170.8,393.9 172.0,393.9 173.1,392.3 174.3,394.5 175.5,393.3 176.7,394.8 177.8,392.8 179.0,394.7 180.2,394.1 181.4,393.8 182.6,393.1 183.7,394.0 184.9,394.5 186.1,393.2 187.3,394.8 188.4,392.9 189.6,393.7 190.8,395.3 192.0,393.0 193.2,393.3 194.3,395.0 195.5,393.1 196.7,394.6 197.9,393.2 199.0,394.4 200.2,394.7 201.4,394.9 202.6,394.0 203.7,393.9 204.9,393.9 206.1,394.0 207.3,395.6 208.5,395.9 209.6,395.3 210.8,395.3 212.0,395.2 213.2,394.8 214.3,395.6 215.5,393.8 216.7,395.4 217.9,395.8 219.1,395.4 220.2,395.3 221.4,395.1 222.6,396.1 223.8,395.5 224.9,394.3 226.1,396.2 227.3,394.4 228.5,395.6 229.6,395.3 230.8,393.8 232.0,394.7 233.2,393.4 234.4,395.6 235.5,394.1 236.7,395.2 237.9,394.0 239.1,393.2 240.2,394.6 241.4,394.3 242.6,392.6 243.8,392.7 245.0,393.1 246.1,392.9 247.3,393.7 248.5,392.8 249.7,391.7 250.8,392.8 252.0,393.6 253.2,391.3 254.4,391.5 255.6,393.5 256.7,392.9 257.9,393.9 259.1,392.3 260.3,393.1 261.4,392.7 262.6,394.1 263.8,393.0 265.0,395.6 266.1,395.4 267.3,394.2 268.5,395.0 269.7,394.4 270.9,396.1 272.0,397.2 273.2,396.3 274.4,397.4 275.6,397.6 276.7,397.7 277.9,398.0 279.1,397.7 280.3,397.6 281.5,397.2 282.6,399.4 283.8,399.6 285.0,398.9 286.2,398.8 287.3,399.7 288.5,398.0 289.7,399.4 290.9,397.6 292.1,398.5 293.2,400.0 294.4,397.9 295.6,399.1 296.8,398.3 297.9,398.6 299.1,399.7 300.3,399.2 301.5,400.4 302.6,400.5 303.8,399.8 305.0,398.4 306.2,398.9 307.4,398.9 308.5,399.8 309.7,398.5 310.9,399.5 312.1,399.5 313.2,398.8 314.4,400.5 315.6,400.6 316.8,399.8 318.0,399.9 319.1,399.7 320.3,401.1 321.5,400.7 322.7,400.8 323.8,400.3 325.0,400.1 326.2,400.6 327.4,399.5 328.6,400.7 329.7,400.4 330.9,401.5 332.1,400.6 333.3,399.6 334.4,399.8 335.6,402.0 336.8,399.6 338.0,400.8 339.1,400.2 340.3,401.7 341.5,402.1 342.7,400.1 343.9,401.2 345.0,401.8 346.2,401.8 347.4,401.6 348.6,402.0 349.7,402.0 350.9,401.1 352.1,400.4 353.3,401.1 354.5,401.4 355.6,402.4 356.8,402.9 358.0,400.8 359.2,400.8 360.3,400.8 361.5,402.6 362.7,403.0 363.9,401.9 365.1,402.0 366.2,401.9 367.4,401.4 368.6,401.1 369.8,402.1 370.9,401.4 372.1,403.4 373.3,402.9 374.5,402.9 375.6,402.6 376.8,401.4 378.0,403.2 379.2,401.6 380.4,403.3 381.5,403.4 382.7,402.9 383.9,402.6 385.1,401.7 386.2,402.4 387.4,403.2 388.6,403.6 389.8,402.6 391.0,402.2 392.1,403.0 393.3,403.6 394.5,403.4 395.7,403.1 396.8,402.1 398.0,402.0 399.2,404.1 400.4,404.2 401.6,403.7 402.7,404.5 403.9,403.2 405.1,402.2 406.3,402.7 407.4,403.8 408.6,404.6 409.8,403.1 411.0,402.9 412.1,402.6 413.3,402.6 414.5,403.0 415.7,403.4 416.9,403.9 418.0,404.1 419.2,402.9 420.4,403.5 421.6,402.7 422.7,403.1 423.9,404.5 425.1,404.8 426.3,405.1 427.5,405.0 428.6,404.3 429.8,402.9 431.0,404.4 432.2,405.2 433.3,403.2 434.5,404.2 435.7,404.0 436.9,403.8 438.0,405.2 439.2,404.2 440.4,404.8 441.6,404.9 442.8,405.5 443.9,404.4 445.1,405.5 446.3,405.4 447.5,404.2 448.6,404.1 449.8,403.6 451.0,403.5 452.2,404.6 453.4,403.8 454.5,405.4 455.7,404.5 456.9,403.6 458.1,405.8 459.2,404.0 460.4,405.6 461.6,405.9 462.8,404.7 464.0,403.9 465.1,405.3 466.3,405.5 467.5,405.3 468.7,405.6 469.8,404.8 471.0,405.9 472.2,405.7 473.4,404.2 474.5,405.7 475.7,404.5 476.9,405.1 478.1,406.0 479.3,405.4 480.4,405.7 481.6,404.4 482.8,404.1 484.0,404.6 485.1,405.1 486.3,403.9 487.5,405.9 488.7,406.2 489.9,405.9 491.0,405.2 492.2,404.6 493.4,406.2 494.6,404.1 495.7,405.2 496.9,404.5 498.1,404.8 499.3,406.3 500.5,404.5 501.6,405.7 502.8,405.2 504.0,405.0 505.2,405.8 506.3,406.0 507.5,405.6 508.7,404.8 509.9,405.0 511.0,405.5 512.2,404.7 513.4,406.2 514.6,404.5 515.8,405.8 516.9,406.7 518.1,405.5 519.3,405.6 520.5,406.1 521.6,405.5 522.8,405.1 524.0,404.5 525.2,406.8 526.4,405.4 527.5,404.5 528.7,406.1 529.9,404.7 531.1,406.1 532.2,405.1 533.4,406.0 534.6,405.4 535.8,405.3 537.0,406.7 538.1,406.6 539.3,405.8 540.5,406.7 541.7,405.0 542.8,405.5 544.0,406.9 545.2,405.0 546.4,405.2 547.5,405.0 548.7,407.2 549.9,407.0 551.1,406.9 552.3,407.0 553.4,405.6 554.6,404.9 555.8,405.5 557.0,407.2 558.1,405.1 559.3,406.5 560.5,406.2 561.7,405.6 562.9,405.9 564.0,405.2 565.2,406.9 566.4,406.9 567.6,407.1 568.7,406.8 569.9,406.2 571.1,407.2 572.3,405.3 573.5,405.5 574.6,405.6 575.8,405.2 577.0,406.2 578.2,405.9 579.3,406.9 580.5,405.3 581.7,405.5 582.9,406.0 584.0,407.1 585.2,406.2 586.4,406.7 587.6,407.1 588.8,406.4 589.9,406.1 591.1,405.4 592.3,406.7 593.5,407.1 594.6,406.9 595.8,406.2 597.0,406.1 598.2,406.8 599.4,405.5 600.5,406.6 601.7,406.3 602.9,405.7 604.1,405.5 605.2,406.5 606.4,407.6 607.6,405.8 608.8,407.3 609.9,406.2 611.1,405.4 612.3,406.2 613.5,405.5 614.7,406.6 615.8,407.4 617.0,406.6 618.2,405.6 619.4,407.1 620.5,405.3 621.7,407.4 622.9,406.0 624.1,405.7 625.3,407.1 626.4,405.9 627.6,405.4 628.8,406.9 630.0,407.1 631.1,407.0 632.3,406.5 633.5,405.5 634.7,406.9 635.9,405.4 637.0,405.8 638.2,406.3 639.4,406.1 640.6,405.4 641.7,407.5 642.9,406.6 644.1,407.0 645.3,405.5 646.4,406.5 647.6,406.9 648.8,407.5 650.0,405.6 651.2,407.5 652.3,406.5 653.5,405.8 654.7,406.1 655.9,405.7 657.0,406.4 658.2,406.0 659.4,406.4 660.6,406.7 661.8,405.9 662.9,407.0 664.1,407.4 665.3,407.6 666.5,407.6 667.6,406.1 668.8,407.2 670.0,405.6 671.2,407.5 672.4,406.6 673.5,405.9 674.7,406.1 675.9,407.8 677.1,406.0 678.2,405.5 679.4,407.3 680.6,405.8 681.8,406.5 682.9,407.3 684.1,405.5 685.3,405.6 686.5,405.9 687.7,407.9 688.8,406.2 690.0,406.8 691.2,407.3 692.4,405.8 693.5,407.5 694.7,407.6 695.9,406.4 697.1,406.4 698.3,406.0 699.4,407.2 700.6,406.3 701.8,406.1 703.0,405.5 704.1,405.5 705.3,406.1 706.5,407.2 707.7,406.9 708.9,407.3 710.0,407.0 711.2,407.6 712.4,406.2 713.6,407.6 714.7,406.0 715.9,407.0 717.1,406.9 718.3,405.6 719.4,406.2 720.6,407.9 721.8,405.9 723.0,406.5 724.2,406.0 725.3,406.7 726.5,406.6 727.7,406.1 728.9,406.5 730.0,407.7 731.2,406.1 732.4,407.2 733.6,407.5 734.8,406.6 735.9,407.3 737.1,406.0 738.3,406.1 739.5,405.7 740.6,407.8 741.8,406.3 743.0,407.3 744.2,405.9 745.4,408.0 746.5,407.2 747.7,407.1 748.9,406.3 750.1,407.7 751.2,406.2 752.4,407.9 753.6,406.7 754.8,405.9 755.9,406.6 757.1,406.5 758.3,406.3 759.5,407.3 760.7,407.1 761.8,406.7 763.0,407.2 764.2,407.3 765.4,405.7 766.5,408.1 767.7,407.4 768.9,407.7 770.1,407.1 771.3,405.9 772.4,406.5 773.6,405.8 774.8,407.9 776.0,405.6 777.1,406.0 778.3,405.9 779.5,407.0 780.7,407.9 781.9,406.3 783.0,407.9 784.2,405.6 785.4,407.7 786.6,406.9 787.7,407.0 788.9,407.8 790.1,407.7 791.3,407.0 792.4,407.3 793.6,406.8 794.8,406.7 796.0,406.3 797.2,406.6 798.3,407.0 799.5,406.7 800.7,406.4 801.9,407.5 803.0,406.3 804.2,406.4 805.4,406.5 806.6,407.4 807.8,407.3 808.9,406.4 810.1,408.0 811.3,407.3 812.5,407.2 813.6,407.8 814.8,406.5 816.0,405.6 817.2,405.8 818.3,407.9 819.5,406.8 820.7,407.3 821.9,405.7 823.1,406.5 824.2,406.1 825.4,408.0 826.6,406.7 827.8,407.5 828.9,407.1 830.1,406.9 831.3,406.4 832.5,407.1 833.7,406.0 834.8,407.2 836.0,407.5 837.2,406.9 838.4,405.9 839.5,405.7 840.7,407.8 841.9,407.7 843.1,407.9 844.3,407.7 845.4,405.9 846.6,406.3 847.8,406.1 849.0,406.2 850.1,407.3 851.3,407.1 852.5,407.2 853.7,406.8 854.8,407.9 856.0,406.8 857.2,407.0 858.4,406.7 859.6,405.8 860.7,405.8 861.9,407.1 863.1,407.9 864.3,405.7 865.4,407.7 866.6,405.8 867.8,407.8 869.0,407.0 870.2,407.4 871.3,407.5 872.5,406.8 873.7,406.8 874.9,406.2 876.0,406.8 877.2,405.7 878.4,406.4 879.6,406.7 880.8,406.0 881.9,405.7 883.1,407.6 884.3,405.8 885.5,405.9 886.6,406.6 887.8,406.8 889.0,406.9 890.2,406.3 891.3,406.6 892.5,406.7 893.7,405.9 894.9,405.9 896.1,405.6 897.2,407.1 898.4,406.3 899.6,407.9 900.8,405.6 901.9,406.8 903.1,407.2 904.3,406.4 905.5,407.0 906.7,406.7 907.8,406.8 909.0,406.3 910.2,407.0 911.4,408.0 912.5,405.8 913.7,405.9 914.9,407.1 916.1,406.5 917.3,406.4 918.4,406.5 919.6,406.3 920.8,407.8 922.0,407.4 923.1,406.6 924.3,406.0 925.5,406.4 926.7,407.7 927.8,407.5 929.0,406.5 930.2,406.0 931.4,406.7 932.6,407.0 933.7,407.7 934.9,407.9 936.1,407.3 937.3,406.3 938.4,407.7 939.6,407.0 940.8,405.7 942.0,406.1 943.2,405.9 944.3,406.6 945.5,406.2 946.7,406.8 947.9,407.1 949.0,406.2 950.2,406.7 951.4,407.3 952.6,406.5 953.8,405.7 954.9,407.9 956.1,407.2 957.3,406.6 958.5,405.8 959.6,407.1 960.8,407.6 962.0,407.7 963.2,406.9 964.3,407.3 965.5,408.0 966.7,407.5 967.9,405.7 969.1,407.1 970.2,407.1 971.4,407.5 972.6,407.1 973.8,406.7 974.9,407.6 976.1,406.6 977.3,406.0 978.5,407.0 979.7,407.6 980.8,407.2 982.0,405.7 983.2,406.6 984.4,406.0 985.5,405.9 986.7,406.7 987.9,406.4 989.1,407.1 990.2,407.2 991.4,406.9 992.6,407.1 993.8,406.7 995.0,405.6 996.1,406.1 997.3,405.9 998.5,407.5 999.7,407.3 1000.8,405.7 1002.0,407.1 1003.2,406.7 1004.4,408.0 1005.6,405.9 1006.7,406.2 1007.9,406.1 1009.1,407.8 1010.3,407.8 1011.4,407.1 1012.6,405.9 1013.8,407.9 1015.0,407.9 1016.2,406.2 1017.3,406.1 1018.5,406.8 1019.7,406.9 1020.9,407.7 1022.0,407.7 1023.2,407.7 1024.4,407.5 1025.6,406.0 1026.7,406.6 1027.9,406.6 1029.1,405.6 1030.3,407.3 1031.5,406.9 1032.6,406.1 1033.8,406.5 1035.0,407.4 1036.2,407.6 1037.3,407.2 1038.5,407.3 1039.7,407.8 1040.9,407.3 1042.1,407.5 1043.2,406.0 1044.4,407.7 1045.6,406.8 1046.8,406.2 1047.9,407.4 1049.1,407.6 1050.3,406.6 1051.5,407.1 1052.7,406.9 1053.8,407.9 1055.0,405.6 1056.2,407.6 1057.4,406.2 1058.5,405.6 1059.7,407.3 1060.9,405.6 1062.1,407.3 1063.2,406.9 1064.4,406.9 1065.6,407.3 1066.8,407.4 1068.0,407.7 1069.1,406.1 1070.3,407.4 1071.5,407.1 1072.7,407.1 1073.8,406.5 1075.0,407.7 1076.2,406.0 1077.4,407.8 1078.6,406.5 1079.7,405.9 1080.9,407.4 1082.1,407.4 1083.3,406.1 1084.4,406.4 1085.6,407.7 1086.8,407.7 1088.0,405.8 1089.2,406.0 1090.3,406.8 1091.5,406.1 1092.7,407.1 1093.9,408.1 1095.0,407.4 1096.2,407.5 1097.4,406.1 1098.6,407.7 1099.7,407.1 1100.9,405.7 1102.1,407.4 1103.3,406.5 1104.5,406.4 1105.6,405.8 1106.8,405.7 1108.0,405.8 1109.2,406.7 1110.3,405.7 1111.5,407.9 1112.7,408.0 1113.9,406.3 1115.1,406.6 1116.2,407.1 1117.4,406.4 1118.6,406.0 1119.8,405.6 1120.9,406.4 1122.1,406.3 1123.3,406.5 1124.5,407.0 1125.7,407.0 1126.8,407.6 1128.0,406.5 1129.2,407.2 1130.4,408.1 1131.5,405.8 1132.7,406.7 1133.9,406.5 1135.1,406.2 1136.2,407.4 1137.4,407.1 1138.6,405.6 1139.8,407.5 1141.0,407.2 1142.1,405.8 1143.3,407.5 1144.5,407.8 1145.7,407.7 1146.8,407.7 1148.0,407.6 1149.2,408.1 1150.4,408.0 1151.6,406.4 1152.7,406.3 1153.9,406.3 1155.1,406.9 1156.3,406.9 1157.4,406.1 1158.6,406.5 1159.8,406.2 1161.0,405.9 1162.2,406.7 1163.3,405.7 1164.5,406.7 1165.7,406.0 1166.9,406.5 1168.0,405.7 1169.2,406.6 1170.4,407.6 1171.6,406.6 1172.7,407.5 1173.9,406.0 1175.1,405.6 1176.3,406.1 1177.5,406.9 1178.6,407.0 1179.8,406.0 1181.0,407.8 1182.2,406.4 1183.3,407.6 1184.5,407.8 1185.7,405.9 1186.9,407.8 1188.1,407.3 1189.2,407.0 1190.4,407.5 1191.6,406.0 1192.8,405.6 1193.9,408.0 1195.1,405.9 1196.3,407.0 1197.5,406.5 1198.6,406.9 1199.8,407.0 1201.0,407.0 1202.2,406.2 1203.4,407.6 1204.5,405.7 1205.7,406.1 1206.9,407.7 1208.1,408.1 1209.2,407.3 1210.4,407.6 1211.6,407.8 1212.8,406.2 1214.0,407.9 1215.1,407.3 1216.3,407.4 1217.5,406.2 1218.7,405.8 1219.8,406.9 1221.0,407.1 1222.2,407.3 1223.4,406.8 1224.6,407.3 1225.7,406.3 1226.9,408.0 1228.1,405.9 1229.3,406.1 1230.4,407.5 1231.6,408.1 1232.8,406.3 1234.0,407.6 1235.1,407.0 1236.3,407.3 1237.5,406.8 1238.7,405.9 1239.9,407.2 1241.0,406.2 1242.2,406.7 1243.4,407.8 1244.6,406.3 1245.7,406.1 1246.9,407.0 1248.1,407.1 1249.3,406.2 1250.5,406.4 1251.6,407.5 1252.8,405.9 1254.0,405.9 1255.2,406.2 1256.3,407.5 1257.5,405.7 1258.7,406.3 1259.9,408.0 1261.1,406.0 1262.2,406.8 1263.4,408.1 1264.6,407.7 1265.8,407.5 1266.9,406.5 1268.1,407.8 1269.3,407.5 1270.5,407.9 1271.6,406.8 1272.8,407.7 1274.0,407.5 1275.2,405.9 1276.4,406.1 1277.5,407.5 1278.7,405.8 1279.9,407.2 1281.1,407.7 1282.2,406.4 1283.4,406.6 1284.6,406.8 1285.8,406.0 1287.0,408.3 1288.1,408.7 1289.3,410.7 1290.5,411.2 1291.7,413.6 1292.8,417.0 1294.0,420.7 1295.2,419.8 1296.4,420.2 1297.6,419.1 1298.7,420.0 1299.9,420.2 1301.1,419.6 1302.3,419.3 1303.4,420.5 1304.6,418.3 1305.8,420.1 1307.0,419.7 1308.1,419.9 1309.3,418.2 1310.5,418.5 1310.5,419.4 1309.3,419.4 1308.1,419.4 1307.0,419.4 1305.8,419.4 1304.6,419.4 1303.4,419.4 1302.3,419.4 1301.1,419.4 1299.9,419.4 1298.7,419.4 1297.6,419.4 1296.4,419.4 1295.2,419.4 1294.0,419.4 1292.8,422.2 1291.7,424.8 1290.5,427.1 1289.3,428.8 1288.1,429.8 1287.0,430.9 1285.8,431.6 1284.6,431.9 1283.4,431.9 1282.2,431.9 1281.1,431.9 1279.9,431.9 1278.7,431.9 1277.5,431.9 1276.4,431.9 1275.2,431.9 1274.0,431.9 1272.8,431.9 1271.6,431.9 1270.5,431.9 1269.3,431.9 1268.1,431.9 1266.9,431.9 1265.8,431.9 1264.6,431.9 1263.4,431.9 1262.2,431.9 1261.1,431.9 1259.9,431.9 1258.7,431.9 1257.5,431.9 1256.3,431.9 1255.2,431.9 1254.0,431.9 1252.8,431.9 1251.6,431.9 1250.5,431.9 1249.3,431.9 1248.1,431.9 1246.9,431.9 1245.7,431.9 1244.6,431.9 1243.4,431.9 1242.2,431.9 1241.0,431.9 1239.9,431.9 1238.7,431.9 1237.5,431.9 1236.3,431.9 1235.1,431.9 1234.0,431.9 1232.8,431.9 1231.6,431.9 1230.4,431.9 1229.3,431.9 1228.1,431.9 1226.9,431.9 1225.7,431.9 1224.6,431.9 1223.4,431.9 1222.2,431.9 1221.0,431.9 1219.8,431.9 1218.7,431.9 1217.5,431.9 1216.3,431.9 1215.1,431.9 1214.0,431.9 1212.8,431.9 1211.6,431.9 1210.4,431.9 1209.2,431.9 1208.1,431.9 1206.9,431.9 1205.7,431.9 1204.5,431.9 1203.4,431.9 1202.2,431.9 1201.0,431.9 1199.8,431.9 1198.6,431.9 1197.5,431.9 1196.3,431.9 1195.1,431.9 1193.9,431.9 1192.8,431.9 1191.6,431.9 1190.4,431.9 1189.2,431.9 1188.1,431.9 1186.9,431.9 1185.7,431.9 1184.5,431.9 1183.3,431.9 1182.2,431.9 1181.0,431.9 1179.8,431.9 1178.6,431.9 1177.5,431.9 1176.3,431.9 1175.1,431.9 1173.9,431.9 1172.7,431.9 1171.6,431.9 1170.4,431.9 1169.2,431.9 1168.0,431.9 1166.9,431.9 1165.7,431.9 1164.5,431.9 1163.3,431.9 1162.2,431.9 1161.0,431.9 1159.8,431.9 1158.6,431.9 1157.4,431.9 1156.3,431.9 1155.1,431.9 1153.9,431.9 1152.7,431.9 1151.6,431.9 1150.4,431.9 1149.2,431.9 1148.0,431.9 1146.8,431.9 1145.7,431.9 1144.5,431.9 1143.3,431.9 1142.1,431.9 1141.0,431.9 1139.8,431.9 1138.6,431.9 1137.4,431.9 1136.2,431.9 1135.1,431.9 1133.9,431.9 1132.7,431.9 1131.5,431.9 1130.4,431.9 1129.2,431.9 1128.0,431.9 1126.8,431.9 1125.7,431.9 1124.5,431.9 1123.3,431.9 1122.1,431.9 1120.9,431.9 1119.8,431.9 1118.6,431.9 1117.4,431.9 1116.2,431.9 1115.1,431.9 1113.9,431.9 1112.7,431.9 1111.5,431.9 1110.3,431.9 1109.2,431.9 1108.0,431.9 1106.8,431.9 1105.6,431.9 1104.5,431.9 1103.3,431.9 1102.1,431.9 1100.9,431.9 1099.7,431.9 1098.6,431.9 1097.4,431.9 1096.2,431.9 1095.0,431.9 1093.9,431.9 1092.7,431.9 1091.5,431.9 1090.3,431.9 1089.2,431.9 1088.0,431.9 1086.8,431.9 1085.6,431.9 1084.4,431.9 1083.3,431.9 1082.1,431.9 1080.9,431.9 1079.7,431.9 1078.6,431.9 1077.4,431.9 1076.2,431.9 1075.0,431.9 1073.8,431.9 1072.7,431.9 1071.5,431.9 1070.3,431.9 1069.1,431.9 1068.0,431.9 1066.8,431.9 1065.6,431.9 1064.4,431.9 1063.2,431.9 1062.1,431.9 1060.9,431.9 1059.7,431.9 1058.5,431.9 1057.4,431.9 1056.2,431.9 1055.0,431.9 1053.8,431.9 1052.7,431.9 1051.5,431.9 1050.3,431.9 1049.1,431.9 1047.9,431.9 1046.8,431.9 1045.6,431.9 1044.4,431.9 1043.2,431.9 1042.1,431.9 1040.9,431.9 1039.7,431.9 1038.5,431.9 1037.3,431.9 1036.2,431.9 1035.0,431.9 1033.8,431.9 1032.6,431.9 1031.5,431.9 1030.3,431.9 1029.1,431.9 1027.9,431.9 1026.7,431.9 1025.6,431.9 1024.4,431.9 1023.2,431.9 1022.0,431.9 1020.9,431.9 1019.7,431.9 1018.5,431.9 1017.3,431.9 1016.2,431.9 1015.0,431.9 1013.8,431.9 1012.6,431.9 1011.4,431.9 1010.3,431.9 1009.1,431.9 1007.9,431.9 1006.7,431.9 1005.6,431.9 1004.4,431.9 1003.2,431.9 1002.0,431.9 1000.8,431.9 999.7,431.9 998.5,431.9 997.3,431.9 996.1,431.9 995.0,431.9 993.8,431.9 992.6,431.9 991.4,431.9 990.2,431.9 989.1,431.9 987.9,431.9 986.7,431.9 985.5,431.9 984.4,431.9 983.2,431.9 982.0,431.9 980.8,431.9 979.7,431.9 978.5,431.9 977.3,431.9 976.1,431.9 974.9,431.9 973.8,431.9 972.6,431.9 971.4,431.9 970.2,431.9 969.1,431.9 967.9,431.9 966.7,431.9 965.5,431.9 964.3,431.9 963.2,431.9 962.0,431.9 960.8,431.9 959.6,431.9 958.5,431.9 957.3,431.9 956.1,431.9 954.9,431.9 953.8,431.9 952.6,431.9 951.4,431.9 950.2,431.9 949.0,431.9 947.9,431.9 946.7,431.9 945.5,431.9 944.3,431.9 943.2,431.9 942.0,431.9 940.8,431.9 939.6,431.9 938.4,431.9 937.3,431.9 936.1,431.9 934.9,431.9 933.7,431.9 932.6,431.9 931.4,431.9 930.2,431.9 929.0,431.9 927.8,431.9 926.7,431.9 925.5,431.9 924.3,431.9 923.1,431.9 922.0,431.9 920.8,431.9 919.6,431.9 918.4,431.9 917.3,431.9 916.1,431.9 914.9,431.9 913.7,431.9 912.5,431.9 911.4,431.9 910.2,431.9 909.0,431.9 907.8,431.9 906.7,431.9 905.5,431.9 904.3,431.9 903.1,431.9 901.9,431.9 900.8,431.9 899.6,431.9 898.4,431.9 897.2,431.9 896.1,431.9 894.9,431.9 893.7,431.9 892.5,431.9 891.3,431.9 890.2,431.9 889.0,431.9 887.8,431.9 886.6,431.9 885.5,431.9 884.3,431.9 883.1,431.9 881.9,431.9 880.8,431.9 879.6,431.9 878.4,431.9 877.2,431.9 876.0,431.9 874.9,431.9 873.7,431.9 872.5,431.9 871.3,431.9 870.2,431.9 869.0,431.9 867.8,431.9 866.6,431.9 865.4,431.9 864.3,431.9 863.1,431.9 861.9,431.9 860.7,431.9 859.6,431.9 858.4,431.9 857.2,431.9 856.0,431.9 854.8,431.9 853.7,431.9 852.5,431.9 851.3,431.9 850.1,431.9 849.0,431.9 847.8,431.9 846.6,431.9 845.4,431.9 844.3,431.9 843.1,431.9 841.9,431.9 840.7,431.9 839.5,431.9 838.4,431.9 837.2,431.9 836.0,431.9 834.8,431.9 833.7,431.9 832.5,431.9 831.3,431.9 830.1,431.9 828.9,431.9 827.8,431.9 826.6,431.9 825.4,431.9 824.2,431.9 823.1,431.9 821.9,431.9 820.7,431.9 819.5,431.9 818.3,431.9 817.2,431.9 816.0,431.9 814.8,431.9 813.6,431.9 812.5,431.9 811.3,431.9 810.1,431.9 808.9,431.9 807.8,431.9 806.6,431.9 805.4,431.9 804.2,431.9 803.0,431.9 801.9,431.9 800.7,431.9 799.5,431.9 798.3,431.9 797.2,431.9 796.0,431.9 794.8,431.9 793.6,431.9 792.4,431.9 791.3,431.9 790.1,431.9 788.9,431.9 787.7,431.9 786.6,431.9 785.4,431.9 784.2,431.9 783.0,431.9 781.9,431.9 780.7,431.9 779.5,431.9 778.3,431.9 777.1,431.9 776.0,431.9 774.8,431.9 773.6,431.9 772.4,431.9 771.3,431.9 770.1,431.9 768.9,431.9 767.7,431.9 766.5,431.9 765.4,431.9 764.2,431.9 763.0,431.9 761.8,431.9 760.7,431.9 759.5,431.9 758.3,431.9 757.1,431.9 755.9,431.9 754.8,431.9 753.6,431.9 752.4,431.9 751.2,432.0 750.1,432.0 748.9,432.0 747.7,432.0 746.5,432.0 745.4,432.0 744.2,432.0 743.0,432.0 741.8,432.0 740.6,432.0 739.5,432.0 738.3,432.0 737.1,432.0 735.9,432.0 734.8,432.0 733.6,432.0 732.4,432.0 731.2,432.0 730.0,432.0 728.9,432.0 727.7,432.0 726.5,432.0 725.3,432.0 724.2,432.0 723.0,432.0 721.8,432.0 720.6,432.0 719.4,432.0 718.3,432.0 717.1,432.1 715.9,432.1 714.7,432.1 713.6,432.1 712.4,432.1 711.2,432.1 710.0,432.1 708.9,432.1 707.7,432.1 706.5,432.1 705.3,432.1 704.1,432.1 703.0,432.1 701.8,432.1 700.6,432.1 699.4,432.1 698.3,432.1 697.1,432.1 695.9,432.1 694.7,432.1 693.5,432.1 692.4,432.1 691.2,432.1 690.0,432.1 688.8,432.1 687.7,432.1 686.5,432.1 685.3,432.1 684.1,432.1 682.9,432.2 681.8,432.2 680.6,432.2 679.4,432.2 678.2,432.2 677.1,432.2 675.9,432.2 674.7,432.2 673.5,432.2 672.4,432.2 671.2,432.2 670.0,432.2 668.8,432.2 667.6,432.2 666.5,432.2 665.3,432.2 664.1,432.2 662.9,432.2 661.8,432.2 660.6,432.2 659.4,432.2 658.2,432.2 657.0,432.2 655.9,432.2 654.7,432.2 653.5,432.2 652.3,432.2 651.2,432.2 650.0,432.3 648.8,432.3 647.6,432.3 646.4,432.3 645.3,432.3 644.1,432.3 642.9,432.3 641.7,432.3 640.6,432.3 639.4,432.3 638.2,432.3 637.0,432.3 635.9,432.3 634.7,432.3 633.5,432.3 632.3,432.3 631.1,432.3 630.0,432.3 628.8,432.3 627.6,432.3 626.4,432.3 625.3,432.3 624.1,432.3 622.9,432.3 621.7,432.3 620.5,432.3 619.4,432.3 618.2,432.3 617.0,432.3 615.8,432.4 614.7,432.4 613.5,432.4 612.3,432.4 611.1,432.4 609.9,432.4 608.8,432.4 607.6,432.4 606.4,432.4 605.2,432.4 604.1,432.4 602.9,432.4 601.7,432.4 600.5,432.4 599.4,432.4 598.2,432.4 597.0,432.4 595.8,432.4 594.6,432.4 593.5,432.4 592.3,432.4 591.1,432.4 589.9,432.4 588.8,432.4 587.6,432.4 586.4,432.4 585.2,432.4 584.0,432.4 582.9,432.4 581.7,432.5 580.5,432.5 579.3,432.5 578.2,432.5 577.0,432.5 575.8,432.5 574.6,432.5 573.5,432.5 572.3,432.5 571.1,432.6 569.9,432.6 568.7,432.6 567.6,432.6 566.4,432.6 565.2,432.6 564.0,432.7 562.9,432.7 561.7,432.7 560.5,432.7 559.3,432.7 558.1,432.7 557.0,432.7 555.8,432.8 554.6,432.8 553.4,432.8 552.3,432.8 551.1,432.8 549.9,432.8 548.7,432.9 547.5,432.9 546.4,432.9 545.2,432.9 544.0,432.9 542.8,432.9 541.7,432.9 540.5,433.0 539.3,433.0 538.1,433.0 537.0,433.0 535.8,433.0 534.6,433.0 533.4,433.1 532.2,433.1 531.1,433.1 529.9,433.1 528.7,433.1 527.5,433.1 526.4,433.2 525.2,433.2 524.0,433.2 522.8,433.2 521.6,433.2 520.5,433.2 519.3,433.2 518.1,433.3 516.9,433.3 515.8,433.3 514.6,433.3 513.4,433.3 512.2,433.3 511.0,433.4 509.9,433.4 508.7,433.4 507.5,433.4 506.3,433.4 505.2,433.4 504.0,433.5 502.8,433.5 501.6,433.5 500.5,433.5 499.3,433.5 498.1,433.5 496.9,433.5 495.7,433.6 494.6,433.6 493.4,433.6 492.2,433.6 491.0,433.6 489.9,433.6 488.7,433.7 487.5,433.7 486.3,433.7 485.1,433.7 484.0,433.7 482.8,433.7 481.6,433.7 480.4,433.8 479.3,433.8 478.1,433.8 476.9,433.8 475.7,433.8 474.5,433.8 473.4,433.9 472.2,433.9 471.0,433.9 469.8,433.9 468.7,433.9 467.5,433.9 466.3,434.0 465.1,434.0 464.0,434.0 462.8,434.0 461.6,434.0 460.4,434.0 459.2,434.1 458.1,434.1 456.9,434.1 455.7,434.2 454.5,434.2 453.4,434.2 452.2,434.2 451.0,434.3 449.8,434.3 448.6,434.3 447.5,434.4 446.3,434.4 445.1,434.4 443.9,434.5 442.8,434.5 441.6,434.5 440.4,434.6 439.2,434.6 438.0,434.6 436.9,434.7 435.7,434.7 434.5,434.7 433.3,434.8 432.2,434.8 431.0,434.8 429.8,434.8 428.6,434.9 427.5,434.9 426.3,434.9 425.1,435.0 423.9,435.0 422.7,435.0 421.6,435.1 420.4,435.1 419.2,435.1 418.0,435.2 416.9,435.2 415.7,435.2 414.5,435.3 413.3,435.3 412.1,435.3 411.0,435.3 409.8,435.4 408.6,435.4 407.4,435.4 406.3,435.5 405.1,435.5 403.9,435.5 402.7,435.6 401.6,435.6 400.4,435.6 399.2,435.7 398.0,435.7 396.8,435.8 395.7,435.8 394.5,435.8 393.3,435.9 392.1,435.9 391.0,436.0 389.8,436.0 388.6,436.1 387.4,436.1 386.2,436.1 385.1,436.2 383.9,436.2 382.7,436.3 381.5,436.3 380.4,436.3 379.2,436.4 378.0,436.4 376.8,436.5 375.6,436.5 374.5,436.6 373.3,436.6 372.1,436.6 370.9,436.7 369.8,436.7 368.6,436.8 367.4,436.8 366.2,436.9 365.1,436.9 363.9,436.9 362.7,437.0 361.5,437.0 360.3,437.1 359.2,437.1 358.0,437.1 356.8,437.2 355.6,437.2 354.5,437.3 353.3,437.3 352.1,437.4 350.9,437.4 349.7,437.4 348.6,437.5 347.4,437.5 346.2,437.6 345.0,437.6 343.9,437.6 342.7,437.7 341.5,437.7 340.3,437.8 339.1,437.8 338.0,437.9 336.8,437.9 335.6,438.0 334.4,438.1 333.3,438.1 332.1,438.2 330.9,438.2 329.7,438.3 328.6,438.3 327.4,438.4 326.2,438.4 325.0,438.5 323.8,438.5 322.7,438.6 321.5,438.6 320.3,438.7 319.1,438.7 318.0,438.8 316.8,438.8 315.6,438.9 314.4,438.9 313.2,439.0 312.1,439.0 310.9,439.1 309.7,439.2 308.5,439.2 307.4,439.3 306.2,439.3 305.0,439.4 303.8,439.4 302.6,439.5 301.5,439.5 300.3,439.6 299.1,439.6 297.9,439.7 296.8,439.7 295.6,439.8 294.4,439.8 293.2,439.9 292.1,439.9 290.9,440.0 289.7,440.0 288.5,440.1 287.3,440.1 286.2,440.2 285.0,440.2 283.8,440.3 282.6,440.6 281.5,440.8 280.3,441.1 279.1,441.3 277.9,441.6 276.7,441.8 275.6,442.1 274.4,442.3 273.2,442.6 272.0,442.8 270.9,443.1 269.7,443.3 268.5,443.6 267.3,443.8 266.1,444.1 265.0,444.3 263.8,444.6 262.6,444.8 261.4,445.1 260.3,445.3 259.1,445.6 257.9,445.8 256.7,446.1 255.6,446.3 254.4,446.6 253.2,446.4 252.0,446.3 250.8,446.2 249.7,446.1 248.5,445.9 247.3,445.8 246.1,445.7 245.0,445.6 243.8,445.4 242.6,445.3 241.4,445.2 240.2,445.1 239.1,444.9 237.9,444.8 236.7,444.7 235.5,444.6 234.4,444.4 233.2,444.3 232.0,444.2 230.8,444.1 229.6,443.9 228.5,443.8 227.3,443.7 226.1,443.6 224.9,443.4 223.8,443.5 222.6,443.5 221.4,443.6 220.2,443.6 219.1,443.6 217.9,443.7 216.7,443.7 215.5,443.8 214.3,443.8 213.2,443.9 212.0,443.9 210.8,443.9 209.6,444.0 208.5,444.0 207.3,444.1 206.1,444.1 204.9,444.1 203.7,444.2 202.6,444.2 201.4,444.3 200.2,444.3 199.0,444.4 197.9,444.4 196.7,444.4 195.5,444.5 194.3,444.5 193.2,444.6 192.0,444.6 190.8,444.6 189.6,444.7 188.4,444.7 187.3,444.8 186.1,444.8 184.9,444.9 183.7,444.9 182.6,444.9 181.4,445.0 180.2,445.0 179.0,445.1 177.8,445.1 176.7,445.1 175.5,445.2 174.3,445.2 173.1,445.3 172.0,445.3 170.8,445.4 169.6,445.4 168.4,445.4 167.2,445.5 166.1,445.5 164.9,445.9 163.7,446.3 162.5,446.6 161.4,447.0 160.2,447.4 159.0,447.7 157.8,448.1 156.7,448.5 155.5,448.8 154.3,449.2 153.1,449.5 151.9,449.9 150.8,450.3 149.6,450.6 148.4,451.0 147.2,451.4 146.1,451.7 144.9,452.1 143.7,452.5 142.5,452.8 141.3,452.9 140.2,453.0 139.0,453.0 137.8,453.1 136.6,453.2 135.5,453.3 134.3,453.3 133.1,453.4 131.9,453.5 130.7,453.5 129.6,453.6 128.4,453.7 127.2,453.7 126.0,453.8 124.9,453.9 123.7,454.0 122.5,454.0 121.3,454.1 120.2,454.2 119.0,454.2 117.8,454.3 116.6,454.4 115.4,454.4 114.3,454.5 113.1,454.6 111.9,454.7 110.7,454.7 109.6,454.8 108.4,454.9 107.2,454.9 106.0,454.9 104.8,454.8 103.7,454.7 102.5,454.7 101.3,454.6 100.1,454.5 99.0,454.4 97.8,454.4 96.6,454.3 95.4,454.2 94.2,454.2 93.1,454.1 91.9,454.0 90.7,454.0 89.5,453.9" fill="#a8a530"/></g>
<line x1="101.5" y1="419.4" x2="1299.3" y2="419.4" stroke="#555" stroke-width="1"/>
<line x1="586.6" y1="348.3" x2="586.6" y2="432.2" stroke="#000" stroke-width="1" stroke-dasharray="2.5,2"/>
<rect x="127.5" y="348.3" width="12.2" height="83.9" fill="#8c8c8c" fill-opacity="0.75" stroke="#333" stroke-width="1"/>
<line x1="127.5" y1="336.3" x2="139.7" y2="328.3" stroke="#222" stroke-width="0.9"/>
<line x1="127.5" y1="362.3" x2="139.7" y2="354.3" stroke="#222" stroke-width="0.9"/>
<line x1="127.5" y1="388.3" x2="139.7" y2="380.3" stroke="#222" stroke-width="0.9"/>
<line x1="127.5" y1="414.3" x2="139.7" y2="406.3" stroke="#222" stroke-width="0.9"/>
<line x1="127.5" y1="440.3" x2="139.7" y2="432.3" stroke="#222" stroke-width="0.9"/>
<rect x="1259.0" y="348.3" width="6.7" height="83.9" fill="#8c8c8c" fill-opacity="0.75" stroke="#333" stroke-width="1"/>
<line x1="1259.0" y1="336.3" x2="1265.7" y2="328.3" stroke="#222" stroke-width="0.9"/>
<line x1="1259.0" y1="362.3" x2="1265.7" y2="354.3" stroke="#222" stroke-width="0.9"/>
<line x1="1259.0" y1="388.3" x2="1265.7" y2="380.3" stroke="#222" stroke-width="0.9"/>
<line x1="1259.0" y1="414.3" x2="1265.7" y2="406.3" stroke="#222" stroke-width="0.9"/>
<line x1="1259.0" y1="440.3" x2="1265.7" y2="432.3" stroke="#222" stroke-width="0.9"/>
<polyline points="89.5,425.4 90.7,396.2 91.9,417.9 93.1,414.9 94.2,412.3 95.4,423.8 96.6,428.8 97.8,401.5 99.0,406.8 100.1,428.5 101.3,376.1 102.5,388.5 103.7,413.4 104.8,398.5 106.0,412.3 107.2,407.9 108.4,400.6 109.6,422.3 110.7,399.2 111.9,381.6 113.1,385.3 114.3,405.5 115.4,401.0 116.6,429.4 117.8,414.1 119.0,406.3 120.2,426.4 121.3,408.2 122.5,375.5 123.7,362.9 124.9,386.5 126.0,396.9 127.2,423.1 128.4,432.7 129.6,430.4 130.7,402.6 131.9,398.0 133.1,419.0 134.3,426.8 135.5,407.4 136.6,403.5 137.8,348.3 139.0,377.6 140.2,406.0 141.3,412.8 142.5,423.5 143.7,405.8 144.9,389.1 146.1,403.3 147.2,405.9 148.4,401.4 149.6,401.8 150.8,398.8 151.9,397.7 153.1,400.8 154.3,416.6 155.5,411.4 156.7,428.5 157.8,413.2 159.0,424.9 160.2,411.7 161.4,403.5 162.5,412.4 163.7,413.1 164.9,432.6 166.1,422.7 167.2,405.1 168.4,420.1 169.6,407.2 170.8,427.7 172.0,427.6 173.1,425.6 174.3,410.1 175.5,404.6 176.7,421.6 177.8,409.5 179.0,388.8 180.2,410.5 181.4,419.1 182.6,406.5 183.7,412.5 184.9,423.4 186.1,431.7 187.3,404.7 188.4,413.8 189.6,413.3 190.8,418.9 192.0,392.8 193.2,392.8 194.3,394.4 195.5,406.2 196.7,400.6 197.9,393.3 199.0,392.4 200.2,402.2 201.4,409.7 202.6,415.6 203.7,422.0 204.9,422.2 206.1,407.6 207.3,416.4 208.5,435.2 209.6,413.4 210.8,396.7 212.0,414.5 213.2,433.3 214.3,413.4 215.5,398.9 216.7,405.5 217.9,408.8 219.1,382.0 220.2,380.7 221.4,403.0 222.6,398.1 223.8,399.9 224.9,394.5 226.1,386.9 227.3,394.9 228.5,407.5 229.6,419.0 230.8,420.8 232.0,408.5 233.2,394.2 234.4,402.3 235.5,407.0 236.7,405.8 237.9,406.6 239.1,405.3 240.2,426.5 241.4,437.1 242.6,422.4 243.8,420.0 245.0,393.1 246.1,407.6 247.3,416.6 248.5,427.6 249.7,411.4 250.8,413.1 252.0,395.3 253.2,398.4 254.4,415.3 255.6,413.3 256.7,442.2 257.9,421.0 259.1,394.3 260.3,396.4 261.4,405.3 262.6,412.8 263.8,429.5 265.0,428.3 266.1,405.7 267.3,393.7 268.5,428.7 269.7,406.0 270.9,398.5 272.0,399.0 273.2,418.4 274.4,417.6 275.6,412.8 276.7,424.2 277.9,428.3 279.1,422.8 280.3,411.5 281.5,405.4 282.6,408.7 283.8,410.4 285.0,418.9 286.2,416.6 287.3,398.8 288.5,407.7 289.7,408.4 290.9,396.3 292.1,390.5 293.2,391.5 294.4,402.2 295.6,408.5 296.8,406.1 297.9,403.7 299.1,393.3 300.3,401.7 301.5,402.1 302.6,405.3 303.8,399.7 305.0,427.7 306.2,408.6 307.4,403.4 308.5,415.4 309.7,390.0 310.9,406.8 312.1,414.2 313.2,419.4 314.4,402.5 315.6,406.8 316.8,414.9 318.0,407.2 319.1,399.6 320.3,395.4 321.5,407.1 322.7,420.4 323.8,422.5 325.0,435.8 326.2,420.6 327.4,403.1 328.6,403.9 329.7,410.7 330.9,410.1 332.1,394.4 333.3,401.9 334.4,399.6 335.6,405.6 336.8,412.4 338.0,398.9 339.1,421.1 340.3,424.9 341.5,418.0 342.7,418.9 343.9,417.9 345.0,414.7 346.2,401.5 347.4,406.4 348.6,409.4 349.7,425.6 350.9,418.5 352.1,403.2 353.3,416.0 354.5,402.5 355.6,415.8 356.8,410.0 358.0,415.9 359.2,410.5 360.3,417.4 361.5,409.5 362.7,394.1 363.9,404.5 365.1,390.9 366.2,410.9 367.4,420.1 368.6,410.6 369.8,408.2 370.9,390.6 372.1,393.9 373.3,393.7 374.5,394.5 375.6,381.6 376.8,394.1 378.0,402.6 379.2,415.9 380.4,417.1 381.5,405.3 382.7,395.2 383.9,396.5 385.1,412.5 386.2,403.4 387.4,406.2 388.6,415.8 389.8,408.6 391.0,426.2 392.1,403.6 393.3,384.9 394.5,410.8 395.7,411.9 396.8,425.2 398.0,415.3 399.2,402.5 400.4,414.1 401.6,408.9 402.7,409.9 403.9,409.6 405.1,403.8 406.3,398.5 407.4,391.8 408.6,396.8 409.8,406.6 411.0,391.4 412.1,394.6 413.3,416.4 414.5,401.1 415.7,395.0 416.9,394.2 418.0,401.4 419.2,417.2 420.4,414.9 421.6,425.7 422.7,407.3 423.9,386.2 425.1,393.9 426.3,397.8 427.5,410.9 428.6,418.2 429.8,417.4 431.0,408.4 432.2,414.2 433.3,411.0 434.5,399.8 435.7,421.1 436.9,422.0 438.0,413.2 439.2,408.0 440.4,409.9 441.6,418.4 442.8,407.0 443.9,405.9 445.1,405.0 446.3,414.5 447.5,405.3 448.6,404.6 449.8,411.8 451.0,410.2 452.2,408.6 453.4,400.7 454.5,434.2 455.7,428.3 456.9,424.8 458.1,413.9 459.2,413.5 460.4,409.5 461.6,403.3 462.8,420.8 464.0,417.0 465.1,411.8 466.3,416.3 467.5,404.2 468.7,403.5 469.8,414.9 471.0,420.0 472.2,394.0 473.4,397.7 474.5,401.0 475.7,404.4 476.9,404.2 478.1,398.5 479.3,405.6 480.4,410.1 481.6,400.6 482.8,405.4 484.0,414.3 485.1,413.1 486.3,396.1 487.5,394.3 488.7,388.2 489.9,408.1 491.0,412.6 492.2,401.1 493.4,391.8 494.6,397.2 495.7,397.4 496.9,389.9 498.1,411.1 499.3,419.5 500.5,415.2 501.6,409.3 502.8,401.3 504.0,395.5 505.2,397.6 506.3,393.4 507.5,406.6 508.7,392.4 509.9,407.1 511.0,399.0 512.2,411.1 513.4,404.5 514.6,403.8 515.8,399.9 516.9,398.8 518.1,406.4 519.3,406.3 520.5,406.3 521.6,417.9 522.8,417.4 524.0,421.0 525.2,404.7 526.4,385.6 527.5,397.1 528.7,413.1 529.9,411.6 531.1,399.7 532.2,411.0 533.4,422.1 534.6,419.3 535.8,418.4 537.0,415.1 538.1,401.8 539.3,406.7 540.5,419.1 541.7,415.1 542.8,418.5 544.0,420.7 545.2,417.4 546.4,394.5 547.5,404.2 548.7,400.0 549.9,398.3 551.1,406.5 552.3,401.1 553.4,400.0 554.6,399.2 555.8,387.0 557.0,400.0 558.1,406.1 559.3,397.8 560.5,388.3 561.7,395.4 562.9,409.5 564.0,415.3 565.2,416.1 566.4,412.2 567.6,402.3 568.7,402.2 569.9,422.9 571.1,411.9 572.3,413.6 573.5,400.6 574.6,398.6 575.8,411.3 577.0,412.5 578.2,413.6 579.3,407.0 580.5,419.8 581.7,417.6 582.9,407.5 584.0,388.9 585.2,376.6 586.4,374.9 587.6,393.3 588.8,403.6 589.9,410.1 591.1,404.7 592.3,413.7 593.5,409.8 594.6,404.7 595.8,400.8 597.0,402.3 598.2,394.5 599.4,404.5 600.5,417.0 601.7,400.7 602.9,406.2 604.1,407.5 605.2,395.2 606.4,409.3 607.6,406.4 608.8,407.2 609.9,395.2 611.1,404.0 612.3,404.9 613.5,411.8 614.7,396.0 615.8,406.9 617.0,394.7 618.2,389.0 619.4,386.2 620.5,385.8 621.7,404.7 622.9,397.3 624.1,395.7 625.3,392.2 626.4,388.1 627.6,396.1 628.8,403.6 630.0,396.9 631.1,387.6 632.3,403.6 633.5,400.2 634.7,402.8 635.9,393.0 637.0,408.5 638.2,402.6 639.4,398.4 640.6,392.5 641.7,376.4 642.9,383.0 644.1,398.8 645.3,384.2 646.4,405.5 647.6,415.5 648.8,411.0 650.0,396.9 651.2,396.0 652.3,412.0 653.5,397.5 654.7,396.9 655.9,392.4 657.0,397.0 658.2,389.5 659.4,392.8 660.6,402.2 661.8,387.2 662.9,391.4 664.1,388.6 665.3,387.3 666.5,401.9 667.6,400.0 668.8,404.3 670.0,404.4 671.2,395.3 672.4,391.1 673.5,383.4 674.7,383.6 675.9,395.5 677.1,397.4 678.2,369.8 679.4,374.8 680.6,394.9 681.8,404.0 682.9,400.3 684.1,392.8 685.3,385.4 686.5,386.1 687.7,391.5 688.8,396.8 690.0,395.5 691.2,397.8 692.4,396.0 693.5,395.6 694.7,395.0 695.9,409.7 697.1,401.9 698.3,400.3 699.4,405.0 700.6,400.5 701.8,404.9 703.0,402.8 704.1,399.2 705.3,398.8 706.5,398.4 707.7,387.7 708.9,391.6 710.0,392.3 711.2,394.2 712.4,401.4 713.6,401.7 714.7,390.9 715.9,399.4 717.1,412.7 718.3,414.3 719.4,398.2 720.6,400.5 721.8,397.7 723.0,400.0 724.2,399.3 725.3,399.0 726.5,404.7 727.7,395.5 728.9,386.4 730.0,390.9 731.2,409.1 732.4,409.9 733.6,407.4 734.8,397.4 735.9,388.2 737.1,393.8 738.3,407.3 739.5,395.8 740.6,389.2 741.8,393.6 743.0,382.0 744.2,394.5 745.4,383.0 746.5,377.0 747.7,400.8 748.9,398.0 750.1,385.5 751.2,372.2 752.4,401.7 753.6,392.5 754.8,391.9 755.9,398.4 757.1,402.1 758.3,400.0 759.5,399.4 760.7,401.7 761.8,386.2 763.0,400.7 764.2,400.2 765.4,400.5 766.5,398.1 767.7,395.3 768.9,400.0 770.1,394.3 771.3,379.8 772.4,383.8 773.6,393.0 774.8,388.9 776.0,397.9 777.1,395.8 778.3,406.1 779.5,406.2 780.7,400.2 781.9,385.6 783.0,389.2 784.2,389.1 785.4,391.2 786.6,390.1 787.7,388.8 788.9,387.0 790.1,392.7 791.3,401.6 792.4,399.1 793.6,383.5 794.8,380.2 796.0,389.8 797.2,402.5 798.3,383.9 799.5,388.7 800.7,393.5 801.9,394.1 803.0,393.4 804.2,378.2 805.4,379.7 806.6,399.0 807.8,396.0 808.9,389.3 810.1,387.2 811.3,408.0 812.5,387.6 813.6,379.8 814.8,393.2 816.0,392.2 817.2,383.4 818.3,390.6 819.5,404.5 820.7,405.8 821.9,405.1 823.1,405.5 824.2,396.4 825.4,397.0 826.6,392.6 827.8,385.0 828.9,378.3 830.1,391.6 831.3,404.5 832.5,385.9 833.7,389.9 834.8,385.3 836.0,394.1 837.2,391.7 838.4,393.6 839.5,391.4 840.7,384.5 841.9,395.5 843.1,392.4 844.3,391.6 845.4,399.0 846.6,409.4 847.8,398.3 849.0,415.9 850.1,409.3 851.3,397.9 852.5,388.9 853.7,384.3 854.8,384.2 856.0,387.5 857.2,392.5 858.4,384.6 859.6,390.9 860.7,388.2 861.9,409.0 863.1,404.2 864.3,398.4 865.4,397.3 866.6,409.0 867.8,388.7 869.0,382.5 870.2,385.8 871.3,392.7 872.5,383.3 873.7,392.7 874.9,386.6 876.0,391.4 877.2,392.8 878.4,393.5 879.6,390.9 880.8,381.7 881.9,377.5 883.1,377.8 884.3,382.1 885.5,385.0 886.6,384.9 887.8,379.0 889.0,393.6 890.2,397.4 891.3,395.4 892.5,404.7 893.7,396.5 894.9,394.4 896.1,400.6 897.2,396.8 898.4,388.1 899.6,392.4 900.8,390.0 901.9,385.0 903.1,396.6 904.3,401.4 905.5,393.3 906.7,391.6 907.8,403.5 909.0,390.3 910.2,393.7 911.4,396.6 912.5,399.0 913.7,392.9 914.9,383.9 916.1,384.9 917.3,385.3 918.4,390.4 919.6,378.3 920.8,379.5 922.0,393.8 923.1,410.8 924.3,390.8 925.5,371.0 926.7,389.0 927.8,396.3 929.0,381.3 930.2,392.4 931.4,387.4 932.6,387.1 933.7,400.6 934.9,390.6 936.1,382.6 937.3,390.5 938.4,386.7 939.6,388.4 940.8,380.4 942.0,377.3 943.2,396.4 944.3,394.0 945.5,389.3 946.7,396.0 947.9,398.3 949.0,394.9 950.2,394.1 951.4,395.2 952.6,387.8 953.8,382.7 954.9,382.5 956.1,382.2 957.3,382.6 958.5,398.6 959.6,392.9 960.8,388.1 962.0,388.5 963.2,398.2 964.3,380.1 965.5,393.2 966.7,388.2 967.9,382.3 969.1,381.8 970.2,394.0 971.4,394.3 972.6,386.9 973.8,383.3 974.9,382.1 976.1,389.7 977.3,396.9 978.5,397.7 979.7,380.9 980.8,395.7 982.0,386.0 983.2,385.0 984.4,381.7 985.5,378.9 986.7,377.8 987.9,386.8 989.1,389.4 990.2,402.7 991.4,393.2 992.6,395.9 993.8,389.7 995.0,380.0 996.1,384.6 997.3,381.2 998.5,388.2 999.7,387.1 1000.8,395.5 1002.0,409.5 1003.2,398.7 1004.4,391.9 1005.6,388.3 1006.7,389.0 1007.9,388.5 1009.1,381.3 1010.3,383.6 1011.4,389.6 1012.6,386.4 1013.8,402.7 1015.0,394.5 1016.2,388.5 1017.3,380.5 1018.5,393.2 1019.7,400.4 1020.9,387.4 1022.0,376.6 1023.2,388.0 1024.4,390.4 1025.6,390.6 1026.7,386.9 1027.9,376.3 1029.1,371.8 1030.3,382.6 1031.5,386.1 1032.6,375.4 1033.8,385.2 1035.0,388.9 1036.2,392.0 1037.3,391.4 1038.5,388.1 1039.7,390.0 1040.9,386.2 1042.1,386.7 1043.2,385.3 1044.4,391.2 1045.6,390.6 1046.8,387.4 1047.9,387.9 1049.1,386.3 1050.3,381.9 1051.5,398.0 1052.7,403.7 1053.8,387.0 1055.0,387.4 1056.2,379.6 1057.4,389.3 1058.5,394.2 1059.7,374.1 1060.9,383.3 1062.1,392.8 1063.2,394.2 1064.4,387.1 1065.6,392.4 1066.8,385.3 1068.0,382.0 1069.1,397.8 1070.3,393.0 1071.5,383.4 1072.7,374.6 1073.8,380.3 1075.0,388.5 1076.2,379.6 1077.4,389.5 1078.6,390.1 1079.7,387.9 1080.9,391.1 1082.1,365.7 1083.3,374.1 1084.4,385.1 1085.6,393.1 1086.8,396.0 1088.0,385.0 1089.2,381.7 1090.3,388.6 1091.5,387.4 1092.7,382.3 1093.9,388.2 1095.0,398.1 1096.2,382.9 1097.4,381.0 1098.6,380.2 1099.7,392.2 1100.9,402.8 1102.1,395.9 1103.3,380.3 1104.5,364.3 1105.6,362.4 1106.8,379.4 1108.0,393.4 1109.2,386.7 1110.3,379.2 1111.5,378.4 1112.7,378.9 1113.9,373.8 1115.1,390.0 1116.2,400.5 1117.4,393.5 1118.6,388.2 1119.8,367.6 1120.9,381.7 1122.1,391.2 1123.3,377.6 1124.5,373.0 1125.7,379.0 1126.8,378.0 1128.0,372.5 1129.2,376.7 1130.4,384.2 1131.5,376.1 1132.7,372.4 1133.9,375.2 1135.1,372.6 1136.2,375.0 1137.4,381.2 1138.6,380.5 1139.8,376.6 1141.0,381.1 1142.1,370.4 1143.3,372.2 1144.5,392.5 1145.7,384.3 1146.8,385.9 1148.0,384.8 1149.2,379.3 1150.4,379.2 1151.6,374.6 1152.7,375.1 1153.9,376.8 1155.1,384.3 1156.3,380.0 1157.4,372.2 1158.6,391.3 1159.8,370.5 1161.0,377.7 1162.2,374.4 1163.3,395.5 1164.5,383.5 1165.7,372.0 1166.9,373.6 1168.0,371.3 1169.2,383.1 1170.4,383.8 1171.6,382.1 1172.7,373.9 1173.9,373.3 1175.1,377.7 1176.3,379.6 1177.5,379.4 1178.6,378.3 1179.8,383.7 1181.0,378.9 1182.2,378.7 1183.3,381.7 1184.5,379.3 1185.7,367.8 1186.9,378.0 1188.1,372.3 1189.2,364.8 1190.4,368.9 1191.6,373.4 1192.8,371.1 1193.9,386.8 1195.1,387.8 1196.3,381.1 1197.5,378.3 1198.6,374.0 1199.8,359.8 1201.0,360.8 1202.2,373.0 1203.4,375.3 1204.5,381.2 1205.7,376.7 1206.9,382.5 1208.1,368.2 1209.2,376.1 1210.4,374.1 1211.6,381.6 1212.8,366.2 1214.0,365.5 1215.1,359.9 1216.3,373.9 1217.5,387.6 1218.7,384.9 1219.8,382.6 1221.0,366.3 1222.2,377.9 1223.4,380.0 1224.6,371.0 1225.7,370.9 1226.9,371.3 1228.1,380.5 1229.3,391.9 1230.4,390.9 1231.6,390.7 1232.8,367.6 1234.0,367.0 1235.1,375.3 1236.3,370.1 1237.5,368.3 1238.7,368.7 1239.9,369.1 1241.0,368.0 1242.2,376.8 1243.4,395.5 1244.6,396.8 1245.7,369.8 1246.9,373.2 1248.1,392.5 1249.3,379.7 1250.5,382.6 1251.6,385.1 1252.8,394.2 1254.0,374.6 1255.2,374.2 1256.3,368.7 1257.5,365.1 1258.7,362.8 1259.9,362.0 1261.1,371.4 1262.2,375.4 1263.4,379.9 1264.6,374.1 1265.8,379.3 1266.9,383.6 1268.1,368.8 1269.3,373.9 1270.5,397.8 1271.6,394.7 1272.8,383.4 1274.0,385.1 1275.2,370.0 1276.4,373.0 1277.5,371.3 1278.7,367.5 1279.9,366.6 1281.1,376.2 1282.2,372.9 1283.4,373.4 1284.6,370.5 1285.8,370.5 1287.0,366.5 1288.1,373.6 1289.3,381.9 1290.5,381.6 1291.7,387.9 1292.8,378.1 1294.0,371.0 1295.2,386.5 1296.4,395.4 1297.6,386.8 1298.7,387.2 1299.9,385.4 1301.1,387.8 1302.3,385.6 1303.4,388.5 1304.6,374.5 1305.8,382.1 1307.0,379.2 1308.1,377.7 1309.3,382.9 1310.5,380.7" fill="none" stroke="#0000ff" stroke-width="1.35" stroke-linejoin="round"/>
</g>
<rect x="101.5" y="348.3" width="1197.8" height="83.9" fill="none" stroke="#333" stroke-width="1"/>
<line x1="98.0" y1="419.4" x2="101.5" y2="419.4" stroke="#333" stroke-width="0.8"/>
<text transform="translate(94.3,423.0) scale(1.1,1.08)" font-family="Liberation Sans" font-size="9.60" fill="#000" text-anchor="end" stroke="#000" stroke-width="0.12">0.0</text>
<line x1="98.0" y1="393.3" x2="101.5" y2="393.3" stroke="#333" stroke-width="0.8"/>
<text transform="translate(94.3,396.9) scale(1.1,1.08)" font-family="Liberation Sans" font-size="9.60" fill="#000" text-anchor="end" stroke="#000" stroke-width="0.12">2.5</text>
<line x1="98.0" y1="367.1" x2="101.5" y2="367.1" stroke="#333" stroke-width="0.8"/>
<text transform="translate(94.3,370.8) scale(1.1,1.08)" font-family="Liberation Sans" font-size="9.60" fill="#000" text-anchor="end" stroke="#000" stroke-width="0.12">5.0</text>
<line x1="107.2" y1="432.2" x2="107.2" y2="435.7" stroke="#333" stroke-width="0.8"/>
<text transform="translate(107.2,447.3) scale(1.1,1.08)" font-family="Liberation Sans" font-size="9.60" fill="#000" text-anchor="middle" stroke="#000" stroke-width="0.12">3500</text>
<line x1="166.1" y1="432.2" x2="166.1" y2="435.7" stroke="#333" stroke-width="0.8"/>
<text transform="translate(166.1,447.3) scale(1.1,1.08)" font-family="Liberation Sans" font-size="9.60" fill="#000" text-anchor="middle" stroke="#000" stroke-width="0.12">3600</text>
<line x1="224.9" y1="432.2" x2="224.9" y2="435.7" stroke="#333" stroke-width="0.8"/>
<text transform="translate(224.9,447.3) scale(1.1,1.08)" font-family="Liberation Sans" font-size="9.60" fill="#000" text-anchor="middle" stroke="#000" stroke-width="0.12">3700</text>
<line x1="283.8" y1="432.2" x2="283.8" y2="435.7" stroke="#333" stroke-width="0.8"/>
<text transform="translate(283.8,447.3) scale(1.1,1.08)" font-family="Liberation Sans" font-size="9.60" fill="#000" text-anchor="middle" stroke="#000" stroke-width="0.12">3800</text>
<line x1="342.7" y1="432.2" x2="342.7" y2="435.7" stroke="#333" stroke-width="0.8"/>
<text transform="translate(342.7,447.3) scale(1.1,1.08)" font-family="Liberation Sans" font-size="9.60" fill="#000" text-anchor="middle" stroke="#000" stroke-width="0.12">3900</text>
<line x1="401.6" y1="432.2" x2="401.6" y2="435.7" stroke="#333" stroke-width="0.8"/>
<text transform="translate(401.6,447.3) scale(1.1,1.08)" font-family="Liberation Sans" font-size="9.60" fill="#000" text-anchor="middle" stroke="#000" stroke-width="0.12">4000</text>
<line x1="460.4" y1="432.2" x2="460.4" y2="435.7" stroke="#333" stroke-width="0.8"/>
<text transform="translate(460.4,447.3) scale(1.1,1.08)" font-family="Liberation Sans" font-size="9.60" fill="#000" text-anchor="middle" stroke="#000" stroke-width="0.12">4100</text>
<line x1="519.3" y1="432.2" x2="519.3" y2="435.7" stroke="#333" stroke-width="0.8"/>
<text transform="translate(519.3,447.3) scale(1.1,1.08)" font-family="Liberation Sans" font-size="9.60" fill="#000" text-anchor="middle" stroke="#000" stroke-width="0.12">4200</text>
<line x1="578.2" y1="432.2" x2="578.2" y2="435.7" stroke="#333" stroke-width="0.8"/>
<text transform="translate(578.2,447.3) scale(1.1,1.08)" font-family="Liberation Sans" font-size="9.60" fill="#000" text-anchor="middle" stroke="#000" stroke-width="0.12">4300</text>
<line x1="637.0" y1="432.2" x2="637.0" y2="435.7" stroke="#333" stroke-width="0.8"/>
<text transform="translate(637.0,447.3) scale(1.1,1.08)" font-family="Liberation Sans" font-size="9.60" fill="#000" text-anchor="middle" stroke="#000" stroke-width="0.12">4400</text>
<line x1="695.9" y1="432.2" x2="695.9" y2="435.7" stroke="#333" stroke-width="0.8"/>
<text transform="translate(695.9,447.3) scale(1.1,1.08)" font-family="Liberation Sans" font-size="9.60" fill="#000" text-anchor="middle" stroke="#000" stroke-width="0.12">4500</text>
<line x1="754.8" y1="432.2" x2="754.8" y2="435.7" stroke="#333" stroke-width="0.8"/>
<text transform="translate(754.8,447.3) scale(1.1,1.08)" font-family="Liberation Sans" font-size="9.60" fill="#000" text-anchor="middle" stroke="#000" stroke-width="0.12">4600</text>
<line x1="813.6" y1="432.2" x2="813.6" y2="435.7" stroke="#333" stroke-width="0.8"/>
<text transform="translate(813.6,447.3) scale(1.1,1.08)" font-family="Liberation Sans" font-size="9.60" fill="#000" text-anchor="middle" stroke="#000" stroke-width="0.12">4700</text>
<line x1="872.5" y1="432.2" x2="872.5" y2="435.7" stroke="#333" stroke-width="0.8"/>
<text transform="translate(872.5,447.3) scale(1.1,1.08)" font-family="Liberation Sans" font-size="9.60" fill="#000" text-anchor="middle" stroke="#000" stroke-width="0.12">4800</text>
<line x1="931.4" y1="432.2" x2="931.4" y2="435.7" stroke="#333" stroke-width="0.8"/>
<text transform="translate(931.4,447.3) scale(1.1,1.08)" font-family="Liberation Sans" font-size="9.60" fill="#000" text-anchor="middle" stroke="#000" stroke-width="0.12">4900</text>
<line x1="990.2" y1="432.2" x2="990.2" y2="435.7" stroke="#333" stroke-width="0.8"/>
<text transform="translate(990.2,447.3) scale(1.1,1.08)" font-family="Liberation Sans" font-size="9.60" fill="#000" text-anchor="middle" stroke="#000" stroke-width="0.12">5000</text>
<line x1="1049.1" y1="432.2" x2="1049.1" y2="435.7" stroke="#333" stroke-width="0.8"/>
<text transform="translate(1049.1,447.3) scale(1.1,1.08)" font-family="Liberation Sans" font-size="9.60" fill="#000" text-anchor="middle" stroke="#000" stroke-width="0.12">5100</text>
<line x1="1108.0" y1="432.2" x2="1108.0" y2="435.7" stroke="#333" stroke-width="0.8"/>
<text transform="translate(1108.0,447.3) scale(1.1,1.08)" font-family="Liberation Sans" font-size="9.60" fill="#000" text-anchor="middle" stroke="#000" stroke-width="0.12">5200</text>
<line x1="1166.9" y1="432.2" x2="1166.9" y2="435.7" stroke="#333" stroke-width="0.8"/>
<text transform="translate(1166.9,447.3) scale(1.1,1.08)" font-family="Liberation Sans" font-size="9.60" fill="#000" text-anchor="middle" stroke="#000" stroke-width="0.12">5300</text>
<line x1="1225.7" y1="432.2" x2="1225.7" y2="435.7" stroke="#333" stroke-width="0.8"/>
<text transform="translate(1225.7,447.3) scale(1.1,1.08)" font-family="Liberation Sans" font-size="9.60" fill="#000" text-anchor="middle" stroke="#000" stroke-width="0.12">5400</text>
<line x1="1284.6" y1="432.2" x2="1284.6" y2="435.7" stroke="#333" stroke-width="0.8"/>
<text transform="translate(1284.6,447.3) scale(1.1,1.08)" font-family="Liberation Sans" font-size="9.60" fill="#000" text-anchor="middle" stroke="#000" stroke-width="0.12">5500</text>
<text transform="translate(107.0,346.0) scale(1.0,1.08)" font-family="Liberation Sans" font-size="10.00" fill="#000" stroke="#000" stroke-width="0.12">e</text>
<text transform="translate(113.4,341.3) scale(1.0,1.08)" font-family="Liberation Sans" font-size="7.00" fill="#000" textLength="14.0" lengthAdjust="spacingAndGlyphs" stroke="#000" stroke-width="0.12">−17</text>
<text transform="translate(128.3,346.0) scale(1.0,1.08)" font-family="Liberation Sans" font-size="10.00" fill="#000" textLength="18.8" lengthAdjust="spacingAndGlyphs" stroke="#000" stroke-width="0.12">x2Å</text>
<defs><clipPath id="lblclip"><rect x="0" y="0" width="1400" height="348.0"/></clipPath><clipPath id="lblclip2"><rect x="0" y="0" width="1400" height="305.3"/></clipPath></defs>
<g clip-path="url(#lblclip)">
<text transform="translate(105.3,319.8) rotate(90) scale(1.0,1.06)" font-family="Liberation Sans" font-size="10.20" fill="#800080" stroke="#800080" stroke-width="0.1">CIV</text>
<text transform="translate(105.3,344.6) rotate(90) scale(1.3,1.0)" font-family="Liberation Sans" font-size="10.20" fill="#800080" stroke="#800080" stroke-width="0.1">{</text>
</g>
<g clip-path="url(#lblclip)">
<text transform="translate(115.5,324.9) rotate(90) scale(1.0,1.06)" font-family="Liberation Sans" font-size="10.20" fill="#8a2be2" stroke="#8a2be2" stroke-width="0.1">SiII</text>
<text transform="translate(115.5,344.6) rotate(90) scale(1.3,1.0)" font-family="Liberation Sans" font-size="10.20" fill="#8a2be2" stroke="#8a2be2" stroke-width="0.1">{</text>
</g>
<g clip-path="url(#lblclip)">
<text transform="translate(152.7,323.2) rotate(90) scale(1.0,1.06)" font-family="Liberation Sans" font-size="10.20" fill="#ff00ff" stroke="#ff00ff" stroke-width="0.1">CII</text>
<text transform="translate(152.7,344.6) rotate(90) scale(1.3,1.0)" font-family="Liberation Sans" font-size="10.20" fill="#ff00ff" stroke="#ff00ff" stroke-width="0.1">{</text>
</g>
<g clip-path="url(#lblclip)">
<text transform="translate(205.8,319.2) rotate(90) scale(1.0,1.06)" font-family="Liberation Sans" font-size="10.20" fill="#ff0000" stroke="#ff0000" stroke-width="0.1">OVI</text>
<text transform="translate(205.8,344.6) rotate(90) scale(1.3,1.0)" font-family="Liberation Sans" font-size="10.20" fill="#ff0000" stroke="#ff0000" stroke-width="0.1">{</text>
</g>
<g clip-path="url(#lblclip)">
<text transform="translate(226.4,320.4) rotate(90) scale(1.0,1.06)" font-family="Liberation Sans" font-size="10.20" fill="#800080" stroke="#800080" stroke-width="0.1">HeII</text>
<text transform="translate(226.4,344.6) rotate(90) scale(1.3,1.0)" font-family="Liberation Sans" font-size="10.20" fill="#800080" stroke="#800080" stroke-width="0.1">{</text>
</g>
<g clip-path="url(#lblclip)">
<text transform="translate(335.3,320.4) rotate(90) scale(1.0,1.06)" font-family="Liberation Sans" font-size="10.20" fill="#8a2be2" stroke="#8a2be2" stroke-width="0.1">SiIV</text>
<text transform="translate(335.3,344.6) rotate(90) scale(1.3,1.0)" font-family="Liberation Sans" font-size="10.20" fill="#8a2be2" stroke="#8a2be2" stroke-width="0.1">{</text>
</g>
<g clip-path="url(#lblclip)">
<text transform="translate(429.5,322.6) rotate(90) scale(1.0,1.06)" font-family="Liberation Sans" font-size="10.20" fill="#87ceeb" stroke="#87ceeb" stroke-width="0.1">OII</text>
<text transform="translate(429.5,344.6) rotate(90) scale(1.3,1.0)" font-family="Liberation Sans" font-size="10.20" fill="#87ceeb" stroke="#87ceeb" stroke-width="0.1">{</text>
</g>
<g clip-path="url(#lblclip)">
<text transform="translate(442.1,319.8) rotate(90) scale(1.0,1.06)" font-family="Liberation Sans" font-size="10.20" fill="#ffa500" stroke="#ffa500" stroke-width="0.1">CIV</text>
<text transform="translate(442.1,344.6) rotate(90) scale(1.3,1.0)" font-family="Liberation Sans" font-size="10.20" fill="#ffa500" stroke="#ffa500" stroke-width="0.1">{</text>
</g>
<g clip-path="url(#lblclip)">
<text transform="translate(451.3,322.6) rotate(90) scale(1.0,1.06)" font-family="Liberation Sans" font-size="10.20" fill="#87ceeb" stroke="#87ceeb" stroke-width="0.1">OII</text>
<text transform="translate(451.3,344.6) rotate(90) scale(1.3,1.0)" font-family="Liberation Sans" font-size="10.20" fill="#87ceeb" stroke="#87ceeb" stroke-width="0.1">{</text>
</g>
<g clip-path="url(#lblclip)">
<text transform="translate(635.4,319.5) rotate(90) scale(1.0,1.06)" font-family="Liberation Sans" font-size="10.20" fill="#ff0000" stroke="#ff0000" stroke-width="0.1">NV</text>
<text transform="translate(635.4,344.6) rotate(90) scale(1.3,1.0)" font-family="Liberation Sans" font-size="10.20" fill="#ff0000" stroke="#ff0000" stroke-width="0.1">{</text>
</g>
<g clip-path="url(#lblclip)">
<text transform="translate(683.4,324.5) rotate(90) scale(1.0,1.06)" font-family="Liberation Sans" font-size="10.20" fill="#ff0000" stroke="#ff0000" stroke-width="0.1">SiII</text>
<text transform="translate(683.4,344.6) rotate(90) scale(1.3,1.0)" font-family="Liberation Sans" font-size="10.20" fill="#ff0000" stroke="#ff0000" stroke-width="0.1">{</text>
</g>
<g clip-path="url(#lblclip)">
<text transform="translate(733.4,320.5) rotate(90) scale(1.0,1.06)" font-family="Liberation Sans" font-size="10.20" fill="#8a2be2" stroke="#8a2be2" stroke-width="0.1">HeII</text>
<text transform="translate(733.4,344.6) rotate(90) scale(1.3,1.0)" font-family="Liberation Sans" font-size="10.20" fill="#8a2be2" stroke="#8a2be2" stroke-width="0.1">{</text>
</g>
<g clip-path="url(#lblclip)">
<text transform="translate(820.4,327.5) rotate(90) scale(1.0,1.06)" font-family="Liberation Sans" font-size="10.20" fill="#87ceeb" stroke="#87ceeb" stroke-width="0.1">Hγ</text>
<text transform="translate(820.4,344.6) rotate(90) scale(1.3,1.0)" font-family="Liberation Sans" font-size="10.20" fill="#87ceeb" stroke="#87ceeb" stroke-width="0.1">{</text>
</g>
<g clip-path="url(#lblclip)">
<text transform="translate(845.4,327.5) rotate(90) scale(1.0,1.06)" font-family="Liberation Sans" font-size="10.20" fill="#87ceeb" stroke="#87ceeb" stroke-width="0.1">Hγ</text>
<text transform="translate(845.4,344.6) rotate(90) scale(1.3,1.0)" font-family="Liberation Sans" font-size="10.20" fill="#87ceeb" stroke="#87ceeb" stroke-width="0.1">{</text>
</g>
<g clip-path="url(#lblclip)">
<text transform="translate(963.4,320.3) rotate(90) scale(1.0,1.06)" font-family="Liberation Sans" font-size="10.20" fill="#ff0000" stroke="#ff0000" stroke-width="0.1">SiIV</text>
<text transform="translate(963.4,344.6) rotate(90) scale(1.3,1.0)" font-family="Liberation Sans" font-size="10.20" fill="#ff0000" stroke="#ff0000" stroke-width="0.1">{</text>
</g>
<g clip-path="url(#lblclip)">
<text transform="translate(1000.0,327.3) rotate(90) scale(1.0,1.06)" font-family="Liberation Sans" font-size="10.20" fill="#008000" stroke="#008000" stroke-width="0.1">Hγ</text>
<text transform="translate(1000.0,344.6) rotate(90) scale(1.3,1.0)" font-family="Liberation Sans" font-size="10.20" fill="#008000" stroke="#008000" stroke-width="0.1">{</text>
</g>
<g clip-path="url(#lblclip)">
<text transform="translate(1136.3,323.5) rotate(90) scale(1.0,1.06)" font-family="Liberation Sans" font-size="10.20" fill="#800080" stroke="#800080" stroke-width="0.1">CII</text>
<text transform="translate(1136.3,344.6) rotate(90) scale(1.3,1.0)" font-family="Liberation Sans" font-size="10.20" fill="#800080" stroke="#800080" stroke-width="0.1">{</text>
</g>
<g clip-path="url(#lblclip)">
<text transform="translate(1155.0,327.3) rotate(90) scale(1.0,1.06)" font-family="Liberation Sans" font-size="10.20" fill="#87ceeb" stroke="#87ceeb" stroke-width="0.1">Hβ</text>
<text transform="translate(1155.0,344.6) rotate(90) scale(1.3,1.0)" font-family="Liberation Sans" font-size="10.20" fill="#87ceeb" stroke="#87ceeb" stroke-width="0.1">{</text>
</g>
<g clip-path="url(#lblclip)">
<text transform="translate(1172.3,323.5) rotate(90) scale(1.0,1.06)" font-family="Liberation Sans" font-size="10.20" fill="#8a2be2" stroke="#8a2be2" stroke-width="0.1">CIII</text>
<text transform="translate(1172.3,344.6) rotate(90) scale(1.3,1.0)" font-family="Liberation Sans" font-size="10.20" fill="#8a2be2" stroke="#8a2be2" stroke-width="0.1">{</text>
</g>
<g clip-path="url(#lblclip)">
<text transform="translate(1182.6,327.3) rotate(90) scale(1.0,1.06)" font-family="Liberation Sans" font-size="10.20" fill="#87ceeb" stroke="#87ceeb" stroke-width="0.1">Hβ</text>
<text transform="translate(1182.6,344.6) rotate(90) scale(1.3,1.0)" font-family="Liberation Sans" font-size="10.20" fill="#87ceeb" stroke="#87ceeb" stroke-width="0.1">{</text>
</g>
<g clip-path="url(#lblclip)">
<text transform="translate(1217.3,322.8) rotate(90) scale(1.0,1.06)" font-family="Liberation Sans" font-size="10.20" fill="#87ceeb" stroke="#87ceeb" stroke-width="0.1">OIII</text>
<text transform="translate(1217.3,344.6) rotate(90) scale(1.3,1.0)" font-family="Liberation Sans" font-size="10.20" fill="#87ceeb" stroke="#87ceeb" stroke-width="0.1">{</text>
</g>
<g clip-path="url(#lblclip)">
<text transform="translate(1245.6,322.8) rotate(90) scale(1.0,1.06)" font-family="Liberation Sans" font-size="10.20" fill="#87ceeb" stroke="#87ceeb" stroke-width="0.1">OIII</text>
<text transform="translate(1245.6,344.6) rotate(90) scale(1.3,1.0)" font-family="Liberation Sans" font-size="10.20" fill="#87ceeb" stroke="#87ceeb" stroke-width="0.1">{</text>
</g>
<g clip-path="url(#lblclip)">
<text transform="translate(1280.9,319.6) rotate(90) scale(1.0,1.06)" font-family="Liberation Sans" font-size="10.20" fill="#ff0000" stroke="#ff0000" stroke-width="0.1">CIV</text>
<text transform="translate(1280.9,344.6) rotate(90) scale(1.3,1.0)" font-family="Liberation Sans" font-size="10.20" fill="#ff0000" stroke="#ff0000" stroke-width="0.1">{</text>
</g>
<g clip-path="url(#lblclip2)">
<text transform="translate(207.5,278.6) rotate(90) scale(1.0,1.06)" font-family="Liberation Sans" font-size="10.20" fill="#ffa500" stroke="#ffa500" stroke-width="0.1">SiIV</text>
<text transform="translate(207.5,301.2) rotate(90) scale(1.3,1.0)" font-family="Liberation Sans" font-size="10.20" fill="#ffa500" stroke="#ffa500" stroke-width="0.1">{</text>
</g>
<g clip-path="url(#lblclip2)">
<text transform="translate(998.7,281.7) rotate(90) scale(1.0,1.06)" font-family="Liberation Sans" font-size="10.20" fill="#ffa500" stroke="#ffa500" stroke-width="0.1">CIII</text>
<text transform="translate(998.7,301.2) rotate(90) scale(1.3,1.0)" font-family="Liberation Sans" font-size="10.20" fill="#ffa500" stroke="#ffa500" stroke-width="0.1">{</text>
</g>
<g clip-path="url(#lblclip2)">
<text transform="translate(1248.1,281.1) rotate(90) scale(1.0,1.06)" font-family="Liberation Sans" font-size="10.20" fill="#87ceeb" stroke="#87ceeb" stroke-width="0.1">OIII</text>
<text transform="translate(1248.1,301.2) rotate(90) scale(1.3,1.0)" font-family="Liberation Sans" font-size="10.20" fill="#87ceeb" stroke="#87ceeb" stroke-width="0.1">{</text>
</g>
<g clip-path="url(#lblclip2)">
<text transform="translate(1276.4,281.1) rotate(90) scale(1.0,1.06)" font-family="Liberation Sans" font-size="10.20" fill="#87ceeb" stroke="#87ceeb" stroke-width="0.1">OIII</text>
<text transform="translate(1276.4,301.2) rotate(90) scale(1.3,1.0)" font-family="Liberation Sans" font-size="10.20" fill="#87ceeb" stroke="#87ceeb" stroke-width="0.1">{</text>
</g>
<rect x="480.2" y="450.0" width="17" height="6.3" fill="#ff0000"/>
<text transform="translate(503.7,456.4) scale(1.1,1.08)" font-family="Liberation Sans" font-size="7.90" fill="#000" stroke="#000" stroke-width="0.12">Lyα</text>
<rect x="534.0" y="450.0" width="17" height="6.3" fill="#008000"/>
<text transform="translate(557.5,456.4) scale(1.1,1.08)" font-family="Liberation Sans" font-size="7.90" fill="#000" stroke="#000" stroke-width="0.12">OII</text>
<rect x="586.3" y="450.0" width="17" height="6.3" fill="#8a2be2"/>
<text transform="translate(609.8,456.4) scale(1.1,1.08)" font-family="Liberation Sans" font-size="7.90" fill="#000" stroke="#000" stroke-width="0.12">CIV</text>
<rect x="641.7" y="450.0" width="17" height="6.3" fill="#800080"/>
<text transform="translate(665.2,456.4) scale(1.1,1.08)" font-family="Liberation Sans" font-size="7.90" fill="#000" stroke="#000" stroke-width="0.12">CIII</text>
<rect x="693.1" y="450.0" width="17" height="6.3" fill="#ff00ff"/>
<text transform="translate(716.6,456.4) scale(1.1,1.08)" font-family="Liberation Sans" font-size="7.90" fill="#000" stroke="#000" stroke-width="0.12">MgII</text>
<rect x="749.1" y="450.0" width="17" height="6.3" fill="#ffa500"/>
<text transform="translate(772.6,456.4) scale(1.1,1.08)" font-family="Liberation Sans" font-size="7.90" fill="#000" stroke="#000" stroke-width="0.12">HeII</text>
<rect x="804.0" y="450.0" width="17" height="6.3" fill="#87ceeb"/>
<text transform="translate(827.5,456.4) scale(1.1,1.08)" font-family="Liberation Sans" font-size="7.90" fill="#000" stroke="#000" stroke-width="0.12">(K)CaII</text>
<rect x="869.7" y="450.0" width="17" height="6.3" fill="#87ceeb"/>
<text transform="translate(893.2,456.4) scale(1.1,1.08)" font-family="Liberation Sans" font-size="7.90" fill="#000" stroke="#000" stroke-width="0.12">(H)CaII</text>
<text transform="translate(69.5,498.9) scale(1.0,1.107)" font-family="Liberation Mono" font-size="13.00" fill="#000" textLength="485.2" lengthAdjust="spacingAndGlyphs">HSC-DEX : Possible Matches = 1 (within +/- 3")  P(LAE)/P(OII):</text>
<text transform="translate(562.0,498.9) scale(1.0,1.08)" font-family="Liberation Sans" font-size="12.40" fill="#000" textLength="35.0" lengthAdjust="spacingAndGlyphs" stroke="#000" stroke-width="0.12">0.151</text>
<text transform="translate(603.5,493.4) scale(1.0,1.08)" font-family="Liberation Sans" font-size="8.80" fill="#000" textLength="25.4" lengthAdjust="spacingAndGlyphs" stroke="#000" stroke-width="0.12">0.212</text>
<text transform="translate(603.5,502.4) scale(1.0,1.08)" font-family="Liberation Sans" font-size="8.80" fill="#000" textLength="25.4" lengthAdjust="spacingAndGlyphs" stroke="#000" stroke-width="0.12">0.103</text>
<text transform="translate(636.5,498.9) scale(1.0,1.107)" font-family="Liberation Mono" font-size="13.00" fill="#000" textLength="23.5" lengthAdjust="spacingAndGlyphs">(r)</text>
<defs><clipPath id="c1"><rect x="70.4" y="533.0" width="148" height="147.8"/></clipPath><radialGradient id="blob1" cx="0.5" cy="0.5" r="0.5"><stop offset="0" stop-color="#000"/><stop offset="0.52" stop-color="#000"/><stop offset="0.7" stop-color="#333" stop-opacity="0.85"/><stop offset="0.87" stop-color="#999" stop-opacity="0.35"/><stop offset="1" stop-color="#bbb" stop-opacity="0"/></radialGradient></defs>
<g clip-path="url(#c1)"><rect x="70.4" y="533.0" width="148" height="147.8" fill="#ccc" filter="url(#lg)"/>
<circle cx="141.0" cy="605.5" r="32" fill="url(#blob1)"/></g>
<circle cx="117.5" cy="559" r="12.3" fill="none" stroke="#5a5a5a" stroke-width="1.0"/>
<circle cx="141.1" cy="559.8" r="12.3" fill="none" stroke="#5a5a5a" stroke-width="1.0"/>
<circle cx="165.5" cy="562.1" r="12.3" fill="none" stroke="#5a5a5a" stroke-width="1.0"/>
<circle cx="103.8" cy="579.4" r="12.3" fill="none" stroke="#5a5a5a" stroke-width="1.0"/>
<circle cx="129" cy="581" r="12.3" fill="none" stroke="#5a5a5a" stroke-width="1.0"/>
<circle cx="153.4" cy="581.8" r="12.3" fill="none" stroke="#5a5a5a" stroke-width="1.0"/>
<circle cx="177" cy="582.6" r="12.3" fill="none" stroke="#5a5a5a" stroke-width="1.0"/>
<circle cx="115.6" cy="600.7" r="12.3" fill="none" stroke="#5a5a5a" stroke-width="1.0"/>
<circle cx="188.8" cy="603.8" r="12.3" fill="none" stroke="#5a5a5a" stroke-width="1.0"/>
<circle cx="102.3" cy="621.1" r="12.3" fill="none" stroke="#5a5a5a" stroke-width="1.0"/>
<circle cx="174.7" cy="624.3" r="12.3" fill="none" stroke="#5a5a5a" stroke-width="1.0"/>
<circle cx="114.1" cy="642.4" r="12.3" fill="none" stroke="#5a5a5a" stroke-width="1.0"/>
<circle cx="138" cy="643.2" r="12.3" fill="none" stroke="#5a5a5a" stroke-width="1.0"/>
<circle cx="162.1" cy="644.8" r="12.3" fill="none" stroke="#5a5a5a" stroke-width="1.0"/>
<circle cx="92" cy="599.1" r="12.3" fill="none" stroke="#555" stroke-width="1.1" stroke-dasharray="1.2,0.8"/>
<circle cx="99" cy="618" r="12.3" fill="none" stroke="#555" stroke-width="1.1" stroke-dasharray="1.2,0.8"/>
<circle cx="139.3" cy="601.8" r="12.3" fill="none" stroke="#0000ff" stroke-width="1.2"/>
<circle cx="164" cy="603.5" r="12.3" fill="none" stroke="#ffa500" stroke-width="1.2"/>
<circle cx="126.7" cy="622.7" r="12.3" fill="none" stroke="#ff0000" stroke-width="1.2"/>
<circle cx="151.5" cy="623" r="12.3" fill="none" stroke="#00ff00" stroke-width="1.2"/>
<path d="M140.3 606.5H147.5M143.9 602.9V610.1" stroke="#ff0000" stroke-width="1.2"/>
<line x1="78.5" y1="680.8" x2="78.5" y2="684.3" stroke="#000" stroke-width="0.8"/>
<text transform="translate(78.5,696.3) scale(1.1,1.08)" font-family="Liberation Sans" font-size="11.00" fill="#000" text-anchor="middle" stroke="#000" stroke-width="0.12">−4</text>
<line x1="66.9" y1="672.0" x2="70.4" y2="672.0" stroke="#000" stroke-width="0.8"/>
<text transform="translate(63.4,676.0) scale(1.1,1.08)" font-family="Liberation Sans" font-size="11.00" fill="#000" text-anchor="end" stroke="#000" stroke-width="0.12">−4</text>
<line x1="111.3" y1="680.8" x2="111.3" y2="684.3" stroke="#000" stroke-width="0.8"/>
<text transform="translate(111.3,696.3) scale(1.1,1.08)" font-family="Liberation Sans" font-size="11.00" fill="#000" text-anchor="middle" stroke="#000" stroke-width="0.12">−2</text>
<line x1="66.9" y1="639.2" x2="70.4" y2="639.2" stroke="#000" stroke-width="0.8"/>
<text transform="translate(63.4,643.2) scale(1.1,1.08)" font-family="Liberation Sans" font-size="11.00" fill="#000" text-anchor="end" stroke="#000" stroke-width="0.12">−2</text>
<line x1="144.0" y1="680.8" x2="144.0" y2="684.3" stroke="#000" stroke-width="0.8"/>
<text transform="translate(144.0,696.3) scale(1.1,1.08)" font-family="Liberation Sans" font-size="11.00" fill="#000" text-anchor="middle" stroke="#000" stroke-width="0.12">0</text>
<line x1="66.9" y1="606.5" x2="70.4" y2="606.5" stroke="#000" stroke-width="0.8"/>
<text transform="translate(63.4,610.5) scale(1.1,1.08)" font-family="Liberation Sans" font-size="11.00" fill="#000" text-anchor="end" stroke="#000" stroke-width="0.12">0</text>
<line x1="176.7" y1="680.8" x2="176.7" y2="684.3" stroke="#000" stroke-width="0.8"/>
<text transform="translate(176.7,696.3) scale(1.1,1.08)" font-family="Liberation Sans" font-size="11.00" fill="#000" text-anchor="middle" stroke="#000" stroke-width="0.12">2</text>
<line x1="66.9" y1="573.8" x2="70.4" y2="573.8" stroke="#000" stroke-width="0.8"/>
<text transform="translate(63.4,577.8) scale(1.1,1.08)" font-family="Liberation Sans" font-size="11.00" fill="#000" text-anchor="end" stroke="#000" stroke-width="0.12">2</text>
<line x1="209.5" y1="680.8" x2="209.5" y2="684.3" stroke="#000" stroke-width="0.8"/>
<text transform="translate(209.5,696.3) scale(1.1,1.08)" font-family="Liberation Sans" font-size="11.00" fill="#000" text-anchor="middle" stroke="#000" stroke-width="0.12">4</text>
<line x1="66.9" y1="541.0" x2="70.4" y2="541.0" stroke="#000" stroke-width="0.8"/>
<text transform="translate(63.4,545.0) scale(1.1,1.08)" font-family="Liberation Sans" font-size="11.00" fill="#000" text-anchor="end" stroke="#000" stroke-width="0.12">4</text>
<rect x="70.4" y="533.0" width="148" height="147.8" fill="none" stroke="#222" stroke-width="1"/>
<text transform="translate(144.0,525.7) scale(1.1,1.08)" font-family="Liberation Sans" font-size="12.50" fill="#000" text-anchor="middle" stroke="#000" stroke-width="0.12">Fiber Positions</text>
<text transform="translate(144.0,706.3) scale(1.1,1.08)" font-family="Liberation Sans" font-size="11.00" fill="#000" text-anchor="middle" stroke="#000" stroke-width="0.12">arcsecs</text>
<rect x="94.5" y="557.6" width="99" height="98.2" fill="none" stroke="#ff0000" stroke-width="1.2"/>
<text transform="translate(144.0,546.5) scale(1.1,1.08)" font-family="Liberation Sans" font-size="10.50" fill="#ff0000" text-anchor="middle" stroke="#ff0000" stroke-width="0.12">N</text>
<text transform="translate(79.9,610.5) scale(1.1,1.08)" font-family="Liberation Sans" font-size="10.50" fill="#ff0000" text-anchor="middle" stroke="#ff0000" stroke-width="0.12">E</text>
<defs><clipPath id="c2"><rect x="255.4" y="532.7" width="148" height="147.8"/></clipPath></defs>
<g clip-path="url(#c2)">
<rect x="255" y="532.7" width="32.3" height="2.3" fill="#2f6d8e"/>
<rect x="287" y="532.7" width="2.3" height="2.3" fill="#3f4888"/>
<rect x="289" y="532.7" width="4.3" height="2.3" fill="#45327d"/>
<rect x="293" y="532.7" width="2.3" height="2.3" fill="#471a6c"/>
<rect x="295" y="532.7" width="38.3" height="2.3" fill="#440154"/>
<rect x="333" y="532.7" width="4.3" height="2.3" fill="#471a6c"/>
<rect x="337" y="532.7" width="2.3" height="2.3" fill="#45327d"/>
<rect x="339" y="532.7" width="2.3" height="2.3" fill="#3f4888"/>
<rect x="341" y="532.7" width="2.3" height="2.3" fill="#375b8c"/>
<rect x="343" y="532.7" width="12.3" height="2.3" fill="#2f6d8e"/>
<rect x="355" y="532.7" width="16.3" height="2.3" fill="#277f8d"/>
<rect x="371" y="532.7" width="32.3" height="2.3" fill="#21918c"/>
<rect x="255" y="534.7" width="28.3" height="2.3" fill="#2f6d8e"/>
<rect x="283" y="534.7" width="2.3" height="2.3" fill="#375b8c"/>
<rect x="285" y="534.7" width="2.3" height="2.3" fill="#3f4888"/>
<rect x="287" y="534.7" width="6.3" height="2.3" fill="#45327d"/>
<rect x="293" y="534.7" width="2.3" height="2.3" fill="#471a6c"/>
<rect x="295" y="534.7" width="38.3" height="2.3" fill="#440154"/>
<rect x="333" y="534.7" width="4.3" height="2.3" fill="#471a6c"/>
<rect x="337" y="534.7" width="2.3" height="2.3" fill="#45327d"/>
<rect x="339" y="534.7" width="2.3" height="2.3" fill="#3f4888"/>
<rect x="341" y="534.7" width="2.3" height="2.3" fill="#375b8c"/>
<rect x="343" y="534.7" width="12.3" height="2.3" fill="#2f6d8e"/>
<rect x="355" y="534.7" width="16.3" height="2.3" fill="#277f8d"/>
<rect x="371" y="534.7" width="32.3" height="2.3" fill="#21918c"/>
<rect x="255" y="536.7" width="8.3" height="2.3" fill="#277f8d"/>
<rect x="263" y="536.7" width="4.3" height="2.3" fill="#2f6d8e"/>
<rect x="267" y="536.7" width="14.3" height="2.3" fill="#375b8c"/>
<rect x="281" y="536.7" width="2.3" height="2.3" fill="#3f4888"/>
<rect x="283" y="536.7" width="2.3" height="2.3" fill="#45327d"/>
<rect x="285" y="536.7" width="10.3" height="2.3" fill="#471a6c"/>
<rect x="295" y="536.7" width="38.3" height="2.3" fill="#440154"/>
<rect x="333" y="536.7" width="4.3" height="2.3" fill="#471a6c"/>
<rect x="337" y="536.7" width="2.3" height="2.3" fill="#45327d"/>
<rect x="339" y="536.7" width="2.3" height="2.3" fill="#3f4888"/>
<rect x="341" y="536.7" width="2.3" height="2.3" fill="#375b8c"/>
<rect x="343" y="536.7" width="12.3" height="2.3" fill="#2f6d8e"/>
<rect x="355" y="536.7" width="16.3" height="2.3" fill="#277f8d"/>
<rect x="371" y="536.7" width="32.3" height="2.3" fill="#21918c"/>
<rect x="255" y="538.7" width="8.3" height="2.3" fill="#277f8d"/>
<rect x="263" y="538.7" width="4.3" height="2.3" fill="#2f6d8e"/>
<rect x="267" y="538.7" width="12.3" height="2.3" fill="#375b8c"/>
<rect x="279" y="538.7" width="2.3" height="2.3" fill="#3f4888"/>
<rect x="281" y="538.7" width="2.3" height="2.3" fill="#45327d"/>
<rect x="283" y="538.7" width="2.3" height="2.3" fill="#471a6c"/>
<rect x="285" y="538.7" width="4.3" height="2.3" fill="#440154"/>
<rect x="289" y="538.7" width="6.3" height="2.3" fill="#471a6c"/>
<rect x="295" y="538.7" width="40.3" height="2.3" fill="#440154"/>
<rect x="335" y="538.7" width="2.3" height="2.3" fill="#471a6c"/>
<rect x="337" y="538.7" width="2.3" height="2.3" fill="#45327d"/>
<rect x="339" y="538.7" width="2.3" height="2.3" fill="#3f4888"/>
<rect x="341" y="538.7" width="2.3" height="2.3" fill="#375b8c"/>
<rect x="343" y="538.7" width="12.3" height="2.3" fill="#2f6d8e"/>
<rect x="355" y="538.7" width="16.3" height="2.3" fill="#277f8d"/>
<rect x="371" y="538.7" width="32.3" height="2.3" fill="#21918c"/>
<rect x="255" y="540.7" width="8.3" height="2.3" fill="#277f8d"/>
<rect x="263" y="540.7" width="4.3" height="2.3" fill="#2f6d8e"/>
<rect x="267" y="540.7" width="8.3" height="2.3" fill="#375b8c"/>
<rect x="275" y="540.7" width="2.3" height="2.3" fill="#3f4888"/>
<rect x="277" y="540.7" width="4.3" height="2.3" fill="#45327d"/>
<rect x="281" y="540.7" width="2.3" height="2.3" fill="#471a6c"/>
<rect x="283" y="540.7" width="8.3" height="2.3" fill="#440154"/>
<rect x="291" y="540.7" width="4.3" height="2.3" fill="#471a6c"/>
<rect x="295" y="540.7" width="40.3" height="2.3" fill="#440154"/>
<rect x="335" y="540.7" width="2.3" height="2.3" fill="#471a6c"/>
<rect x="337" y="540.7" width="2.3" height="2.3" fill="#45327d"/>
<rect x="339" y="540.7" width="2.3" height="2.3" fill="#3f4888"/>
<rect x="341" y="540.7" width="2.3" height="2.3" fill="#375b8c"/>
<rect x="343" y="540.7" width="12.3" height="2.3" fill="#2f6d8e"/>
<rect x="355" y="540.7" width="16.3" height="2.3" fill="#277f8d"/>
<rect x="371" y="540.7" width="32.3" height="2.3" fill="#21918c"/>
<rect x="255" y="542.7" width="8.3" height="2.3" fill="#277f8d"/>
<rect x="263" y="542.7" width="4.3" height="2.3" fill="#2f6d8e"/>
<rect x="267" y="542.7" width="6.3" height="2.3" fill="#375b8c"/>
<rect x="273" y="542.7" width="2.3" height="2.3" fill="#3f4888"/>
<rect x="275" y="542.7" width="2.3" height="2.3" fill="#45327d"/>
<rect x="277" y="542.7" width="4.3" height="2.3" fill="#471a6c"/>
<rect x="281" y="542.7" width="54.3" height="2.3" fill="#440154"/>
<rect x="335" y="542.7" width="2.3" height="2.3" fill="#471a6c"/>
<rect x="337" y="542.7" width="2.3" height="2.3" fill="#45327d"/>
<rect x="339" y="542.7" width="2.3" height="2.3" fill="#3f4888"/>
<rect x="341" y="542.7" width="2.3" height="2.3" fill="#375b8c"/>
<rect x="343" y="542.7" width="12.3" height="2.3" fill="#2f6d8e"/>
<rect x="355" y="542.7" width="16.3" height="2.3" fill="#277f8d"/>
<rect x="371" y="542.7" width="32.3" height="2.3" fill="#21918c"/>
<rect x="255" y="544.7" width="8.3" height="2.3" fill="#277f8d"/>
<rect x="263" y="544.7" width="4.3" height="2.3" fill="#2f6d8e"/>
<rect x="267" y="544.7" width="2.3" height="2.3" fill="#375b8c"/>
<rect x="269" y="544.7" width="4.3" height="2.3" fill="#3f4888"/>
<rect x="273" y="544.7" width="2.3" height="2.3" fill="#45327d"/>
<rect x="275" y="544.7" width="2.3" height="2.3" fill="#471a6c"/>
<rect x="277" y="544.7" width="48.3" height="2.3" fill="#440154"/>
<rect x="325" y="544.7" width="12.3" height="2.3" fill="#471a6c"/>
<rect x="337" y="544.7" width="2.3" height="2.3" fill="#45327d"/>
<rect x="339" y="544.7" width="2.3" height="2.3" fill="#3f4888"/>
<rect x="341" y="544.7" width="2.3" height="2.3" fill="#375b8c"/>
<rect x="343" y="544.7" width="12.3" height="2.3" fill="#2f6d8e"/>
<rect x="355" y="544.7" width="16.3" height="2.3" fill="#277f8d"/>
<rect x="371" y="544.7" width="32.3" height="2.3" fill="#21918c"/>
<rect x="255" y="546.7" width="8.3" height="2.3" fill="#277f8d"/>
<rect x="263" y="546.7" width="2.3" height="2.3" fill="#2f6d8e"/>
<rect x="265" y="546.7" width="2.3" height="2.3" fill="#375b8c"/>
<rect x="267" y="546.7" width="2.3" height="2.3" fill="#3f4888"/>
<rect x="269" y="546.7" width="2.3" height="2.3" fill="#45327d"/>
<rect x="271" y="546.7" width="4.3" height="2.3" fill="#471a6c"/>
<rect x="275" y="546.7" width="26.3" height="2.3" fill="#440154"/>
<rect x="301" y="546.7" width="14.3" height="2.3" fill="#471a6c"/>
<rect x="315" y="546.7" width="14.3" height="2.3" fill="#45327d"/>
<rect x="329" y="546.7" width="10.3" height="2.3" fill="#3f4888"/>
<rect x="339" y="546.7" width="4.3" height="2.3" fill="#375b8c"/>
<rect x="343" y="546.7" width="12.3" height="2.3" fill="#2f6d8e"/>
<rect x="355" y="546.7" width="16.3" height="2.3" fill="#277f8d"/>
<rect x="371" y="546.7" width="32.3" height="2.3" fill="#21918c"/>
<rect x="255" y="548.7" width="8.3" height="2.3" fill="#277f8d"/>
<rect x="263" y="548.7" width="2.3" height="2.3" fill="#375b8c"/>
<rect x="265" y="548.7" width="2.3" height="2.3" fill="#3f4888"/>
<rect x="267" y="548.7" width="2.3" height="2.3" fill="#45327d"/>
<rect x="269" y="548.7" width="2.3" height="2.3" fill="#471a6c"/>
<rect x="271" y="548.7" width="26.3" height="2.3" fill="#440154"/>
<rect x="297" y="548.7" width="4.3" height="2.3" fill="#471a6c"/>
<rect x="301" y="548.7" width="4.3" height="2.3" fill="#45327d"/>
<rect x="305" y="548.7" width="10.3" height="2.3" fill="#3f4888"/>
<rect x="315" y="548.7" width="2.3" height="2.3" fill="#45327d"/>
<rect x="317" y="548.7" width="2.3" height="2.3" fill="#3f4888"/>
<rect x="319" y="548.7" width="22.3" height="2.3" fill="#375b8c"/>
<rect x="341" y="548.7" width="14.3" height="2.3" fill="#2f6d8e"/>
<rect x="355" y="548.7" width="16.3" height="2.3" fill="#277f8d"/>
<rect x="371" y="548.7" width="32.3" height="2.3" fill="#21918c"/>
<rect x="255" y="550.7" width="4.3" height="2.3" fill="#277f8d"/>
<rect x="259" y="550.7" width="2.3" height="2.3" fill="#2f6d8e"/>
<rect x="261" y="550.7" width="2.3" height="2.3" fill="#375b8c"/>
<rect x="263" y="550.7" width="2.3" height="2.3" fill="#3f4888"/>
<rect x="265" y="550.7" width="2.3" height="2.3" fill="#45327d"/>
<rect x="267" y="550.7" width="2.3" height="2.3" fill="#471a6c"/>
<rect x="269" y="550.7" width="28.3" height="2.3" fill="#440154"/>
<rect x="297" y="550.7" width="2.3" height="2.3" fill="#471a6c"/>
<rect x="299" y="550.7" width="2.3" height="2.3" fill="#45327d"/>
<rect x="301" y="550.7" width="2.3" height="2.3" fill="#3f4888"/>
<rect x="303" y="550.7" width="10.3" height="2.3" fill="#375b8c"/>
<rect x="313" y="550.7" width="2.3" height="2.3" fill="#3f4888"/>
<rect x="315" y="550.7" width="2.3" height="2.3" fill="#45327d"/>
<rect x="317" y="550.7" width="2.3" height="2.3" fill="#3f4888"/>
<rect x="319" y="550.7" width="22.3" height="2.3" fill="#375b8c"/>
<rect x="341" y="550.7" width="14.3" height="2.3" fill="#2f6d8e"/>
<rect x="355" y="550.7" width="16.3" height="2.3" fill="#277f8d"/>
<rect x="371" y="550.7" width="32.3" height="2.3" fill="#21918c"/>
<rect x="255" y="552.7" width="4.3" height="2.3" fill="#2f6d8e"/>
<rect x="259" y="552.7" width="2.3" height="2.3" fill="#375b8c"/>
<rect x="261" y="552.7" width="2.3" height="2.3" fill="#45327d"/>
<rect x="263" y="552.7" width="2.3" height="2.3" fill="#471a6c"/>
<rect x="265" y="552.7" width="32.3" height="2.3" fill="#440154"/>
<rect x="297" y="552.7" width="4.3" height="2.3" fill="#471a6c"/>
<rect x="301" y="552.7" width="2.3" height="2.3" fill="#45327d"/>
<rect x="303" y="552.7" width="2.3" height="2.3" fill="#3f4888"/>
<rect x="305" y="552.7" width="4.3" height="2.3" fill="#375b8c"/>
<rect x="309" y="552.7" width="2.3" height="2.3" fill="#3f4888"/>
<rect x="311" y="552.7" width="4.3" height="2.3" fill="#45327d"/>
<rect x="315" y="552.7" width="2.3" height="2.3" fill="#471a6c"/>
<rect x="317" y="552.7" width="2.3" height="2.3" fill="#45327d"/>
<rect x="319" y="552.7" width="2.3" height="2.3" fill="#3f4888"/>
<rect x="321" y="552.7" width="20.3" height="2.3" fill="#375b8c"/>
<rect x="341" y="552.7" width="14.3" height="2.3" fill="#2f6d8e"/>
<rect x="355" y="552.7" width="16.3" height="2.3" fill="#277f8d"/>
<rect x="371" y="552.7" width="32.3" height="2.3" fill="#21918c"/>
<rect x="255" y="554.7" width="2.3" height="2.3" fill="#375b8c"/>
<rect x="257" y="554.7" width="2.3" height="2.3" fill="#3f4888"/>
<rect x="259" y="554.7" width="2.3" height="2.3" fill="#45327d"/>
<rect x="261" y="554.7" width="2.3" height="2.3" fill="#471a6c"/>
<rect x="263" y="554.7" width="36.3" height="2.3" fill="#440154"/>
<rect x="299" y="554.7" width="2.3" height="2.3" fill="#471a6c"/>
<rect x="301" y="554.7" width="4.3" height="2.3" fill="#45327d"/>
<rect x="305" y="554.7" width="4.3" height="2.3" fill="#3f4888"/>
<rect x="309" y="554.7" width="2.3" height="2.3" fill="#45327d"/>
<rect x="311" y="554.7" width="4.3" height="2.3" fill="#471a6c"/>
<rect x="315" y="554.7" width="2.3" height="2.3" fill="#440154"/>
<rect x="317" y="554.7" width="2.3" height="2.3" fill="#471a6c"/>
<rect x="319" y="554.7" width="2.3" height="2.3" fill="#45327d"/>
<rect x="321" y="554.7" width="20.3" height="2.3" fill="#375b8c"/>
<rect x="341" y="554.7" width="14.3" height="2.3" fill="#2f6d8e"/>
<rect x="355" y="554.7" width="16.3" height="2.3" fill="#277f8d"/>
<rect x="371" y="554.7" width="32.3" height="2.3" fill="#21918c"/>
<rect x="255" y="556.7" width="2.3" height="2.3" fill="#375b8c"/>
<rect x="257" y="556.7" width="2.3" height="2.3" fill="#3f4888"/>
<rect x="259" y="556.7" width="4.3" height="2.3" fill="#45327d"/>
<rect x="263" y="556.7" width="2.3" height="2.3" fill="#471a6c"/>
<rect x="265" y="556.7" width="34.3" height="2.3" fill="#440154"/>
<rect x="299" y="556.7" width="2.3" height="2.3" fill="#471a6c"/>
<rect x="301" y="556.7" width="8.3" height="2.3" fill="#45327d"/>
<rect x="309" y="556.7" width="2.3" height="2.3" fill="#471a6c"/>
<rect x="311" y="556.7" width="8.3" height="2.3" fill="#440154"/>
<rect x="319" y="556.7" width="2.3" height="2.3" fill="#45327d"/>
<rect x="321" y="556.7" width="2.3" height="2.3" fill="#3f4888"/>
<rect x="323" y="556.7" width="18.3" height="2.3" fill="#375b8c"/>
<rect x="341" y="556.7" width="14.3" height="2.3" fill="#2f6d8e"/>
<rect x="355" y="556.7" width="16.3" height="2.3" fill="#277f8d"/>
<rect x="371" y="556.7" width="32.3" height="2.3" fill="#21918c"/>
<rect x="255" y="558.7" width="4.3" height="2.3" fill="#375b8c"/>
<rect x="259" y="558.7" width="2.3" height="2.3" fill="#3f4888"/>
<rect x="261" y="558.7" width="2.3" height="2.3" fill="#45327d"/>
<rect x="263" y="558.7" width="2.3" height="2.3" fill="#471a6c"/>
<rect x="265" y="558.7" width="30.3" height="2.3" fill="#440154"/>
<rect x="295" y="558.7" width="2.3" height="2.3" fill="#471a6c"/>
<rect x="297" y="558.7" width="8.3" height="2.3" fill="#45327d"/>
<rect x="305" y="558.7" width="4.3" height="2.3" fill="#471a6c"/>
<rect x="309" y="558.7" width="10.3" height="2.3" fill="#440154"/>
<rect x="319" y="558.7" width="2.3" height="2.3" fill="#471a6c"/>
<rect x="321" y="558.7" width="2.3" height="2.3" fill="#45327d"/>
<rect x="323" y="558.7" width="2.3" height="2.3" fill="#3f4888"/>
<rect x="325" y="558.7" width="16.3" height="2.3" fill="#375b8c"/>
<rect x="341" y="558.7" width="14.3" height="2.3" fill="#2f6d8e"/>
<rect x="355" y="558.7" width="16.3" height="2.3" fill="#277f8d"/>
<rect x="371" y="558.7" width="32.3" height="2.3" fill="#21918c"/>
<rect x="255" y="560.7" width="4.3" height="2.3" fill="#375b8c"/>
<rect x="259" y="560.7" width="2.3" height="2.3" fill="#3f4888"/>
<rect x="261" y="560.7" width="2.3" height="2.3" fill="#45327d"/>
<rect x="263" y="560.7" width="4.3" height="2.3" fill="#471a6c"/>
<rect x="267" y="560.7" width="26.3" height="2.3" fill="#440154"/>
<rect x="293" y="560.7" width="2.3" height="2.3" fill="#471a6c"/>
<rect x="295" y="560.7" width="8.3" height="2.3" fill="#45327d"/>
<rect x="303" y="560.7" width="2.3" height="2.3" fill="#471a6c"/>
<rect x="305" y="560.7" width="16.3" height="2.3" fill="#440154"/>
<rect x="321" y="560.7" width="2.3" height="2.3" fill="#471a6c"/>
<rect x="323" y="560.7" width="2.3" height="2.3" fill="#45327d"/>
<rect x="325" y="560.7" width="16.3" height="2.3" fill="#375b8c"/>
<rect x="341" y="560.7" width="14.3" height="2.3" fill="#2f6d8e"/>
<rect x="355" y="560.7" width="16.3" height="2.3" fill="#277f8d"/>
<rect x="371" y="560.7" width="32.3" height="2.3" fill="#21918c"/>
<rect x="255" y="562.7" width="6.3" height="2.3" fill="#3f4888"/>
<rect x="261" y="562.7" width="4.3" height="2.3" fill="#45327d"/>
<rect x="265" y="562.7" width="2.3" height="2.3" fill="#471a6c"/>
<rect x="267" y="562.7" width="22.3" height="2.3" fill="#440154"/>
<rect x="289" y="562.7" width="2.3" height="2.3" fill="#471a6c"/>
<rect x="291" y="562.7" width="8.3" height="2.3" fill="#45327d"/>
<rect x="299" y="562.7" width="4.3" height="2.3" fill="#471a6c"/>
<rect x="303" y="562.7" width="20.3" height="2.3" fill="#440154"/>
<rect x="323" y="562.7" width="2.3" height="2.3" fill="#45327d"/>
<rect x="325" y="562.7" width="2.3" height="2.3" fill="#3f4888"/>
<rect x="327" y="562.7" width="14.3" height="2.3" fill="#375b8c"/>
<rect x="341" y="562.7" width="14.3" height="2.3" fill="#2f6d8e"/>
<rect x="355" y="562.7" width="16.3" height="2.3" fill="#277f8d"/>
<rect x="371" y="562.7" width="32.3" height="2.3" fill="#21918c"/>
<rect x="255" y="564.7" width="6.3" height="2.3" fill="#3f4888"/>
<rect x="261" y="564.7" width="4.3" height="2.3" fill="#45327d"/>
<rect x="265" y="564.7" width="4.3" height="2.3" fill="#471a6c"/>
<rect x="269" y="564.7" width="18.3" height="2.3" fill="#440154"/>
<rect x="287" y="564.7" width="2.3" height="2.3" fill="#471a6c"/>
<rect x="289" y="564.7" width="8.3" height="2.3" fill="#45327d"/>
<rect x="297" y="564.7" width="2.3" height="2.3" fill="#471a6c"/>
<rect x="299" y="564.7" width="24.3" height="2.3" fill="#440154"/>
<rect x="323" y="564.7" width="2.3" height="2.3" fill="#471a6c"/>
<rect x="325" y="564.7" width="2.3" height="2.3" fill="#45327d"/>
<rect x="327" y="564.7" width="2.3" height="2.3" fill="#3f4888"/>
<rect x="329" y="564.7" width="12.3" height="2.3" fill="#375b8c"/>
<rect x="341" y="564.7" width="14.3" height="2.3" fill="#2f6d8e"/>
<rect x="355" y="564.7" width="48.3" height="2.3" fill="#277f8d"/>
<rect x="255" y="566.7" width="10.3" height="2.3" fill="#45327d"/>
<rect x="265" y="566.7" width="6.3" height="2.3" fill="#471a6c"/>
<rect x="271" y="566.7" width="14.3" height="2.3" fill="#440154"/>
<rect x="285" y="566.7" width="2.3" height="2.3" fill="#471a6c"/>
<rect x="287" y="566.7" width="2.3" height="2.3" fill="#45327d"/>
<rect x="289" y="566.7" width="2.3" height="2.3" fill="#3f4888"/>
<rect x="291" y="566.7" width="2.3" height="2.3" fill="#45327d"/>
<rect x="293" y="566.7" width="4.3" height="2.3" fill="#471a6c"/>
<rect x="297" y="566.7" width="28.3" height="2.3" fill="#440154"/>
<rect x="325" y="566.7" width="2.3" height="2.3" fill="#45327d"/>
<rect x="327" y="566.7" width="14.3" height="2.3" fill="#375b8c"/>
<rect x="341" y="566.7" width="14.3" height="2.3" fill="#2f6d8e"/>
<rect x="355" y="566.7" width="48.3" height="2.3" fill="#277f8d"/>
<rect x="255" y="568.7" width="12.3" height="2.3" fill="#45327d"/>
<rect x="267" y="568.7" width="4.3" height="2.3" fill="#471a6c"/>
<rect x="271" y="568.7" width="10.3" height="2.3" fill="#440154"/>
<rect x="281" y="568.7" width="4.3" height="2.3" fill="#471a6c"/>
<rect x="285" y="568.7" width="2.3" height="2.3" fill="#45327d"/>
<rect x="287" y="568.7" width="2.3" height="2.3" fill="#3f4888"/>
<rect x="289" y="568.7" width="2.3" height="2.3" fill="#375b8c"/>
<rect x="291" y="568.7" width="2.3" height="2.3" fill="#3f4888"/>
<rect x="293" y="568.7" width="2.3" height="2.3" fill="#45327d"/>
<rect x="295" y="568.7" width="2.3" height="2.3" fill="#471a6c"/>
<rect x="297" y="568.7" width="26.3" height="2.3" fill="#440154"/>
<rect x="323" y="568.7" width="2.3" height="2.3" fill="#471a6c"/>
<rect x="325" y="568.7" width="2.3" height="2.3" fill="#45327d"/>
<rect x="327" y="568.7" width="14.3" height="2.3" fill="#375b8c"/>
<rect x="341" y="568.7" width="14.3" height="2.3" fill="#2f6d8e"/>
<rect x="355" y="568.7" width="48.3" height="2.3" fill="#277f8d"/>
<rect x="255" y="570.7" width="14.3" height="2.3" fill="#45327d"/>
<rect x="269" y="570.7" width="4.3" height="2.3" fill="#471a6c"/>
<rect x="273" y="570.7" width="6.3" height="2.3" fill="#440154"/>
<rect x="279" y="570.7" width="4.3" height="2.3" fill="#471a6c"/>
<rect x="283" y="570.7" width="2.3" height="2.3" fill="#45327d"/>
<rect x="285" y="570.7" width="2.3" height="2.3" fill="#3f4888"/>
<rect x="287" y="570.7" width="6.3" height="2.3" fill="#375b8c"/>
<rect x="293" y="570.7" width="2.3" height="2.3" fill="#3f4888"/>
<rect x="295" y="570.7" width="2.3" height="2.3" fill="#45327d"/>
<rect x="297" y="570.7" width="2.3" height="2.3" fill="#471a6c"/>
<rect x="299" y="570.7" width="22.3" height="2.3" fill="#440154"/>
<rect x="321" y="570.7" width="2.3" height="2.3" fill="#471a6c"/>
<rect x="323" y="570.7" width="2.3" height="2.3" fill="#45327d"/>
<rect x="325" y="570.7" width="2.3" height="2.3" fill="#3f4888"/>
<rect x="327" y="570.7" width="14.3" height="2.3" fill="#375b8c"/>
<rect x="341" y="570.7" width="14.3" height="2.3" fill="#2f6d8e"/>
<rect x="355" y="570.7" width="48.3" height="2.3" fill="#277f8d"/>
<rect x="255" y="572.7" width="14.3" height="2.3" fill="#45327d"/>
<rect x="269" y="572.7" width="6.3" height="2.3" fill="#471a6c"/>
<rect x="275" y="572.7" width="2.3" height="2.3" fill="#440154"/>
<rect x="277" y="572.7" width="4.3" height="2.3" fill="#471a6c"/>
<rect x="281" y="572.7" width="2.3" height="2.3" fill="#45327d"/>
<rect x="283" y="572.7" width="4.3" height="2.3" fill="#3f4888"/>
<rect x="287" y="572.7" width="8.3" height="2.3" fill="#375b8c"/>
<rect x="295" y="572.7" width="2.3" height="2.3" fill="#3f4888"/>
<rect x="297" y="572.7" width="2.3" height="2.3" fill="#471a6c"/>
<rect x="299" y="572.7" width="18.3" height="2.3" fill="#440154"/>
<rect x="317" y="572.7" width="2.3" height="2.3" fill="#471a6c"/>
<rect x="319" y="572.7" width="2.3" height="2.3" fill="#45327d"/>
<rect x="321" y="572.7" width="2.3" height="2.3" fill="#3f4888"/>
<rect x="323" y="572.7" width="2.3" height="2.3" fill="#375b8c"/>
<rect x="325" y="572.7" width="4.3" height="2.3" fill="#2f6d8e"/>
<rect x="329" y="572.7" width="12.3" height="2.3" fill="#375b8c"/>
<rect x="341" y="572.7" width="14.3" height="2.3" fill="#2f6d8e"/>
<rect x="355" y="572.7" width="48.3" height="2.3" fill="#277f8d"/>
<rect x="255" y="574.7" width="16.3" height="2.3" fill="#45327d"/>
<rect x="271" y="574.7" width="8.3" height="2.3" fill="#471a6c"/>
<rect x="279" y="574.7" width="4.3" height="2.3" fill="#45327d"/>
<rect x="283" y="574.7" width="4.3" height="2.3" fill="#3f4888"/>
<rect x="287" y="574.7" width="10.3" height="2.3" fill="#375b8c"/>
<rect x="297" y="574.7" width="2.3" height="2.3" fill="#45327d"/>
<rect x="299" y="574.7" width="2.3" height="2.3" fill="#471a6c"/>
<rect x="301" y="574.7" width="14.3" height="2.3" fill="#440154"/>
<rect x="315" y="574.7" width="2.3" height="2.3" fill="#471a6c"/>
<rect x="317" y="574.7" width="2.3" height="2.3" fill="#45327d"/>
<rect x="319" y="574.7" width="2.3" height="2.3" fill="#3f4888"/>
<rect x="321" y="574.7" width="2.3" height="2.3" fill="#375b8c"/>
<rect x="323" y="574.7" width="2.3" height="2.3" fill="#2f6d8e"/>
<rect x="325" y="574.7" width="4.3" height="2.3" fill="#277f8d"/>
<rect x="329" y="574.7" width="2.3" height="2.3" fill="#2f6d8e"/>
<rect x="331" y="574.7" width="10.3" height="2.3" fill="#375b8c"/>
<rect x="341" y="574.7" width="14.3" height="2.3" fill="#2f6d8e"/>
<rect x="355" y="574.7" width="20.3" height="2.3" fill="#277f8d"/>
<rect x="375" y="574.7" width="4.3" height="2.3" fill="#21918c"/>
<rect x="379" y="574.7" width="24.3" height="2.3" fill="#277f8d"/>
<rect x="255" y="576.7" width="18.3" height="2.3" fill="#45327d"/>
<rect x="273" y="576.7" width="2.3" height="2.3" fill="#471a6c"/>
<rect x="275" y="576.7" width="8.3" height="2.3" fill="#45327d"/>
<rect x="283" y="576.7" width="4.3" height="2.3" fill="#3f4888"/>
<rect x="287" y="576.7" width="10.3" height="2.3" fill="#375b8c"/>
<rect x="297" y="576.7" width="2.3" height="2.3" fill="#3f4888"/>
<rect x="299" y="576.7" width="2.3" height="2.3" fill="#45327d"/>
<rect x="301" y="576.7" width="2.3" height="2.3" fill="#471a6c"/>
<rect x="303" y="576.7" width="8.3" height="2.3" fill="#440154"/>
<rect x="311" y="576.7" width="2.3" height="2.3" fill="#471a6c"/>
<rect x="313" y="576.7" width="4.3" height="2.3" fill="#3f4888"/>
<rect x="317" y="576.7" width="2.3" height="2.3" fill="#375b8c"/>
<rect x="319" y="576.7" width="2.3" height="2.3" fill="#2f6d8e"/>
<rect x="321" y="576.7" width="2.3" height="2.3" fill="#277f8d"/>
<rect x="323" y="576.7" width="2.3" height="2.3" fill="#21918c"/>
<rect x="325" y="576.7" width="2.3" height="2.3" fill="#22a186"/>
<rect x="327" y="576.7" width="2.3" height="2.3" fill="#21918c"/>
<rect x="329" y="576.7" width="2.3" height="2.3" fill="#2f6d8e"/>
<rect x="331" y="576.7" width="10.3" height="2.3" fill="#375b8c"/>
<rect x="341" y="576.7" width="14.3" height="2.3" fill="#2f6d8e"/>
<rect x="355" y="576.7" width="18.3" height="2.3" fill="#277f8d"/>
<rect x="373" y="576.7" width="8.3" height="2.3" fill="#21918c"/>
<rect x="381" y="576.7" width="22.3" height="2.3" fill="#277f8d"/>
<rect x="255" y="578.7" width="28.3" height="2.3" fill="#45327d"/>
<rect x="283" y="578.7" width="4.3" height="2.3" fill="#3f4888"/>
<rect x="287" y="578.7" width="12.3" height="2.3" fill="#375b8c"/>
<rect x="299" y="578.7" width="2.3" height="2.3" fill="#3f4888"/>
<rect x="301" y="578.7" width="2.3" height="2.3" fill="#45327d"/>
<rect x="303" y="578.7" width="6.3" height="2.3" fill="#440154"/>
<rect x="309" y="578.7" width="2.3" height="2.3" fill="#45327d"/>
<rect x="311" y="578.7" width="2.3" height="2.3" fill="#375b8c"/>
<rect x="313" y="578.7" width="6.3" height="2.3" fill="#2f6d8e"/>
<rect x="319" y="578.7" width="2.3" height="2.3" fill="#277f8d"/>
<rect x="321" y="578.7" width="2.3" height="2.3" fill="#21918c"/>
<rect x="323" y="578.7" width="2.3" height="2.3" fill="#22a186"/>
<rect x="325" y="578.7" width="2.3" height="2.3" fill="#31b27b"/>
<rect x="327" y="578.7" width="2.3" height="2.3" fill="#22a186"/>
<rect x="329" y="578.7" width="2.3" height="2.3" fill="#21918c"/>
<rect x="331" y="578.7" width="2.3" height="2.3" fill="#277f8d"/>
<rect x="333" y="578.7" width="4.3" height="2.3" fill="#2f6d8e"/>
<rect x="337" y="578.7" width="4.3" height="2.3" fill="#375b8c"/>
<rect x="341" y="578.7" width="14.3" height="2.3" fill="#2f6d8e"/>
<rect x="355" y="578.7" width="16.3" height="2.3" fill="#277f8d"/>
<rect x="371" y="578.7" width="4.3" height="2.3" fill="#21918c"/>
<rect x="375" y="578.7" width="4.3" height="2.3" fill="#22a186"/>
<rect x="379" y="578.7" width="2.3" height="2.3" fill="#21918c"/>
<rect x="381" y="578.7" width="22.3" height="2.3" fill="#277f8d"/>
<rect x="255" y="580.7" width="28.3" height="2.3" fill="#45327d"/>
<rect x="283" y="580.7" width="4.3" height="2.3" fill="#3f4888"/>
<rect x="287" y="580.7" width="14.3" height="2.3" fill="#375b8c"/>
<rect x="301" y="580.7" width="2.3" height="2.3" fill="#45327d"/>
<rect x="303" y="580.7" width="4.3" height="2.3" fill="#471a6c"/>
<rect x="307" y="580.7" width="2.3" height="2.3" fill="#3f4888"/>
<rect x="309" y="580.7" width="2.3" height="2.3" fill="#2f6d8e"/>
<rect x="311" y="580.7" width="2.3" height="2.3" fill="#277f8d"/>
<rect x="313" y="580.7" width="8.3" height="2.3" fill="#21918c"/>
<rect x="321" y="580.7" width="2.3" height="2.3" fill="#22a186"/>
<rect x="323" y="580.7" width="2.3" height="2.3" fill="#31b27b"/>
<rect x="325" y="580.7" width="2.3" height="2.3" fill="#4cc26c"/>
<rect x="327" y="580.7" width="2.3" height="2.3" fill="#31b27b"/>
<rect x="329" y="580.7" width="2.3" height="2.3" fill="#22a186"/>
<rect x="331" y="580.7" width="4.3" height="2.3" fill="#21918c"/>
<rect x="335" y="580.7" width="2.3" height="2.3" fill="#277f8d"/>
<rect x="337" y="580.7" width="28.3" height="2.3" fill="#2f6d8e"/>
<rect x="365" y="580.7" width="4.3" height="2.3" fill="#277f8d"/>
<rect x="369" y="580.7" width="2.3" height="2.3" fill="#21918c"/>
<rect x="371" y="580.7" width="4.3" height="2.3" fill="#22a186"/>
<rect x="375" y="580.7" width="4.3" height="2.3" fill="#31b27b"/>
<rect x="379" y="580.7" width="2.3" height="2.3" fill="#22a186"/>
<rect x="381" y="580.7" width="2.3" height="2.3" fill="#21918c"/>
<rect x="383" y="580.7" width="2.3" height="2.3" fill="#277f8d"/>
<rect x="385" y="580.7" width="18.3" height="2.3" fill="#2f6d8e"/>
<rect x="255" y="582.7" width="28.3" height="2.3" fill="#45327d"/>
<rect x="283" y="582.7" width="4.3" height="2.3" fill="#3f4888"/>
<rect x="287" y="582.7" width="14.3" height="2.3" fill="#375b8c"/>
<rect x="301" y="582.7" width="4.3" height="2.3" fill="#3f4888"/>
<rect x="305" y="582.7" width="2.3" height="2.3" fill="#375b8c"/>
<rect x="307" y="582.7" width="2.3" height="2.3" fill="#2f6d8e"/>
<rect x="309" y="582.7" width="2.3" height="2.3" fill="#21918c"/>
<rect x="311" y="582.7" width="8.3" height="2.3" fill="#22a186"/>
<rect x="319" y="582.7" width="2.3" height="2.3" fill="#31b27b"/>
<rect x="321" y="582.7" width="2.3" height="2.3" fill="#4cc26c"/>
<rect x="323" y="582.7" width="4.3" height="2.3" fill="#72ce55"/>
<rect x="327" y="582.7" width="4.3" height="2.3" fill="#4cc26c"/>
<rect x="331" y="582.7" width="2.3" height="2.3" fill="#31b27b"/>
<rect x="333" y="582.7" width="2.3" height="2.3" fill="#22a186"/>
<rect x="335" y="582.7" width="2.3" height="2.3" fill="#21918c"/>
<rect x="337" y="582.7" width="2.3" height="2.3" fill="#277f8d"/>
<rect x="339" y="582.7" width="24.3" height="2.3" fill="#2f6d8e"/>
<rect x="363" y="582.7" width="4.3" height="2.3" fill="#277f8d"/>
<rect x="367" y="582.7" width="2.3" height="2.3" fill="#21918c"/>
<rect x="369" y="582.7" width="4.3" height="2.3" fill="#22a186"/>
<rect x="373" y="582.7" width="2.3" height="2.3" fill="#31b27b"/>
<rect x="375" y="582.7" width="2.3" height="2.3" fill="#4cc26c"/>
<rect x="377" y="582.7" width="2.3" height="2.3" fill="#31b27b"/>
<rect x="379" y="582.7" width="4.3" height="2.3" fill="#22a186"/>
<rect x="383" y="582.7" width="2.3" height="2.3" fill="#21918c"/>
<rect x="385" y="582.7" width="2.3" height="2.3" fill="#277f8d"/>
<rect x="387" y="582.7" width="16.3" height="2.3" fill="#2f6d8e"/>
<rect x="255" y="584.7" width="28.3" height="2.3" fill="#45327d"/>
<rect x="283" y="584.7" width="4.3" height="2.3" fill="#3f4888"/>
<rect x="287" y="584.7" width="14.3" height="2.3" fill="#375b8c"/>
<rect x="301" y="584.7" width="2.3" height="2.3" fill="#2f6d8e"/>
<rect x="303" y="584.7" width="4.3" height="2.3" fill="#277f8d"/>
<rect x="307" y="584.7" width="2.3" height="2.3" fill="#21918c"/>
<rect x="309" y="584.7" width="8.3" height="2.3" fill="#22a186"/>
<rect x="317" y="584.7" width="2.3" height="2.3" fill="#31b27b"/>
<rect x="319" y="584.7" width="2.3" height="2.3" fill="#4cc26c"/>
<rect x="321" y="584.7" width="2.3" height="2.3" fill="#a0d938"/>
<rect x="323" y="584.7" width="2.3" height="2.3" fill="#cfe126"/>
<rect x="325" y="584.7" width="2.3" height="2.3" fill="#a0d938"/>
<rect x="327" y="584.7" width="4.3" height="2.3" fill="#72ce55"/>
<rect x="331" y="584.7" width="2.3" height="2.3" fill="#4cc26c"/>
<rect x="333" y="584.7" width="2.3" height="2.3" fill="#31b27b"/>
<rect x="335" y="584.7" width="2.3" height="2.3" fill="#22a186"/>
<rect x="337" y="584.7" width="2.3" height="2.3" fill="#21918c"/>
<rect x="339" y="584.7" width="2.3" height="2.3" fill="#277f8d"/>
<rect x="341" y="584.7" width="20.3" height="2.3" fill="#2f6d8e"/>
<rect x="361" y="584.7" width="4.3" height="2.3" fill="#277f8d"/>
<rect x="365" y="584.7" width="2.3" height="2.3" fill="#21918c"/>
<rect x="367" y="584.7" width="4.3" height="2.3" fill="#22a186"/>
<rect x="371" y="584.7" width="2.3" height="2.3" fill="#31b27b"/>
<rect x="373" y="584.7" width="6.3" height="2.3" fill="#4cc26c"/>
<rect x="379" y="584.7" width="2.3" height="2.3" fill="#31b27b"/>
<rect x="381" y="584.7" width="2.3" height="2.3" fill="#22a186"/>
<rect x="383" y="584.7" width="2.3" height="2.3" fill="#21918c"/>
<rect x="385" y="584.7" width="4.3" height="2.3" fill="#277f8d"/>
<rect x="389" y="584.7" width="14.3" height="2.3" fill="#2f6d8e"/>
<rect x="255" y="586.7" width="28.3" height="2.3" fill="#45327d"/>
<rect x="283" y="586.7" width="4.3" height="2.3" fill="#3f4888"/>
<rect x="287" y="586.7" width="10.3" height="2.3" fill="#375b8c"/>
<rect x="297" y="586.7" width="2.3" height="2.3" fill="#2f6d8e"/>
<rect x="299" y="586.7" width="2.3" height="2.3" fill="#277f8d"/>
<rect x="301" y="586.7" width="2.3" height="2.3" fill="#21918c"/>
<rect x="303" y="586.7" width="10.3" height="2.3" fill="#22a186"/>
<rect x="313" y="586.7" width="2.3" height="2.3" fill="#31b27b"/>
<rect x="315" y="586.7" width="2.3" height="2.3" fill="#4cc26c"/>
<rect x="317" y="586.7" width="2.3" height="2.3" fill="#72ce55"/>
<rect x="319" y="586.7" width="2.3" height="2.3" fill="#a0d938"/>
<rect x="321" y="586.7" width="2.3" height="2.3" fill="#cfe126"/>
<rect x="323" y="586.7" width="2.3" height="2.3" fill="#fde725"/>
<rect x="325" y="586.7" width="2.3" height="2.3" fill="#cfe126"/>
<rect x="327" y="586.7" width="2.3" height="2.3" fill="#a0d938"/>
<rect x="329" y="586.7" width="2.3" height="2.3" fill="#72ce55"/>
<rect x="331" y="586.7" width="2.3" height="2.3" fill="#4cc26c"/>
<rect x="333" y="586.7" width="2.3" height="2.3" fill="#31b27b"/>
<rect x="335" y="586.7" width="2.3" height="2.3" fill="#22a186"/>
<rect x="337" y="586.7" width="4.3" height="2.3" fill="#21918c"/>
<rect x="341" y="586.7" width="2.3" height="2.3" fill="#277f8d"/>
<rect x="343" y="586.7" width="16.3" height="2.3" fill="#2f6d8e"/>
<rect x="359" y="586.7" width="4.3" height="2.3" fill="#277f8d"/>
<rect x="363" y="586.7" width="2.3" height="2.3" fill="#21918c"/>
<rect x="365" y="586.7" width="4.3" height="2.3" fill="#22a186"/>
<rect x="369" y="586.7" width="2.3" height="2.3" fill="#31b27b"/>
<rect x="371" y="586.7" width="4.3" height="2.3" fill="#4cc26c"/>
<rect x="375" y="586.7" width="2.3" height="2.3" fill="#72ce55"/>
<rect x="377" y="586.7" width="4.3" height="2.3" fill="#4cc26c"/>
<rect x="381" y="586.7" width="2.3" height="2.3" fill="#31b27b"/>
<rect x="383" y="586.7" width="2.3" height="2.3" fill="#22a186"/>
<rect x="385" y="586.7" width="2.3" height="2.3" fill="#21918c"/>
<rect x="387" y="586.7" width="2.3" height="2.3" fill="#277f8d"/>
<rect x="389" y="586.7" width="14.3" height="2.3" fill="#2f6d8e"/>
<rect x="255" y="588.7" width="28.3" height="2.3" fill="#45327d"/>
<rect x="283" y="588.7" width="4.3" height="2.3" fill="#3f4888"/>
<rect x="287" y="588.7" width="8.3" height="2.3" fill="#375b8c"/>
<rect x="295" y="588.7" width="2.3" height="2.3" fill="#2f6d8e"/>
<rect x="297" y="588.7" width="4.3" height="2.3" fill="#21918c"/>
<rect x="301" y="588.7" width="10.3" height="2.3" fill="#22a186"/>
<rect x="311" y="588.7" width="2.3" height="2.3" fill="#31b27b"/>
<rect x="313" y="588.7" width="2.3" height="2.3" fill="#4cc26c"/>
<rect x="315" y="588.7" width="2.3" height="2.3" fill="#72ce55"/>
<rect x="317" y="588.7" width="2.3" height="2.3" fill="#a0d938"/>
<rect x="319" y="588.7" width="2.3" height="2.3" fill="#cfe126"/>
<rect x="321" y="588.7" width="6.3" height="2.3" fill="#fde725"/>
<rect x="327" y="588.7" width="2.3" height="2.3" fill="#cfe126"/>
<rect x="329" y="588.7" width="2.3" height="2.3" fill="#a0d938"/>
<rect x="331" y="588.7" width="2.3" height="2.3" fill="#72ce55"/>
<rect x="333" y="588.7" width="2.3" height="2.3" fill="#4cc26c"/>
<rect x="335" y="588.7" width="2.3" height="2.3" fill="#31b27b"/>
<rect x="337" y="588.7" width="2.3" height="2.3" fill="#22a186"/>
<rect x="339" y="588.7" width="2.3" height="2.3" fill="#21918c"/>
<rect x="341" y="588.7" width="4.3" height="2.3" fill="#277f8d"/>
<rect x="345" y="588.7" width="6.3" height="2.3" fill="#2f6d8e"/>
<rect x="351" y="588.7" width="6.3" height="2.3" fill="#375b8c"/>
<rect x="357" y="588.7" width="4.3" height="2.3" fill="#277f8d"/>
<rect x="361" y="588.7" width="2.3" height="2.3" fill="#21918c"/>
<rect x="363" y="588.7" width="4.3" height="2.3" fill="#22a186"/>
<rect x="367" y="588.7" width="2.3" height="2.3" fill="#31b27b"/>
<rect x="369" y="588.7" width="2.3" height="2.3" fill="#4cc26c"/>
<rect x="371" y="588.7" width="4.3" height="2.3" fill="#72ce55"/>
<rect x="375" y="588.7" width="2.3" height="2.3" fill="#a0d938"/>
<rect x="377" y="588.7" width="2.3" height="2.3" fill="#72ce55"/>
<rect x="379" y="588.7" width="2.3" height="2.3" fill="#4cc26c"/>
<rect x="381" y="588.7" width="4.3" height="2.3" fill="#31b27b"/>
<rect x="385" y="588.7" width="2.3" height="2.3" fill="#22a186"/>
<rect x="387" y="588.7" width="2.3" height="2.3" fill="#21918c"/>
<rect x="389" y="588.7" width="2.3" height="2.3" fill="#277f8d"/>
<rect x="391" y="588.7" width="12.3" height="2.3" fill="#2f6d8e"/>
<rect x="255" y="590.7" width="28.3" height="2.3" fill="#45327d"/>
<rect x="283" y="590.7" width="4.3" height="2.3" fill="#3f4888"/>
<rect x="287" y="590.7" width="4.3" height="2.3" fill="#375b8c"/>
<rect x="291" y="590.7" width="2.3" height="2.3" fill="#2f6d8e"/>
<rect x="293" y="590.7" width="2.3" height="2.3" fill="#277f8d"/>
<rect x="295" y="590.7" width="2.3" height="2.3" fill="#21918c"/>
<rect x="297" y="590.7" width="6.3" height="2.3" fill="#22a186"/>
<rect x="303" y="590.7" width="4.3" height="2.3" fill="#31b27b"/>
<rect x="307" y="590.7" width="4.3" height="2.3" fill="#4cc26c"/>
<rect x="311" y="590.7" width="2.3" height="2.3" fill="#72ce55"/>
<rect x="313" y="590.7" width="2.3" height="2.3" fill="#a0d938"/>
<rect x="315" y="590.7" width="2.3" height="2.3" fill="#cfe126"/>
<rect x="317" y="590.7" width="12.3" height="2.3" fill="#fde725"/>
<rect x="329" y="590.7" width="2.3" height="2.3" fill="#cfe126"/>
<rect x="331" y="590.7" width="2.3" height="2.3" fill="#a0d938"/>
<rect x="333" y="590.7" width="2.3" height="2.3" fill="#72ce55"/>
<rect x="335" y="590.7" width="2.3" height="2.3" fill="#4cc26c"/>
<rect x="337" y="590.7" width="2.3" height="2.3" fill="#31b27b"/>
<rect x="339" y="590.7" width="2.3" height="2.3" fill="#22a186"/>
<rect x="341" y="590.7" width="2.3" height="2.3" fill="#21918c"/>
<rect x="343" y="590.7" width="2.3" height="2.3" fill="#277f8d"/>
<rect x="345" y="590.7" width="2.3" height="2.3" fill="#2f6d8e"/>
<rect x="347" y="590.7" width="8.3" height="2.3" fill="#375b8c"/>
<rect x="355" y="590.7" width="2.3" height="2.3" fill="#2f6d8e"/>
<rect x="357" y="590.7" width="2.3" height="2.3" fill="#277f8d"/>
<rect x="359" y="590.7" width="2.3" height="2.3" fill="#21918c"/>
<rect x="361" y="590.7" width="4.3" height="2.3" fill="#22a186"/>
<rect x="365" y="590.7" width="2.3" height="2.3" fill="#31b27b"/>
<rect x="367" y="590.7" width="2.3" height="2.3" fill="#4cc26c"/>
<rect x="369" y="590.7" width="4.3" height="2.3" fill="#72ce55"/>
<rect x="373" y="590.7" width="2.3" height="2.3" fill="#a0d938"/>
<rect x="375" y="590.7" width="2.3" height="2.3" fill="#cfe126"/>
<rect x="377" y="590.7" width="2.3" height="2.3" fill="#a0d938"/>
<rect x="379" y="590.7" width="2.3" height="2.3" fill="#72ce55"/>
<rect x="381" y="590.7" width="2.3" height="2.3" fill="#4cc26c"/>
<rect x="383" y="590.7" width="2.3" height="2.3" fill="#31b27b"/>
<rect x="385" y="590.7" width="2.3" height="2.3" fill="#22a186"/>
<rect x="387" y="590.7" width="4.3" height="2.3" fill="#21918c"/>
<rect x="391" y="590.7" width="2.3" height="2.3" fill="#277f8d"/>
<rect x="393" y="590.7" width="10.3" height="2.3" fill="#2f6d8e"/>
<rect x="255" y="592.7" width="28.3" height="2.3" fill="#45327d"/>
<rect x="283" y="592.7" width="4.3" height="2.3" fill="#3f4888"/>
<rect x="287" y="592.7" width="2.3" height="2.3" fill="#375b8c"/>
<rect x="289" y="592.7" width="2.3" height="2.3" fill="#2f6d8e"/>
<rect x="291" y="592.7" width="2.3" height="2.3" fill="#277f8d"/>
<rect x="293" y="592.7" width="2.3" height="2.3" fill="#21918c"/>
<rect x="295" y="592.7" width="6.3" height="2.3" fill="#22a186"/>
<rect x="301" y="592.7" width="2.3" height="2.3" fill="#31b27b"/>
<rect x="303" y="592.7" width="4.3" height="2.3" fill="#4cc26c"/>
<rect x="307" y="592.7" width="2.3" height="2.3" fill="#72ce55"/>
<rect x="309" y="592.7" width="4.3" height="2.3" fill="#a0d938"/>
<rect x="313" y="592.7" width="2.3" height="2.3" fill="#cfe126"/>
<rect x="315" y="592.7" width="14.3" height="2.3" fill="#fde725"/>
<rect x="329" y="592.7" width="2.3" height="2.3" fill="#cfe126"/>
<rect x="331" y="592.7" width="2.3" height="2.3" fill="#a0d938"/>
<rect x="333" y="592.7" width="2.3" height="2.3" fill="#72ce55"/>
<rect x="335" y="592.7" width="4.3" height="2.3" fill="#4cc26c"/>
<rect x="339" y="592.7" width="2.3" height="2.3" fill="#31b27b"/>
<rect x="341" y="592.7" width="2.3" height="2.3" fill="#22a186"/>
<rect x="343" y="592.7" width="2.3" height="2.3" fill="#21918c"/>
<rect x="345" y="592.7" width="2.3" height="2.3" fill="#2f6d8e"/>
<rect x="347" y="592.7" width="6.3" height="2.3" fill="#375b8c"/>
<rect x="353" y="592.7" width="2.3" height="2.3" fill="#2f6d8e"/>
<rect x="355" y="592.7" width="4.3" height="2.3" fill="#277f8d"/>
<rect x="359" y="592.7" width="2.3" height="2.3" fill="#22a186"/>
<rect x="361" y="592.7" width="4.3" height="2.3" fill="#31b27b"/>
<rect x="365" y="592.7" width="2.3" height="2.3" fill="#4cc26c"/>
<rect x="367" y="592.7" width="2.3" height="2.3" fill="#72ce55"/>
<rect x="369" y="592.7" width="4.3" height="2.3" fill="#a0d938"/>
<rect x="373" y="592.7" width="6.3" height="2.3" fill="#cfe126"/>
<rect x="379" y="592.7" width="2.3" height="2.3" fill="#a0d938"/>
<rect x="381" y="592.7" width="2.3" height="2.3" fill="#72ce55"/>
<rect x="383" y="592.7" width="2.3" height="2.3" fill="#4cc26c"/>
<rect x="385" y="592.7" width="2.3" height="2.3" fill="#31b27b"/>
<rect x="387" y="592.7" width="2.3" height="2.3" fill="#22a186"/>
<rect x="389" y="592.7" width="2.3" height="2.3" fill="#21918c"/>
<rect x="391" y="592.7" width="2.3" height="2.3" fill="#277f8d"/>
<rect x="393" y="592.7" width="10.3" height="2.3" fill="#2f6d8e"/>
<rect x="255" y="594.7" width="28.3" height="2.3" fill="#45327d"/>
<rect x="283" y="594.7" width="2.3" height="2.3" fill="#3f4888"/>
<rect x="285" y="594.7" width="2.3" height="2.3" fill="#375b8c"/>
<rect x="287" y="594.7" width="2.3" height="2.3" fill="#2f6d8e"/>
<rect x="289" y="594.7" width="4.3" height="2.3" fill="#21918c"/>
<rect x="293" y="594.7" width="4.3" height="2.3" fill="#22a186"/>
<rect x="297" y="594.7" width="4.3" height="2.3" fill="#31b27b"/>
<rect x="301" y="594.7" width="2.3" height="2.3" fill="#4cc26c"/>
<rect x="303" y="594.7" width="4.3" height="2.3" fill="#72ce55"/>
<rect x="307" y="594.7" width="2.3" height="2.3" fill="#a0d938"/>
<rect x="309" y="594.7" width="2.3" height="2.3" fill="#cfe126"/>
<rect x="311" y="594.7" width="20.3" height="2.3" fill="#fde725"/>
<rect x="331" y="594.7" width="2.3" height="2.3" fill="#cfe126"/>
<rect x="333" y="594.7" width="2.3" height="2.3" fill="#a0d938"/>
<rect x="335" y="594.7" width="2.3" height="2.3" fill="#72ce55"/>
<rect x="337" y="594.7" width="2.3" height="2.3" fill="#4cc26c"/>
<rect x="339" y="594.7" width="2.3" height="2.3" fill="#31b27b"/>
<rect x="341" y="594.7" width="2.3" height="2.3" fill="#22a186"/>
<rect x="343" y="594.7" width="2.3" height="2.3" fill="#21918c"/>
<rect x="345" y="594.7" width="2.3" height="2.3" fill="#277f8d"/>
<rect x="347" y="594.7" width="2.3" height="2.3" fill="#2f6d8e"/>
<rect x="349" y="594.7" width="4.3" height="2.3" fill="#375b8c"/>
<rect x="353" y="594.7" width="2.3" height="2.3" fill="#2f6d8e"/>
<rect x="355" y="594.7" width="2.3" height="2.3" fill="#277f8d"/>
<rect x="357" y="594.7" width="2.3" height="2.3" fill="#21918c"/>
<rect x="359" y="594.7" width="2.3" height="2.3" fill="#22a186"/>
<rect x="361" y="594.7" width="2.3" height="2.3" fill="#31b27b"/>
<rect x="363" y="594.7" width="2.3" height="2.3" fill="#4cc26c"/>
<rect x="365" y="594.7" width="2.3" height="2.3" fill="#72ce55"/>
<rect x="367" y="594.7" width="4.3" height="2.3" fill="#a0d938"/>
<rect x="371" y="594.7" width="8.3" height="2.3" fill="#cfe126"/>
<rect x="379" y="594.7" width="4.3" height="2.3" fill="#a0d938"/>
<rect x="383" y="594.7" width="2.3" height="2.3" fill="#72ce55"/>
<rect x="385" y="594.7" width="2.3" height="2.3" fill="#4cc26c"/>
<rect x="387" y="594.7" width="2.3" height="2.3" fill="#31b27b"/>
<rect x="389" y="594.7" width="2.3" height="2.3" fill="#22a186"/>
<rect x="391" y="594.7" width="2.3" height="2.3" fill="#21918c"/>
<rect x="393" y="594.7" width="2.3" height="2.3" fill="#277f8d"/>
<rect x="395" y="594.7" width="2.3" height="2.3" fill="#2f6d8e"/>
<rect x="397" y="594.7" width="6.3" height="2.3" fill="#375b8c"/>
<rect x="255" y="596.7" width="28.3" height="2.3" fill="#45327d"/>
<rect x="283" y="596.7" width="2.3" height="2.3" fill="#3f4888"/>
<rect x="285" y="596.7" width="2.3" height="2.3" fill="#2f6d8e"/>
<rect x="287" y="596.7" width="4.3" height="2.3" fill="#21918c"/>
<rect x="291" y="596.7" width="4.3" height="2.3" fill="#22a186"/>
<rect x="295" y="596.7" width="2.3" height="2.3" fill="#31b27b"/>
<rect x="297" y="596.7" width="4.3" height="2.3" fill="#4cc26c"/>
<rect x="301" y="596.7" width="2.3" height="2.3" fill="#72ce55"/>
<rect x="303" y="596.7" width="4.3" height="2.3" fill="#a0d938"/>
<rect x="307" y="596.7" width="2.3" height="2.3" fill="#cfe126"/>
<rect x="309" y="596.7" width="24.3" height="2.3" fill="#fde725"/>
<rect x="333" y="596.7" width="2.3" height="2.3" fill="#cfe126"/>
<rect x="335" y="596.7" width="2.3" height="2.3" fill="#a0d938"/>
<rect x="337" y="596.7" width="2.3" height="2.3" fill="#72ce55"/>
<rect x="339" y="596.7" width="2.3" height="2.3" fill="#4cc26c"/>
<rect x="341" y="596.7" width="2.3" height="2.3" fill="#31b27b"/>
<rect x="343" y="596.7" width="2.3" height="2.3" fill="#22a186"/>
<rect x="345" y="596.7" width="2.3" height="2.3" fill="#277f8d"/>
<rect x="347" y="596.7" width="2.3" height="2.3" fill="#2f6d8e"/>
<rect x="349" y="596.7" width="2.3" height="2.3" fill="#375b8c"/>
<rect x="351" y="596.7" width="2.3" height="2.3" fill="#3f4888"/>
<rect x="353" y="596.7" width="2.3" height="2.3" fill="#375b8c"/>
<rect x="355" y="596.7" width="2.3" height="2.3" fill="#2f6d8e"/>
<rect x="357" y="596.7" width="2.3" height="2.3" fill="#277f8d"/>
<rect x="359" y="596.7" width="2.3" height="2.3" fill="#21918c"/>
<rect x="361" y="596.7" width="2.3" height="2.3" fill="#31b27b"/>
<rect x="363" y="596.7" width="2.3" height="2.3" fill="#4cc26c"/>
<rect x="365" y="596.7" width="4.3" height="2.3" fill="#72ce55"/>
<rect x="369" y="596.7" width="2.3" height="2.3" fill="#a0d938"/>
<rect x="371" y="596.7" width="10.3" height="2.3" fill="#cfe126"/>
<rect x="381" y="596.7" width="2.3" height="2.3" fill="#a0d938"/>
<rect x="383" y="596.7" width="2.3" height="2.3" fill="#72ce55"/>
<rect x="385" y="596.7" width="4.3" height="2.3" fill="#4cc26c"/>
<rect x="389" y="596.7" width="2.3" height="2.3" fill="#31b27b"/>
<rect x="391" y="596.7" width="2.3" height="2.3" fill="#22a186"/>
<rect x="393" y="596.7" width="2.3" height="2.3" fill="#21918c"/>
<rect x="395" y="596.7" width="2.3" height="2.3" fill="#277f8d"/>
<rect x="397" y="596.7" width="2.3" height="2.3" fill="#2f6d8e"/>
<rect x="399" y="596.7" width="4.3" height="2.3" fill="#375b8c"/>
<rect x="255" y="598.7" width="26.3" height="2.3" fill="#45327d"/>
<rect x="281" y="598.7" width="2.3" height="2.3" fill="#3f4888"/>
<rect x="283" y="598.7" width="2.3" height="2.3" fill="#375b8c"/>
<rect x="285" y="598.7" width="2.3" height="2.3" fill="#277f8d"/>
<rect x="287" y="598.7" width="2.3" height="2.3" fill="#21918c"/>
<rect x="289" y="598.7" width="6.3" height="2.3" fill="#22a186"/>
<rect x="295" y="598.7" width="2.3" height="2.3" fill="#31b27b"/>
<rect x="297" y="598.7" width="4.3" height="2.3" fill="#72ce55"/>
<rect x="301" y="598.7" width="2.3" height="2.3" fill="#a0d938"/>
<rect x="303" y="598.7" width="2.3" height="2.3" fill="#cfe126"/>
<rect x="305" y="598.7" width="28.3" height="2.3" fill="#fde725"/>
<rect x="333" y="598.7" width="2.3" height="2.3" fill="#cfe126"/>
<rect x="335" y="598.7" width="4.3" height="2.3" fill="#a0d938"/>
<rect x="339" y="598.7" width="2.3" height="2.3" fill="#72ce55"/>
<rect x="341" y="598.7" width="2.3" height="2.3" fill="#31b27b"/>
<rect x="343" y="598.7" width="2.3" height="2.3" fill="#22a186"/>
<rect x="345" y="598.7" width="2.3" height="2.3" fill="#21918c"/>
<rect x="347" y="598.7" width="2.3" height="2.3" fill="#277f8d"/>
<rect x="349" y="598.7" width="2.3" height="2.3" fill="#2f6d8e"/>
<rect x="351" y="598.7" width="4.3" height="2.3" fill="#3f4888"/>
<rect x="355" y="598.7" width="2.3" height="2.3" fill="#375b8c"/>
<rect x="357" y="598.7" width="2.3" height="2.3" fill="#2f6d8e"/>
<rect x="359" y="598.7" width="2.3" height="2.3" fill="#277f8d"/>
<rect x="361" y="598.7" width="2.3" height="2.3" fill="#21918c"/>
<rect x="363" y="598.7" width="2.3" height="2.3" fill="#31b27b"/>
<rect x="365" y="598.7" width="2.3" height="2.3" fill="#4cc26c"/>
<rect x="367" y="598.7" width="2.3" height="2.3" fill="#72ce55"/>
<rect x="369" y="598.7" width="4.3" height="2.3" fill="#a0d938"/>
<rect x="373" y="598.7" width="6.3" height="2.3" fill="#cfe126"/>
<rect x="379" y="598.7" width="2.3" height="2.3" fill="#a0d938"/>
<rect x="381" y="598.7" width="2.3" height="2.3" fill="#72ce55"/>
<rect x="383" y="598.7" width="4.3" height="2.3" fill="#4cc26c"/>
<rect x="387" y="598.7" width="2.3" height="2.3" fill="#31b27b"/>
<rect x="389" y="598.7" width="2.3" height="2.3" fill="#22a186"/>
<rect x="391" y="598.7" width="4.3" height="2.3" fill="#21918c"/>
<rect x="395" y="598.7" width="2.3" height="2.3" fill="#277f8d"/>
<rect x="397" y="598.7" width="2.3" height="2.3" fill="#2f6d8e"/>
<rect x="399" y="598.7" width="4.3" height="2.3" fill="#375b8c"/>
<rect x="255" y="600.7" width="28.3" height="2.3" fill="#45327d"/>
<rect x="283" y="600.7" width="2.3" height="2.3" fill="#3f4888"/>
<rect x="285" y="600.7" width="2.3" height="2.3" fill="#375b8c"/>
<rect x="287" y="600.7" width="2.3" height="2.3" fill="#277f8d"/>
<rect x="289" y="600.7" width="2.3" height="2.3" fill="#21918c"/>
<rect x="291" y="600.7" width="2.3" height="2.3" fill="#22a186"/>
<rect x="293" y="600.7" width="2.3" height="2.3" fill="#31b27b"/>
<rect x="295" y="600.7" width="2.3" height="2.3" fill="#4cc26c"/>
<rect x="297" y="600.7" width="4.3" height="2.3" fill="#a0d938"/>
<rect x="301" y="600.7" width="2.3" height="2.3" fill="#cfe126"/>
<rect x="303" y="600.7" width="32.3" height="2.3" fill="#fde725"/>
<rect x="335" y="600.7" width="2.3" height="2.3" fill="#cfe126"/>
<rect x="337" y="600.7" width="2.3" height="2.3" fill="#a0d938"/>
<rect x="339" y="600.7" width="2.3" height="2.3" fill="#72ce55"/>
<rect x="341" y="600.7" width="2.3" height="2.3" fill="#4cc26c"/>
<rect x="343" y="600.7" width="2.3" height="2.3" fill="#31b27b"/>
<rect x="345" y="600.7" width="2.3" height="2.3" fill="#22a186"/>
<rect x="347" y="600.7" width="2.3" height="2.3" fill="#277f8d"/>
<rect x="349" y="600.7" width="2.3" height="2.3" fill="#2f6d8e"/>
<rect x="351" y="600.7" width="2.3" height="2.3" fill="#375b8c"/>
<rect x="353" y="600.7" width="4.3" height="2.3" fill="#3f4888"/>
<rect x="357" y="600.7" width="2.3" height="2.3" fill="#375b8c"/>
<rect x="359" y="600.7" width="2.3" height="2.3" fill="#2f6d8e"/>
<rect x="361" y="600.7" width="2.3" height="2.3" fill="#277f8d"/>
<rect x="363" y="600.7" width="2.3" height="2.3" fill="#22a186"/>
<rect x="365" y="600.7" width="2.3" height="2.3" fill="#31b27b"/>
<rect x="367" y="600.7" width="2.3" height="2.3" fill="#4cc26c"/>
<rect x="369" y="600.7" width="2.3" height="2.3" fill="#72ce55"/>
<rect x="371" y="600.7" width="2.3" height="2.3" fill="#a0d938"/>
<rect x="373" y="600.7" width="4.3" height="2.3" fill="#cfe126"/>
<rect x="377" y="600.7" width="2.3" height="2.3" fill="#a0d938"/>
<rect x="379" y="600.7" width="2.3" height="2.3" fill="#72ce55"/>
<rect x="381" y="600.7" width="4.3" height="2.3" fill="#4cc26c"/>
<rect x="385" y="600.7" width="2.3" height="2.3" fill="#31b27b"/>
<rect x="387" y="600.7" width="2.3" height="2.3" fill="#22a186"/>
<rect x="389" y="600.7" width="2.3" height="2.3" fill="#21918c"/>
<rect x="391" y="600.7" width="4.3" height="2.3" fill="#277f8d"/>
<rect x="395" y="600.7" width="2.3" height="2.3" fill="#2f6d8e"/>
<rect x="397" y="600.7" width="6.3" height="2.3" fill="#375b8c"/>
<rect x="255" y="602.7" width="30.3" height="2.3" fill="#45327d"/>
<rect x="285" y="602.7" width="2.3" height="2.3" fill="#3f4888"/>
<rect x="287" y="602.7" width="2.3" height="2.3" fill="#375b8c"/>
<rect x="289" y="602.7" width="2.3" height="2.3" fill="#277f8d"/>
<rect x="291" y="602.7" width="2.3" height="2.3" fill="#21918c"/>
<rect x="293" y="602.7" width="2.3" height="2.3" fill="#22a186"/>
<rect x="295" y="602.7" width="2.3" height="2.3" fill="#31b27b"/>
<rect x="297" y="602.7" width="2.3" height="2.3" fill="#72ce55"/>
<rect x="299" y="602.7" width="2.3" height="2.3" fill="#a0d938"/>
<rect x="301" y="602.7" width="2.3" height="2.3" fill="#cfe126"/>
<rect x="303" y="602.7" width="34.3" height="2.3" fill="#fde725"/>
<rect x="337" y="602.7" width="2.3" height="2.3" fill="#cfe126"/>
<rect x="339" y="602.7" width="2.3" height="2.3" fill="#a0d938"/>
<rect x="341" y="602.7" width="2.3" height="2.3" fill="#72ce55"/>
<rect x="343" y="602.7" width="2.3" height="2.3" fill="#4cc26c"/>
<rect x="345" y="602.7" width="2.3" height="2.3" fill="#22a186"/>
<rect x="347" y="602.7" width="2.3" height="2.3" fill="#21918c"/>
<rect x="349" y="602.7" width="2.3" height="2.3" fill="#277f8d"/>
<rect x="351" y="602.7" width="2.3" height="2.3" fill="#2f6d8e"/>
<rect x="353" y="602.7" width="2.3" height="2.3" fill="#3f4888"/>
<rect x="355" y="602.7" width="2.3" height="2.3" fill="#45327d"/>
<rect x="357" y="602.7" width="2.3" height="2.3" fill="#3f4888"/>
<rect x="359" y="602.7" width="2.3" height="2.3" fill="#375b8c"/>
<rect x="361" y="602.7" width="2.3" height="2.3" fill="#2f6d8e"/>
<rect x="363" y="602.7" width="2.3" height="2.3" fill="#21918c"/>
<rect x="365" y="602.7" width="2.3" height="2.3" fill="#22a186"/>
<rect x="367" y="602.7" width="2.3" height="2.3" fill="#31b27b"/>
<rect x="369" y="602.7" width="2.3" height="2.3" fill="#4cc26c"/>
<rect x="371" y="602.7" width="2.3" height="2.3" fill="#72ce55"/>
<rect x="373" y="602.7" width="4.3" height="2.3" fill="#a0d938"/>
<rect x="377" y="602.7" width="2.3" height="2.3" fill="#72ce55"/>
<rect x="379" y="602.7" width="2.3" height="2.3" fill="#4cc26c"/>
<rect x="381" y="602.7" width="4.3" height="2.3" fill="#31b27b"/>
<rect x="385" y="602.7" width="2.3" height="2.3" fill="#22a186"/>
<rect x="387" y="602.7" width="2.3" height="2.3" fill="#21918c"/>
<rect x="389" y="602.7" width="4.3" height="2.3" fill="#277f8d"/>
<rect x="393" y="602.7" width="2.3" height="2.3" fill="#2f6d8e"/>
<rect x="395" y="602.7" width="8.3" height="2.3" fill="#375b8c"/>
<rect x="255" y="604.7" width="24.3" height="2.3" fill="#45327d"/>
<rect x="279" y="604.7" width="6.3" height="2.3" fill="#471a6c"/>
<rect x="285" y="604.7" width="2.3" height="2.3" fill="#45327d"/>
<rect x="287" y="604.7" width="2.3" height="2.3" fill="#3f4888"/>
<rect x="289" y="604.7" width="2.3" height="2.3" fill="#375b8c"/>
<rect x="291" y="604.7" width="2.3" height="2.3" fill="#277f8d"/>
<rect x="293" y="604.7" width="2.3" height="2.3" fill="#21918c"/>
<rect x="295" y="604.7" width="2.3" height="2.3" fill="#22a186"/>
<rect x="297" y="604.7" width="2.3" height="2.3" fill="#4cc26c"/>
<rect x="299" y="604.7" width="2.3" height="2.3" fill="#72ce55"/>
<rect x="301" y="604.7" width="2.3" height="2.3" fill="#a0d938"/>
<rect x="303" y="604.7" width="2.3" height="2.3" fill="#cfe126"/>
<rect x="305" y="604.7" width="34.3" height="2.3" fill="#fde725"/>
<rect x="339" y="604.7" width="2.3" height="2.3" fill="#cfe126"/>
<rect x="341" y="604.7" width="2.3" height="2.3" fill="#a0d938"/>
<rect x="343" y="604.7" width="2.3" height="2.3" fill="#72ce55"/>
<rect x="345" y="604.7" width="2.3" height="2.3" fill="#31b27b"/>
<rect x="347" y="604.7" width="2.3" height="2.3" fill="#22a186"/>
<rect x="349" y="604.7" width="2.3" height="2.3" fill="#21918c"/>
<rect x="351" y="604.7" width="2.3" height="2.3" fill="#2f6d8e"/>
<rect x="353" y="604.7" width="2.3" height="2.3" fill="#375b8c"/>
<rect x="355" y="604.7" width="2.3" height="2.3" fill="#3f4888"/>
<rect x="357" y="604.7" width="4.3" height="2.3" fill="#45327d"/>
<rect x="361" y="604.7" width="2.3" height="2.3" fill="#3f4888"/>
<rect x="363" y="604.7" width="2.3" height="2.3" fill="#2f6d8e"/>
<rect x="365" y="604.7" width="2.3" height="2.3" fill="#21918c"/>
<rect x="367" y="604.7" width="2.3" height="2.3" fill="#22a186"/>
<rect x="369" y="604.7" width="2.3" height="2.3" fill="#31b27b"/>
<rect x="371" y="604.7" width="2.3" height="2.3" fill="#4cc26c"/>
<rect x="373" y="604.7" width="4.3" height="2.3" fill="#72ce55"/>
<rect x="377" y="604.7" width="2.3" height="2.3" fill="#4cc26c"/>
<rect x="379" y="604.7" width="2.3" height="2.3" fill="#31b27b"/>
<rect x="381" y="604.7" width="4.3" height="2.3" fill="#22a186"/>
<rect x="385" y="604.7" width="2.3" height="2.3" fill="#21918c"/>
<rect x="387" y="604.7" width="2.3" height="2.3" fill="#277f8d"/>
<rect x="389" y="604.7" width="4.3" height="2.3" fill="#2f6d8e"/>
<rect x="393" y="604.7" width="10.3" height="2.3" fill="#375b8c"/>
<rect x="255" y="606.7" width="20.3" height="2.3" fill="#45327d"/>
<rect x="275" y="606.7" width="12.3" height="2.3" fill="#471a6c"/>
<rect x="287" y="606.7" width="2.3" height="2.3" fill="#45327d"/>
<rect x="289" y="606.7" width="2.3" height="2.3" fill="#3f4888"/>
<rect x="291" y="606.7" width="2.3" height="2.3" fill="#375b8c"/>
<rect x="293" y="606.7" width="2.3" height="2.3" fill="#277f8d"/>
<rect x="295" y="606.7" width="2.3" height="2.3" fill="#22a186"/>
<rect x="297" y="606.7" width="2.3" height="2.3" fill="#31b27b"/>
<rect x="299" y="606.7" width="2.3" height="2.3" fill="#4cc26c"/>
<rect x="301" y="606.7" width="2.3" height="2.3" fill="#a0d938"/>
<rect x="303" y="606.7" width="2.3" height="2.3" fill="#cfe126"/>
<rect x="305" y="606.7" width="34.3" height="2.3" fill="#fde725"/>
<rect x="339" y="606.7" width="2.3" height="2.3" fill="#cfe126"/>
<rect x="341" y="606.7" width="2.3" height="2.3" fill="#a0d938"/>
<rect x="343" y="606.7" width="2.3" height="2.3" fill="#72ce55"/>
<rect x="345" y="606.7" width="2.3" height="2.3" fill="#4cc26c"/>
<rect x="347" y="606.7" width="2.3" height="2.3" fill="#31b27b"/>
<rect x="349" y="606.7" width="2.3" height="2.3" fill="#21918c"/>
<rect x="351" y="606.7" width="2.3" height="2.3" fill="#277f8d"/>
<rect x="353" y="606.7" width="2.3" height="2.3" fill="#2f6d8e"/>
<rect x="355" y="606.7" width="2.3" height="2.3" fill="#3f4888"/>
<rect x="357" y="606.7" width="6.3" height="2.3" fill="#45327d"/>
<rect x="363" y="606.7" width="2.3" height="2.3" fill="#375b8c"/>
<rect x="365" y="606.7" width="2.3" height="2.3" fill="#277f8d"/>
<rect x="367" y="606.7" width="4.3" height="2.3" fill="#22a186"/>
<rect x="371" y="606.7" width="2.3" height="2.3" fill="#31b27b"/>
<rect x="373" y="606.7" width="4.3" height="2.3" fill="#4cc26c"/>
<rect x="377" y="606.7" width="2.3" height="2.3" fill="#31b27b"/>
<rect x="379" y="606.7" width="4.3" height="2.3" fill="#22a186"/>
<rect x="383" y="606.7" width="2.3" height="2.3" fill="#21918c"/>
<rect x="385" y="606.7" width="2.3" height="2.3" fill="#277f8d"/>
<rect x="387" y="606.7" width="2.3" height="2.3" fill="#2f6d8e"/>
<rect x="389" y="606.7" width="14.3" height="2.3" fill="#375b8c"/>
<rect x="255" y="608.7" width="16.3" height="2.3" fill="#45327d"/>
<rect x="271" y="608.7" width="16.3" height="2.3" fill="#471a6c"/>
<rect x="287" y="608.7" width="2.3" height="2.3" fill="#440154"/>
<rect x="289" y="608.7" width="2.3" height="2.3" fill="#471a6c"/>
<rect x="291" y="608.7" width="2.3" height="2.3" fill="#3f4888"/>
<rect x="293" y="608.7" width="2.3" height="2.3" fill="#2f6d8e"/>
<rect x="295" y="608.7" width="2.3" height="2.3" fill="#21918c"/>
<rect x="297" y="608.7" width="2.3" height="2.3" fill="#22a186"/>
<rect x="299" y="608.7" width="2.3" height="2.3" fill="#31b27b"/>
<rect x="301" y="608.7" width="2.3" height="2.3" fill="#72ce55"/>
<rect x="303" y="608.7" width="2.3" height="2.3" fill="#a0d938"/>
<rect x="305" y="608.7" width="2.3" height="2.3" fill="#cfe126"/>
<rect x="307" y="608.7" width="32.3" height="2.3" fill="#fde725"/>
<rect x="339" y="608.7" width="2.3" height="2.3" fill="#cfe126"/>
<rect x="341" y="608.7" width="4.3" height="2.3" fill="#a0d938"/>
<rect x="345" y="608.7" width="2.3" height="2.3" fill="#72ce55"/>
<rect x="347" y="608.7" width="2.3" height="2.3" fill="#4cc26c"/>
<rect x="349" y="608.7" width="2.3" height="2.3" fill="#22a186"/>
<rect x="351" y="608.7" width="2.3" height="2.3" fill="#21918c"/>
<rect x="353" y="608.7" width="2.3" height="2.3" fill="#2f6d8e"/>
<rect x="355" y="608.7" width="2.3" height="2.3" fill="#375b8c"/>
<rect x="357" y="608.7" width="2.3" height="2.3" fill="#3f4888"/>
<rect x="359" y="608.7" width="4.3" height="2.3" fill="#471a6c"/>
<rect x="363" y="608.7" width="2.3" height="2.3" fill="#45327d"/>
<rect x="365" y="608.7" width="2.3" height="2.3" fill="#375b8c"/>
<rect x="367" y="608.7" width="2.3" height="2.3" fill="#277f8d"/>
<rect x="369" y="608.7" width="2.3" height="2.3" fill="#22a186"/>
<rect x="371" y="608.7" width="2.3" height="2.3" fill="#31b27b"/>
<rect x="373" y="608.7" width="2.3" height="2.3" fill="#4cc26c"/>
<rect x="375" y="608.7" width="2.3" height="2.3" fill="#31b27b"/>
<rect x="377" y="608.7" width="2.3" height="2.3" fill="#22a186"/>
<rect x="379" y="608.7" width="4.3" height="2.3" fill="#21918c"/>
<rect x="383" y="608.7" width="2.3" height="2.3" fill="#277f8d"/>
<rect x="385" y="608.7" width="2.3" height="2.3" fill="#2f6d8e"/>
<rect x="387" y="608.7" width="16.3" height="2.3" fill="#375b8c"/>
<rect x="255" y="610.7" width="12.3" height="2.3" fill="#45327d"/>
<rect x="267" y="610.7" width="14.3" height="2.3" fill="#471a6c"/>
<rect x="281" y="610.7" width="10.3" height="2.3" fill="#440154"/>
<rect x="291" y="610.7" width="2.3" height="2.3" fill="#45327d"/>
<rect x="293" y="610.7" width="2.3" height="2.3" fill="#3f4888"/>
<rect x="295" y="610.7" width="2.3" height="2.3" fill="#2f6d8e"/>
<rect x="297" y="610.7" width="2.3" height="2.3" fill="#21918c"/>
<rect x="299" y="610.7" width="2.3" height="2.3" fill="#22a186"/>
<rect x="301" y="610.7" width="2.3" height="2.3" fill="#4cc26c"/>
<rect x="303" y="610.7" width="2.3" height="2.3" fill="#72ce55"/>
<rect x="305" y="610.7" width="2.3" height="2.3" fill="#a0d938"/>
<rect x="307" y="610.7" width="2.3" height="2.3" fill="#cfe126"/>
<rect x="309" y="610.7" width="28.3" height="2.3" fill="#fde725"/>
<rect x="337" y="610.7" width="2.3" height="2.3" fill="#cfe126"/>
<rect x="339" y="610.7" width="4.3" height="2.3" fill="#a0d938"/>
<rect x="343" y="610.7" width="2.3" height="2.3" fill="#72ce55"/>
<rect x="345" y="610.7" width="2.3" height="2.3" fill="#4cc26c"/>
<rect x="347" y="610.7" width="2.3" height="2.3" fill="#31b27b"/>
<rect x="349" y="610.7" width="2.3" height="2.3" fill="#22a186"/>
<rect x="351" y="610.7" width="2.3" height="2.3" fill="#21918c"/>
<rect x="353" y="610.7" width="2.3" height="2.3" fill="#2f6d8e"/>
<rect x="355" y="610.7" width="2.3" height="2.3" fill="#375b8c"/>
<rect x="357" y="610.7" width="2.3" height="2.3" fill="#3f4888"/>
<rect x="359" y="610.7" width="2.3" height="2.3" fill="#45327d"/>
<rect x="361" y="610.7" width="4.3" height="2.3" fill="#471a6c"/>
<rect x="365" y="610.7" width="2.3" height="2.3" fill="#3f4888"/>
<rect x="367" y="610.7" width="2.3" height="2.3" fill="#2f6d8e"/>
<rect x="369" y="610.7" width="2.3" height="2.3" fill="#21918c"/>
<rect x="371" y="610.7" width="2.3" height="2.3" fill="#22a186"/>
<rect x="373" y="610.7" width="2.3" height="2.3" fill="#31b27b"/>
<rect x="375" y="610.7" width="2.3" height="2.3" fill="#22a186"/>
<rect x="377" y="610.7" width="2.3" height="2.3" fill="#21918c"/>
<rect x="379" y="610.7" width="4.3" height="2.3" fill="#277f8d"/>
<rect x="383" y="610.7" width="2.3" height="2.3" fill="#2f6d8e"/>
<rect x="385" y="610.7" width="18.3" height="2.3" fill="#375b8c"/>
<rect x="255" y="612.7" width="8.3" height="2.3" fill="#45327d"/>
<rect x="263" y="612.7" width="14.3" height="2.3" fill="#471a6c"/>
<rect x="277" y="612.7" width="14.3" height="2.3" fill="#440154"/>
<rect x="291" y="612.7" width="2.3" height="2.3" fill="#471a6c"/>
<rect x="293" y="612.7" width="2.3" height="2.3" fill="#45327d"/>
<rect x="295" y="612.7" width="2.3" height="2.3" fill="#375b8c"/>
<rect x="297" y="612.7" width="2.3" height="2.3" fill="#277f8d"/>
<rect x="299" y="612.7" width="2.3" height="2.3" fill="#22a186"/>
<rect x="301" y="612.7" width="2.3" height="2.3" fill="#31b27b"/>
<rect x="303" y="612.7" width="2.3" height="2.3" fill="#4cc26c"/>
<rect x="305" y="612.7" width="2.3" height="2.3" fill="#a0d938"/>
<rect x="307" y="612.7" width="2.3" height="2.3" fill="#cfe126"/>
<rect x="309" y="612.7" width="24.3" height="2.3" fill="#fde725"/>
<rect x="333" y="612.7" width="4.3" height="2.3" fill="#cfe126"/>
<rect x="337" y="612.7" width="4.3" height="2.3" fill="#a0d938"/>
<rect x="341" y="612.7" width="2.3" height="2.3" fill="#72ce55"/>
<rect x="343" y="612.7" width="2.3" height="2.3" fill="#4cc26c"/>
<rect x="345" y="612.7" width="2.3" height="2.3" fill="#31b27b"/>
<rect x="347" y="612.7" width="4.3" height="2.3" fill="#22a186"/>
<rect x="351" y="612.7" width="2.3" height="2.3" fill="#277f8d"/>
<rect x="353" y="612.7" width="2.3" height="2.3" fill="#375b8c"/>
<rect x="355" y="612.7" width="2.3" height="2.3" fill="#3f4888"/>
<rect x="357" y="612.7" width="2.3" height="2.3" fill="#45327d"/>
<rect x="359" y="612.7" width="6.3" height="2.3" fill="#471a6c"/>
<rect x="365" y="612.7" width="2.3" height="2.3" fill="#45327d"/>
<rect x="367" y="612.7" width="2.3" height="2.3" fill="#3f4888"/>
<rect x="369" y="612.7" width="2.3" height="2.3" fill="#2f6d8e"/>
<rect x="371" y="612.7" width="2.3" height="2.3" fill="#21918c"/>
<rect x="373" y="612.7" width="2.3" height="2.3" fill="#22a186"/>
<rect x="375" y="612.7" width="2.3" height="2.3" fill="#21918c"/>
<rect x="377" y="612.7" width="4.3" height="2.3" fill="#277f8d"/>
<rect x="381" y="612.7" width="2.3" height="2.3" fill="#2f6d8e"/>
<rect x="383" y="612.7" width="20.3" height="2.3" fill="#375b8c"/>
<rect x="255" y="614.7" width="6.3" height="2.3" fill="#45327d"/>
<rect x="261" y="614.7" width="12.3" height="2.3" fill="#471a6c"/>
<rect x="273" y="614.7" width="20.3" height="2.3" fill="#440154"/>
<rect x="293" y="614.7" width="2.3" height="2.3" fill="#471a6c"/>
<rect x="295" y="614.7" width="2.3" height="2.3" fill="#3f4888"/>
<rect x="297" y="614.7" width="2.3" height="2.3" fill="#2f6d8e"/>
<rect x="299" y="614.7" width="2.3" height="2.3" fill="#21918c"/>
<rect x="301" y="614.7" width="2.3" height="2.3" fill="#22a186"/>
<rect x="303" y="614.7" width="2.3" height="2.3" fill="#31b27b"/>
<rect x="305" y="614.7" width="2.3" height="2.3" fill="#72ce55"/>
<rect x="307" y="614.7" width="2.3" height="2.3" fill="#a0d938"/>
<rect x="309" y="614.7" width="2.3" height="2.3" fill="#cfe126"/>
<rect x="311" y="614.7" width="20.3" height="2.3" fill="#fde725"/>
<rect x="331" y="614.7" width="6.3" height="2.3" fill="#cfe126"/>
<rect x="337" y="614.7" width="4.3" height="2.3" fill="#a0d938"/>
<rect x="341" y="614.7" width="2.3" height="2.3" fill="#72ce55"/>
<rect x="343" y="614.7" width="2.3" height="2.3" fill="#4cc26c"/>
<rect x="345" y="614.7" width="2.3" height="2.3" fill="#22a186"/>
<rect x="347" y="614.7" width="4.3" height="2.3" fill="#21918c"/>
<rect x="351" y="614.7" width="2.3" height="2.3" fill="#2f6d8e"/>
<rect x="353" y="614.7" width="2.3" height="2.3" fill="#375b8c"/>
<rect x="355" y="614.7" width="2.3" height="2.3" fill="#45327d"/>
<rect x="357" y="614.7" width="10.3" height="2.3" fill="#471a6c"/>
<rect x="367" y="614.7" width="2.3" height="2.3" fill="#45327d"/>
<rect x="369" y="614.7" width="2.3" height="2.3" fill="#375b8c"/>
<rect x="371" y="614.7" width="2.3" height="2.3" fill="#277f8d"/>
<rect x="373" y="614.7" width="2.3" height="2.3" fill="#21918c"/>
<rect x="375" y="614.7" width="2.3" height="2.3" fill="#277f8d"/>
<rect x="377" y="614.7" width="4.3" height="2.3" fill="#2f6d8e"/>
<rect x="381" y="614.7" width="22.3" height="2.3" fill="#375b8c"/>
<rect x="255" y="616.7" width="2.3" height="2.3" fill="#45327d"/>
<rect x="257" y="616.7" width="12.3" height="2.3" fill="#471a6c"/>
<rect x="269" y="616.7" width="26.3" height="2.3" fill="#440154"/>
<rect x="295" y="616.7" width="2.3" height="2.3" fill="#45327d"/>
<rect x="297" y="616.7" width="2.3" height="2.3" fill="#3f4888"/>
<rect x="299" y="616.7" width="2.3" height="2.3" fill="#2f6d8e"/>
<rect x="301" y="616.7" width="2.3" height="2.3" fill="#21918c"/>
<rect x="303" y="616.7" width="2.3" height="2.3" fill="#22a186"/>
<rect x="305" y="616.7" width="2.3" height="2.3" fill="#4cc26c"/>
<rect x="307" y="616.7" width="2.3" height="2.3" fill="#72ce55"/>
<rect x="309" y="616.7" width="2.3" height="2.3" fill="#a0d938"/>
<rect x="311" y="616.7" width="2.3" height="2.3" fill="#cfe126"/>
<rect x="313" y="616.7" width="14.3" height="2.3" fill="#fde725"/>
<rect x="327" y="616.7" width="12.3" height="2.3" fill="#cfe126"/>
<rect x="339" y="616.7" width="2.3" height="2.3" fill="#a0d938"/>
<rect x="341" y="616.7" width="2.3" height="2.3" fill="#72ce55"/>
<rect x="343" y="616.7" width="2.3" height="2.3" fill="#4cc26c"/>
<rect x="345" y="616.7" width="2.3" height="2.3" fill="#22a186"/>
<rect x="347" y="616.7" width="2.3" height="2.3" fill="#21918c"/>
<rect x="349" y="616.7" width="2.3" height="2.3" fill="#277f8d"/>
<rect x="351" y="616.7" width="2.3" height="2.3" fill="#2f6d8e"/>
<rect x="353" y="616.7" width="2.3" height="2.3" fill="#3f4888"/>
<rect x="355" y="616.7" width="2.3" height="2.3" fill="#45327d"/>
<rect x="357" y="616.7" width="12.3" height="2.3" fill="#471a6c"/>
<rect x="369" y="616.7" width="2.3" height="2.3" fill="#45327d"/>
<rect x="371" y="616.7" width="2.3" height="2.3" fill="#2f6d8e"/>
<rect x="373" y="616.7" width="2.3" height="2.3" fill="#277f8d"/>
<rect x="375" y="616.7" width="2.3" height="2.3" fill="#2f6d8e"/>
<rect x="377" y="616.7" width="26.3" height="2.3" fill="#375b8c"/>
<rect x="255" y="618.7" width="10.3" height="2.3" fill="#471a6c"/>
<rect x="265" y="618.7" width="30.3" height="2.3" fill="#440154"/>
<rect x="295" y="618.7" width="2.3" height="2.3" fill="#471a6c"/>
<rect x="297" y="618.7" width="2.3" height="2.3" fill="#45327d"/>
<rect x="299" y="618.7" width="2.3" height="2.3" fill="#375b8c"/>
<rect x="301" y="618.7" width="2.3" height="2.3" fill="#2f6d8e"/>
<rect x="303" y="618.7" width="2.3" height="2.3" fill="#21918c"/>
<rect x="305" y="618.7" width="2.3" height="2.3" fill="#31b27b"/>
<rect x="307" y="618.7" width="2.3" height="2.3" fill="#4cc26c"/>
<rect x="309" y="618.7" width="2.3" height="2.3" fill="#a0d938"/>
<rect x="311" y="618.7" width="2.3" height="2.3" fill="#cfe126"/>
<rect x="313" y="618.7" width="12.3" height="2.3" fill="#fde725"/>
<rect x="325" y="618.7" width="14.3" height="2.3" fill="#cfe126"/>
<rect x="339" y="618.7" width="2.3" height="2.3" fill="#a0d938"/>
<rect x="341" y="618.7" width="2.3" height="2.3" fill="#72ce55"/>
<rect x="343" y="618.7" width="2.3" height="2.3" fill="#4cc26c"/>
<rect x="345" y="618.7" width="2.3" height="2.3" fill="#22a186"/>
<rect x="347" y="618.7" width="2.3" height="2.3" fill="#21918c"/>
<rect x="349" y="618.7" width="2.3" height="2.3" fill="#2f6d8e"/>
<rect x="351" y="618.7" width="4.3" height="2.3" fill="#375b8c"/>
<rect x="355" y="618.7" width="2.3" height="2.3" fill="#3f4888"/>
<rect x="357" y="618.7" width="14.3" height="2.3" fill="#471a6c"/>
<rect x="371" y="618.7" width="2.3" height="2.3" fill="#3f4888"/>
<rect x="373" y="618.7" width="2.3" height="2.3" fill="#2f6d8e"/>
<rect x="375" y="618.7" width="28.3" height="2.3" fill="#375b8c"/>
<rect x="255" y="620.7" width="6.3" height="2.3" fill="#471a6c"/>
<rect x="261" y="620.7" width="36.3" height="2.3" fill="#440154"/>
<rect x="297" y="620.7" width="2.3" height="2.3" fill="#471a6c"/>
<rect x="299" y="620.7" width="2.3" height="2.3" fill="#3f4888"/>
<rect x="301" y="620.7" width="2.3" height="2.3" fill="#375b8c"/>
<rect x="303" y="620.7" width="2.3" height="2.3" fill="#277f8d"/>
<rect x="305" y="620.7" width="2.3" height="2.3" fill="#22a186"/>
<rect x="307" y="620.7" width="2.3" height="2.3" fill="#31b27b"/>
<rect x="309" y="620.7" width="2.3" height="2.3" fill="#72ce55"/>
<rect x="311" y="620.7" width="2.3" height="2.3" fill="#a0d938"/>
<rect x="313" y="620.7" width="2.3" height="2.3" fill="#cfe126"/>
<rect x="315" y="620.7" width="8.3" height="2.3" fill="#fde725"/>
<rect x="323" y="620.7" width="18.3" height="2.3" fill="#cfe126"/>
<rect x="341" y="620.7" width="2.3" height="2.3" fill="#a0d938"/>
<rect x="343" y="620.7" width="2.3" height="2.3" fill="#4cc26c"/>
<rect x="345" y="620.7" width="2.3" height="2.3" fill="#31b27b"/>
<rect x="347" y="620.7" width="2.3" height="2.3" fill="#21918c"/>
<rect x="349" y="620.7" width="2.3" height="2.3" fill="#2f6d8e"/>
<rect x="351" y="620.7" width="4.3" height="2.3" fill="#375b8c"/>
<rect x="355" y="620.7" width="2.3" height="2.3" fill="#3f4888"/>
<rect x="357" y="620.7" width="2.3" height="2.3" fill="#45327d"/>
<rect x="359" y="620.7" width="12.3" height="2.3" fill="#471a6c"/>
<rect x="371" y="620.7" width="2.3" height="2.3" fill="#45327d"/>
<rect x="373" y="620.7" width="2.3" height="2.3" fill="#3f4888"/>
<rect x="375" y="620.7" width="28.3" height="2.3" fill="#375b8c"/>
<rect x="255" y="622.7" width="2.3" height="2.3" fill="#471a6c"/>
<rect x="257" y="622.7" width="42.3" height="2.3" fill="#440154"/>
<rect x="299" y="622.7" width="2.3" height="2.3" fill="#45327d"/>
<rect x="301" y="622.7" width="2.3" height="2.3" fill="#3f4888"/>
<rect x="303" y="622.7" width="2.3" height="2.3" fill="#2f6d8e"/>
<rect x="305" y="622.7" width="2.3" height="2.3" fill="#21918c"/>
<rect x="307" y="622.7" width="2.3" height="2.3" fill="#22a186"/>
<rect x="309" y="622.7" width="2.3" height="2.3" fill="#4cc26c"/>
<rect x="311" y="622.7" width="2.3" height="2.3" fill="#72ce55"/>
<rect x="313" y="622.7" width="2.3" height="2.3" fill="#a0d938"/>
<rect x="315" y="622.7" width="2.3" height="2.3" fill="#cfe126"/>
<rect x="317" y="622.7" width="2.3" height="2.3" fill="#fde725"/>
<rect x="319" y="622.7" width="4.3" height="2.3" fill="#cfe126"/>
<rect x="323" y="622.7" width="4.3" height="2.3" fill="#a0d938"/>
<rect x="327" y="622.7" width="16.3" height="2.3" fill="#cfe126"/>
<rect x="343" y="622.7" width="2.3" height="2.3" fill="#72ce55"/>
<rect x="345" y="622.7" width="2.3" height="2.3" fill="#4cc26c"/>
<rect x="347" y="622.7" width="2.3" height="2.3" fill="#22a186"/>
<rect x="349" y="622.7" width="2.3" height="2.3" fill="#277f8d"/>
<rect x="351" y="622.7" width="2.3" height="2.3" fill="#2f6d8e"/>
<rect x="353" y="622.7" width="4.3" height="2.3" fill="#375b8c"/>
<rect x="357" y="622.7" width="2.3" height="2.3" fill="#3f4888"/>
<rect x="359" y="622.7" width="2.3" height="2.3" fill="#45327d"/>
<rect x="361" y="622.7" width="12.3" height="2.3" fill="#471a6c"/>
<rect x="373" y="622.7" width="2.3" height="2.3" fill="#45327d"/>
<rect x="375" y="622.7" width="2.3" height="2.3" fill="#3f4888"/>
<rect x="377" y="622.7" width="26.3" height="2.3" fill="#375b8c"/>
<rect x="255" y="624.7" width="44.3" height="2.3" fill="#440154"/>
<rect x="299" y="624.7" width="2.3" height="2.3" fill="#471a6c"/>
<rect x="301" y="624.7" width="2.3" height="2.3" fill="#45327d"/>
<rect x="303" y="624.7" width="2.3" height="2.3" fill="#3f4888"/>
<rect x="305" y="624.7" width="2.3" height="2.3" fill="#277f8d"/>
<rect x="307" y="624.7" width="2.3" height="2.3" fill="#21918c"/>
<rect x="309" y="624.7" width="2.3" height="2.3" fill="#31b27b"/>
<rect x="311" y="624.7" width="2.3" height="2.3" fill="#4cc26c"/>
<rect x="313" y="624.7" width="2.3" height="2.3" fill="#72ce55"/>
<rect x="315" y="624.7" width="2.3" height="2.3" fill="#a0d938"/>
<rect x="317" y="624.7" width="2.3" height="2.3" fill="#cfe126"/>
<rect x="319" y="624.7" width="10.3" height="2.3" fill="#a0d938"/>
<rect x="329" y="624.7" width="14.3" height="2.3" fill="#cfe126"/>
<rect x="343" y="624.7" width="2.3" height="2.3" fill="#a0d938"/>
<rect x="345" y="624.7" width="2.3" height="2.3" fill="#72ce55"/>
<rect x="347" y="624.7" width="2.3" height="2.3" fill="#31b27b"/>
<rect x="349" y="624.7" width="2.3" height="2.3" fill="#21918c"/>
<rect x="351" y="624.7" width="2.3" height="2.3" fill="#277f8d"/>
<rect x="353" y="624.7" width="4.3" height="2.3" fill="#375b8c"/>
<rect x="357" y="624.7" width="2.3" height="2.3" fill="#3f4888"/>
<rect x="359" y="624.7" width="2.3" height="2.3" fill="#45327d"/>
<rect x="361" y="624.7" width="12.3" height="2.3" fill="#471a6c"/>
<rect x="373" y="624.7" width="2.3" height="2.3" fill="#45327d"/>
<rect x="375" y="624.7" width="2.3" height="2.3" fill="#3f4888"/>
<rect x="377" y="624.7" width="26.3" height="2.3" fill="#375b8c"/>
<rect x="255" y="626.7" width="46.3" height="2.3" fill="#440154"/>
<rect x="301" y="626.7" width="2.3" height="2.3" fill="#471a6c"/>
<rect x="303" y="626.7" width="2.3" height="2.3" fill="#45327d"/>
<rect x="305" y="626.7" width="2.3" height="2.3" fill="#375b8c"/>
<rect x="307" y="626.7" width="2.3" height="2.3" fill="#277f8d"/>
<rect x="309" y="626.7" width="2.3" height="2.3" fill="#22a186"/>
<rect x="311" y="626.7" width="2.3" height="2.3" fill="#4cc26c"/>
<rect x="313" y="626.7" width="2.3" height="2.3" fill="#72ce55"/>
<rect x="315" y="626.7" width="6.3" height="2.3" fill="#a0d938"/>
<rect x="321" y="626.7" width="6.3" height="2.3" fill="#72ce55"/>
<rect x="327" y="626.7" width="4.3" height="2.3" fill="#a0d938"/>
<rect x="331" y="626.7" width="10.3" height="2.3" fill="#cfe126"/>
<rect x="341" y="626.7" width="4.3" height="2.3" fill="#a0d938"/>
<rect x="345" y="626.7" width="2.3" height="2.3" fill="#72ce55"/>
<rect x="347" y="626.7" width="2.3" height="2.3" fill="#4cc26c"/>
<rect x="349" y="626.7" width="2.3" height="2.3" fill="#31b27b"/>
<rect x="351" y="626.7" width="2.3" height="2.3" fill="#21918c"/>
<rect x="353" y="626.7" width="2.3" height="2.3" fill="#2f6d8e"/>
<rect x="355" y="626.7" width="4.3" height="2.3" fill="#375b8c"/>
<rect x="359" y="626.7" width="2.3" height="2.3" fill="#3f4888"/>
<rect x="361" y="626.7" width="2.3" height="2.3" fill="#45327d"/>
<rect x="363" y="626.7" width="12.3" height="2.3" fill="#471a6c"/>
<rect x="375" y="626.7" width="2.3" height="2.3" fill="#45327d"/>
<rect x="377" y="626.7" width="2.3" height="2.3" fill="#3f4888"/>
<rect x="379" y="626.7" width="24.3" height="2.3" fill="#375b8c"/>
<rect x="255" y="628.7" width="48.3" height="2.3" fill="#440154"/>
<rect x="303" y="628.7" width="2.3" height="2.3" fill="#471a6c"/>
<rect x="305" y="628.7" width="2.3" height="2.3" fill="#3f4888"/>
<rect x="307" y="628.7" width="2.3" height="2.3" fill="#2f6d8e"/>
<rect x="309" y="628.7" width="2.3" height="2.3" fill="#21918c"/>
<rect x="311" y="628.7" width="2.3" height="2.3" fill="#31b27b"/>
<rect x="313" y="628.7" width="2.3" height="2.3" fill="#4cc26c"/>
<rect x="315" y="628.7" width="4.3" height="2.3" fill="#72ce55"/>
<rect x="319" y="628.7" width="8.3" height="2.3" fill="#4cc26c"/>
<rect x="327" y="628.7" width="2.3" height="2.3" fill="#72ce55"/>
<rect x="329" y="628.7" width="4.3" height="2.3" fill="#a0d938"/>
<rect x="333" y="628.7" width="6.3" height="2.3" fill="#cfe126"/>
<rect x="339" y="628.7" width="4.3" height="2.3" fill="#a0d938"/>
<rect x="343" y="628.7" width="2.3" height="2.3" fill="#72ce55"/>
<rect x="345" y="628.7" width="2.3" height="2.3" fill="#4cc26c"/>
<rect x="347" y="628.7" width="4.3" height="2.3" fill="#31b27b"/>
<rect x="351" y="628.7" width="2.3" height="2.3" fill="#22a186"/>
<rect x="353" y="628.7" width="2.3" height="2.3" fill="#277f8d"/>
<rect x="355" y="628.7" width="2.3" height="2.3" fill="#2f6d8e"/>
<rect x="357" y="628.7" width="4.3" height="2.3" fill="#375b8c"/>
<rect x="361" y="628.7" width="2.3" height="2.3" fill="#45327d"/>
<rect x="363" y="628.7" width="14.3" height="2.3" fill="#471a6c"/>
<rect x="377" y="628.7" width="2.3" height="2.3" fill="#3f4888"/>
<rect x="379" y="628.7" width="24.3" height="2.3" fill="#375b8c"/>
<rect x="255" y="630.7" width="50.3" height="2.3" fill="#440154"/>
<rect x="305" y="630.7" width="2.3" height="2.3" fill="#45327d"/>
<rect x="307" y="630.7" width="2.3" height="2.3" fill="#375b8c"/>
<rect x="309" y="630.7" width="2.3" height="2.3" fill="#277f8d"/>
<rect x="311" y="630.7" width="2.3" height="2.3" fill="#21918c"/>
<rect x="313" y="630.7" width="2.3" height="2.3" fill="#31b27b"/>
<rect x="315" y="630.7" width="4.3" height="2.3" fill="#4cc26c"/>
<rect x="319" y="630.7" width="8.3" height="2.3" fill="#31b27b"/>
<rect x="327" y="630.7" width="2.3" height="2.3" fill="#4cc26c"/>
<rect x="329" y="630.7" width="2.3" height="2.3" fill="#72ce55"/>
<rect x="331" y="630.7" width="2.3" height="2.3" fill="#a0d938"/>
<rect x="333" y="630.7" width="2.3" height="2.3" fill="#cfe126"/>
<rect x="335" y="630.7" width="4.3" height="2.3" fill="#a0d938"/>
<rect x="339" y="630.7" width="4.3" height="2.3" fill="#72ce55"/>
<rect x="343" y="630.7" width="2.3" height="2.3" fill="#4cc26c"/>
<rect x="345" y="630.7" width="4.3" height="2.3" fill="#31b27b"/>
<rect x="349" y="630.7" width="2.3" height="2.3" fill="#22a186"/>
<rect x="351" y="630.7" width="4.3" height="2.3" fill="#21918c"/>
<rect x="355" y="630.7" width="2.3" height="2.3" fill="#277f8d"/>
<rect x="357" y="630.7" width="4.3" height="2.3" fill="#375b8c"/>
<rect x="361" y="630.7" width="2.3" height="2.3" fill="#3f4888"/>
<rect x="363" y="630.7" width="2.3" height="2.3" fill="#45327d"/>
<rect x="365" y="630.7" width="12.3" height="2.3" fill="#471a6c"/>
<rect x="377" y="630.7" width="2.3" height="2.3" fill="#45327d"/>
<rect x="379" y="630.7" width="2.3" height="2.3" fill="#3f4888"/>
<rect x="381" y="630.7" width="22.3" height="2.3" fill="#375b8c"/>
<rect x="255" y="632.7" width="50.3" height="2.3" fill="#440154"/>
<rect x="305" y="632.7" width="2.3" height="2.3" fill="#471a6c"/>
<rect x="307" y="632.7" width="2.3" height="2.3" fill="#45327d"/>
<rect x="309" y="632.7" width="2.3" height="2.3" fill="#375b8c"/>
<rect x="311" y="632.7" width="2.3" height="2.3" fill="#277f8d"/>
<rect x="313" y="632.7" width="2.3" height="2.3" fill="#22a186"/>
<rect x="315" y="632.7" width="4.3" height="2.3" fill="#31b27b"/>
<rect x="319" y="632.7" width="8.3" height="2.3" fill="#22a186"/>
<rect x="327" y="632.7" width="4.3" height="2.3" fill="#31b27b"/>
<rect x="331" y="632.7" width="2.3" height="2.3" fill="#72ce55"/>
<rect x="333" y="632.7" width="4.3" height="2.3" fill="#a0d938"/>
<rect x="337" y="632.7" width="4.3" height="2.3" fill="#72ce55"/>
<rect x="341" y="632.7" width="2.3" height="2.3" fill="#4cc26c"/>
<rect x="343" y="632.7" width="4.3" height="2.3" fill="#31b27b"/>
<rect x="347" y="632.7" width="2.3" height="2.3" fill="#22a186"/>
<rect x="349" y="632.7" width="2.3" height="2.3" fill="#21918c"/>
<rect x="351" y="632.7" width="4.3" height="2.3" fill="#277f8d"/>
<rect x="355" y="632.7" width="2.3" height="2.3" fill="#2f6d8e"/>
<rect x="357" y="632.7" width="6.3" height="2.3" fill="#375b8c"/>
<rect x="363" y="632.7" width="2.3" height="2.3" fill="#3f4888"/>
<rect x="365" y="632.7" width="14.3" height="2.3" fill="#471a6c"/>
<rect x="379" y="632.7" width="2.3" height="2.3" fill="#45327d"/>
<rect x="381" y="632.7" width="22.3" height="2.3" fill="#375b8c"/>
<rect x="255" y="634.7" width="52.3" height="2.3" fill="#440154"/>
<rect x="307" y="634.7" width="2.3" height="2.3" fill="#471a6c"/>
<rect x="309" y="634.7" width="2.3" height="2.3" fill="#3f4888"/>
<rect x="311" y="634.7" width="2.3" height="2.3" fill="#2f6d8e"/>
<rect x="313" y="634.7" width="2.3" height="2.3" fill="#21918c"/>
<rect x="315" y="634.7" width="4.3" height="2.3" fill="#22a186"/>
<rect x="319" y="634.7" width="10.3" height="2.3" fill="#21918c"/>
<rect x="329" y="634.7" width="2.3" height="2.3" fill="#22a186"/>
<rect x="331" y="634.7" width="2.3" height="2.3" fill="#4cc26c"/>
<rect x="333" y="634.7" width="4.3" height="2.3" fill="#72ce55"/>
<rect x="337" y="634.7" width="4.3" height="2.3" fill="#4cc26c"/>
<rect x="341" y="634.7" width="4.3" height="2.3" fill="#31b27b"/>
<rect x="345" y="634.7" width="2.3" height="2.3" fill="#22a186"/>
<rect x="347" y="634.7" width="2.3" height="2.3" fill="#21918c"/>
<rect x="349" y="634.7" width="2.3" height="2.3" fill="#277f8d"/>
<rect x="351" y="634.7" width="4.3" height="2.3" fill="#2f6d8e"/>
<rect x="355" y="634.7" width="8.3" height="2.3" fill="#375b8c"/>
<rect x="363" y="634.7" width="2.3" height="2.3" fill="#3f4888"/>
<rect x="365" y="634.7" width="2.3" height="2.3" fill="#45327d"/>
<rect x="367" y="634.7" width="12.3" height="2.3" fill="#471a6c"/>
<rect x="379" y="634.7" width="2.3" height="2.3" fill="#45327d"/>
<rect x="381" y="634.7" width="2.3" height="2.3" fill="#3f4888"/>
<rect x="383" y="634.7" width="20.3" height="2.3" fill="#375b8c"/>
<rect x="255" y="636.7" width="54.3" height="2.3" fill="#440154"/>
<rect x="309" y="636.7" width="2.3" height="2.3" fill="#45327d"/>
<rect x="311" y="636.7" width="2.3" height="2.3" fill="#375b8c"/>
<rect x="313" y="636.7" width="2.3" height="2.3" fill="#277f8d"/>
<rect x="315" y="636.7" width="4.3" height="2.3" fill="#21918c"/>
<rect x="319" y="636.7" width="2.3" height="2.3" fill="#277f8d"/>
<rect x="321" y="636.7" width="4.3" height="2.3" fill="#2f6d8e"/>
<rect x="325" y="636.7" width="4.3" height="2.3" fill="#277f8d"/>
<rect x="329" y="636.7" width="2.3" height="2.3" fill="#22a186"/>
<rect x="331" y="636.7" width="2.3" height="2.3" fill="#31b27b"/>
<rect x="333" y="636.7" width="6.3" height="2.3" fill="#4cc26c"/>
<rect x="339" y="636.7" width="4.3" height="2.3" fill="#31b27b"/>
<rect x="343" y="636.7" width="2.3" height="2.3" fill="#22a186"/>
<rect x="345" y="636.7" width="2.3" height="2.3" fill="#21918c"/>
<rect x="347" y="636.7" width="2.3" height="2.3" fill="#277f8d"/>
<rect x="349" y="636.7" width="2.3" height="2.3" fill="#2f6d8e"/>
<rect x="351" y="636.7" width="14.3" height="2.3" fill="#375b8c"/>
<rect x="365" y="636.7" width="2.3" height="2.3" fill="#3f4888"/>
<rect x="367" y="636.7" width="2.3" height="2.3" fill="#45327d"/>
<rect x="369" y="636.7" width="12.3" height="2.3" fill="#471a6c"/>
<rect x="381" y="636.7" width="2.3" height="2.3" fill="#45327d"/>
<rect x="383" y="636.7" width="2.3" height="2.3" fill="#3f4888"/>
<rect x="385" y="636.7" width="18.3" height="2.3" fill="#375b8c"/>
<rect x="255" y="638.7" width="54.3" height="2.3" fill="#440154"/>
<rect x="309" y="638.7" width="2.3" height="2.3" fill="#471a6c"/>
<rect x="311" y="638.7" width="2.3" height="2.3" fill="#45327d"/>
<rect x="313" y="638.7" width="8.3" height="2.3" fill="#2f6d8e"/>
<rect x="321" y="638.7" width="2.3" height="2.3" fill="#375b8c"/>
<rect x="323" y="638.7" width="4.3" height="2.3" fill="#2f6d8e"/>
<rect x="327" y="638.7" width="2.3" height="2.3" fill="#277f8d"/>
<rect x="329" y="638.7" width="2.3" height="2.3" fill="#21918c"/>
<rect x="331" y="638.7" width="2.3" height="2.3" fill="#22a186"/>
<rect x="333" y="638.7" width="2.3" height="2.3" fill="#31b27b"/>
<rect x="335" y="638.7" width="2.3" height="2.3" fill="#4cc26c"/>
<rect x="337" y="638.7" width="2.3" height="2.3" fill="#31b27b"/>
<rect x="339" y="638.7" width="4.3" height="2.3" fill="#22a186"/>
<rect x="343" y="638.7" width="4.3" height="2.3" fill="#21918c"/>
<rect x="347" y="638.7" width="2.3" height="2.3" fill="#277f8d"/>
<rect x="349" y="638.7" width="18.3" height="2.3" fill="#375b8c"/>
<rect x="367" y="638.7" width="2.3" height="2.3" fill="#45327d"/>
<rect x="369" y="638.7" width="12.3" height="2.3" fill="#471a6c"/>
<rect x="381" y="638.7" width="2.3" height="2.3" fill="#45327d"/>
<rect x="383" y="638.7" width="2.3" height="2.3" fill="#3f4888"/>
<rect x="385" y="638.7" width="18.3" height="2.3" fill="#375b8c"/>
<rect x="255" y="640.7" width="56.3" height="2.3" fill="#440154"/>
<rect x="311" y="640.7" width="2.3" height="2.3" fill="#471a6c"/>
<rect x="313" y="640.7" width="2.3" height="2.3" fill="#3f4888"/>
<rect x="315" y="640.7" width="10.3" height="2.3" fill="#375b8c"/>
<rect x="325" y="640.7" width="2.3" height="2.3" fill="#2f6d8e"/>
<rect x="327" y="640.7" width="4.3" height="2.3" fill="#277f8d"/>
<rect x="331" y="640.7" width="2.3" height="2.3" fill="#21918c"/>
<rect x="333" y="640.7" width="2.3" height="2.3" fill="#22a186"/>
<rect x="335" y="640.7" width="2.3" height="2.3" fill="#31b27b"/>
<rect x="337" y="640.7" width="4.3" height="2.3" fill="#22a186"/>
<rect x="341" y="640.7" width="4.3" height="2.3" fill="#21918c"/>
<rect x="345" y="640.7" width="4.3" height="2.3" fill="#277f8d"/>
<rect x="349" y="640.7" width="2.3" height="2.3" fill="#2f6d8e"/>
<rect x="351" y="640.7" width="16.3" height="2.3" fill="#375b8c"/>
<rect x="367" y="640.7" width="2.3" height="2.3" fill="#3f4888"/>
<rect x="369" y="640.7" width="2.3" height="2.3" fill="#45327d"/>
<rect x="371" y="640.7" width="12.3" height="2.3" fill="#471a6c"/>
<rect x="383" y="640.7" width="2.3" height="2.3" fill="#45327d"/>
<rect x="385" y="640.7" width="2.3" height="2.3" fill="#3f4888"/>
<rect x="387" y="640.7" width="16.3" height="2.3" fill="#375b8c"/>
<rect x="255" y="642.7" width="58.3" height="2.3" fill="#440154"/>
<rect x="313" y="642.7" width="6.3" height="2.3" fill="#45327d"/>
<rect x="319" y="642.7" width="2.3" height="2.3" fill="#3f4888"/>
<rect x="321" y="642.7" width="4.3" height="2.3" fill="#375b8c"/>
<rect x="325" y="642.7" width="4.3" height="2.3" fill="#2f6d8e"/>
<rect x="329" y="642.7" width="4.3" height="2.3" fill="#277f8d"/>
<rect x="333" y="642.7" width="2.3" height="2.3" fill="#21918c"/>
<rect x="335" y="642.7" width="2.3" height="2.3" fill="#22a186"/>
<rect x="337" y="642.7" width="4.3" height="2.3" fill="#21918c"/>
<rect x="341" y="642.7" width="8.3" height="2.3" fill="#277f8d"/>
<rect x="349" y="642.7" width="4.3" height="2.3" fill="#2f6d8e"/>
<rect x="353" y="642.7" width="16.3" height="2.3" fill="#375b8c"/>
<rect x="369" y="642.7" width="2.3" height="2.3" fill="#3f4888"/>
<rect x="371" y="642.7" width="14.3" height="2.3" fill="#471a6c"/>
<rect x="385" y="642.7" width="2.3" height="2.3" fill="#3f4888"/>
<rect x="387" y="642.7" width="16.3" height="2.3" fill="#375b8c"/>
<rect x="255" y="644.7" width="60.3" height="2.3" fill="#440154"/>
<rect x="315" y="644.7" width="2.3" height="2.3" fill="#471a6c"/>
<rect x="317" y="644.7" width="2.3" height="2.3" fill="#45327d"/>
<rect x="319" y="644.7" width="2.3" height="2.3" fill="#3f4888"/>
<rect x="321" y="644.7" width="6.3" height="2.3" fill="#375b8c"/>
<rect x="327" y="644.7" width="2.3" height="2.3" fill="#2f6d8e"/>
<rect x="329" y="644.7" width="6.3" height="2.3" fill="#277f8d"/>
<rect x="335" y="644.7" width="4.3" height="2.3" fill="#21918c"/>
<rect x="339" y="644.7" width="12.3" height="2.3" fill="#277f8d"/>
<rect x="351" y="644.7" width="2.3" height="2.3" fill="#2f6d8e"/>
<rect x="353" y="644.7" width="16.3" height="2.3" fill="#375b8c"/>
<rect x="369" y="644.7" width="2.3" height="2.3" fill="#3f4888"/>
<rect x="371" y="644.7" width="2.3" height="2.3" fill="#45327d"/>
<rect x="373" y="644.7" width="12.3" height="2.3" fill="#471a6c"/>
<rect x="385" y="644.7" width="2.3" height="2.3" fill="#45327d"/>
<rect x="387" y="644.7" width="2.3" height="2.3" fill="#3f4888"/>
<rect x="389" y="644.7" width="14.3" height="2.3" fill="#375b8c"/>
<rect x="255" y="646.7" width="2.3" height="2.3" fill="#45327d"/>
<rect x="257" y="646.7" width="60.3" height="2.3" fill="#440154"/>
<rect x="317" y="646.7" width="2.3" height="2.3" fill="#471a6c"/>
<rect x="319" y="646.7" width="2.3" height="2.3" fill="#45327d"/>
<rect x="321" y="646.7" width="2.3" height="2.3" fill="#3f4888"/>
<rect x="323" y="646.7" width="6.3" height="2.3" fill="#375b8c"/>
<rect x="329" y="646.7" width="2.3" height="2.3" fill="#2f6d8e"/>
<rect x="331" y="646.7" width="4.3" height="2.3" fill="#277f8d"/>
<rect x="335" y="646.7" width="2.3" height="2.3" fill="#21918c"/>
<rect x="337" y="646.7" width="14.3" height="2.3" fill="#277f8d"/>
<rect x="351" y="646.7" width="4.3" height="2.3" fill="#2f6d8e"/>
<rect x="355" y="646.7" width="16.3" height="2.3" fill="#375b8c"/>
<rect x="371" y="646.7" width="2.3" height="2.3" fill="#3f4888"/>
<rect x="373" y="646.7" width="2.3" height="2.3" fill="#45327d"/>
<rect x="375" y="646.7" width="12.3" height="2.3" fill="#471a6c"/>
<rect x="387" y="646.7" width="2.3" height="2.3" fill="#45327d"/>
<rect x="389" y="646.7" width="14.3" height="2.3" fill="#375b8c"/>
<rect x="255" y="648.7" width="2.3" height="2.3" fill="#3f4888"/>
<rect x="257" y="648.7" width="60.3" height="2.3" fill="#440154"/>
<rect x="317" y="648.7" width="2.3" height="2.3" fill="#471a6c"/>
<rect x="319" y="648.7" width="2.3" height="2.3" fill="#45327d"/>
<rect x="321" y="648.7" width="2.3" height="2.3" fill="#3f4888"/>
<rect x="323" y="648.7" width="6.3" height="2.3" fill="#375b8c"/>
<rect x="329" y="648.7" width="2.3" height="2.3" fill="#2f6d8e"/>
<rect x="331" y="648.7" width="22.3" height="2.3" fill="#277f8d"/>
<rect x="353" y="648.7" width="2.3" height="2.3" fill="#2f6d8e"/>
<rect x="355" y="648.7" width="16.3" height="2.3" fill="#375b8c"/>
<rect x="371" y="648.7" width="2.3" height="2.3" fill="#3f4888"/>
<rect x="373" y="648.7" width="2.3" height="2.3" fill="#45327d"/>
<rect x="375" y="648.7" width="12.3" height="2.3" fill="#471a6c"/>
<rect x="387" y="648.7" width="2.3" height="2.3" fill="#45327d"/>
<rect x="389" y="648.7" width="2.3" height="2.3" fill="#3f4888"/>
<rect x="391" y="648.7" width="12.3" height="2.3" fill="#375b8c"/>
<rect x="255" y="650.7" width="2.3" height="2.3" fill="#375b8c"/>
<rect x="257" y="650.7" width="2.3" height="2.3" fill="#45327d"/>
<rect x="259" y="650.7" width="60.3" height="2.3" fill="#440154"/>
<rect x="319" y="650.7" width="2.3" height="2.3" fill="#471a6c"/>
<rect x="321" y="650.7" width="2.3" height="2.3" fill="#45327d"/>
<rect x="323" y="650.7" width="2.3" height="2.3" fill="#3f4888"/>
<rect x="325" y="650.7" width="6.3" height="2.3" fill="#375b8c"/>
<rect x="331" y="650.7" width="2.3" height="2.3" fill="#2f6d8e"/>
<rect x="333" y="650.7" width="20.3" height="2.3" fill="#277f8d"/>
<rect x="353" y="650.7" width="4.3" height="2.3" fill="#2f6d8e"/>
<rect x="357" y="650.7" width="16.3" height="2.3" fill="#375b8c"/>
<rect x="373" y="650.7" width="2.3" height="2.3" fill="#3f4888"/>
<rect x="375" y="650.7" width="2.3" height="2.3" fill="#45327d"/>
<rect x="377" y="650.7" width="12.3" height="2.3" fill="#471a6c"/>
<rect x="389" y="650.7" width="2.3" height="2.3" fill="#45327d"/>
<rect x="391" y="650.7" width="2.3" height="2.3" fill="#3f4888"/>
<rect x="393" y="650.7" width="10.3" height="2.3" fill="#375b8c"/>
<rect x="255" y="652.7" width="2.3" height="2.3" fill="#375b8c"/>
<rect x="257" y="652.7" width="2.3" height="2.3" fill="#3f4888"/>
<rect x="259" y="652.7" width="2.3" height="2.3" fill="#471a6c"/>
<rect x="261" y="652.7" width="58.3" height="2.3" fill="#440154"/>
<rect x="319" y="652.7" width="2.3" height="2.3" fill="#471a6c"/>
<rect x="321" y="652.7" width="2.3" height="2.3" fill="#45327d"/>
<rect x="323" y="652.7" width="2.3" height="2.3" fill="#3f4888"/>
<rect x="325" y="652.7" width="6.3" height="2.3" fill="#375b8c"/>
<rect x="331" y="652.7" width="2.3" height="2.3" fill="#2f6d8e"/>
<rect x="333" y="652.7" width="22.3" height="2.3" fill="#277f8d"/>
<rect x="355" y="652.7" width="2.3" height="2.3" fill="#2f6d8e"/>
<rect x="357" y="652.7" width="18.3" height="2.3" fill="#375b8c"/>
<rect x="375" y="652.7" width="2.3" height="2.3" fill="#45327d"/>
<rect x="377" y="652.7" width="12.3" height="2.3" fill="#471a6c"/>
<rect x="389" y="652.7" width="2.3" height="2.3" fill="#45327d"/>
<rect x="391" y="652.7" width="2.3" height="2.3" fill="#3f4888"/>
<rect x="393" y="652.7" width="10.3" height="2.3" fill="#375b8c"/>
<rect x="255" y="654.7" width="4.3" height="2.3" fill="#375b8c"/>
<rect x="259" y="654.7" width="2.3" height="2.3" fill="#45327d"/>
<rect x="261" y="654.7" width="60.3" height="2.3" fill="#440154"/>
<rect x="321" y="654.7" width="2.3" height="2.3" fill="#471a6c"/>
<rect x="323" y="654.7" width="2.3" height="2.3" fill="#45327d"/>
<rect x="325" y="654.7" width="2.3" height="2.3" fill="#3f4888"/>
<rect x="327" y="654.7" width="6.3" height="2.3" fill="#375b8c"/>
<rect x="333" y="654.7" width="2.3" height="2.3" fill="#2f6d8e"/>
<rect x="335" y="654.7" width="20.3" height="2.3" fill="#277f8d"/>
<rect x="355" y="654.7" width="4.3" height="2.3" fill="#2f6d8e"/>
<rect x="359" y="654.7" width="16.3" height="2.3" fill="#375b8c"/>
<rect x="375" y="654.7" width="2.3" height="2.3" fill="#3f4888"/>
<rect x="377" y="654.7" width="2.3" height="2.3" fill="#45327d"/>
<rect x="379" y="654.7" width="12.3" height="2.3" fill="#471a6c"/>
<rect x="391" y="654.7" width="2.3" height="2.3" fill="#45327d"/>
<rect x="393" y="654.7" width="2.3" height="2.3" fill="#3f4888"/>
<rect x="395" y="654.7" width="8.3" height="2.3" fill="#375b8c"/>
<rect x="255" y="656.7" width="4.3" height="2.3" fill="#375b8c"/>
<rect x="259" y="656.7" width="2.3" height="2.3" fill="#3f4888"/>
<rect x="261" y="656.7" width="2.3" height="2.3" fill="#471a6c"/>
<rect x="263" y="656.7" width="58.3" height="2.3" fill="#440154"/>
<rect x="321" y="656.7" width="2.3" height="2.3" fill="#471a6c"/>
<rect x="323" y="656.7" width="2.3" height="2.3" fill="#45327d"/>
<rect x="325" y="656.7" width="2.3" height="2.3" fill="#3f4888"/>
<rect x="327" y="656.7" width="6.3" height="2.3" fill="#375b8c"/>
<rect x="333" y="656.7" width="4.3" height="2.3" fill="#2f6d8e"/>
<rect x="337" y="656.7" width="20.3" height="2.3" fill="#277f8d"/>
<rect x="357" y="656.7" width="2.3" height="2.3" fill="#2f6d8e"/>
<rect x="359" y="656.7" width="18.3" height="2.3" fill="#375b8c"/>
<rect x="377" y="656.7" width="2.3" height="2.3" fill="#3f4888"/>
<rect x="379" y="656.7" width="14.3" height="2.3" fill="#471a6c"/>
<rect x="393" y="656.7" width="2.3" height="2.3" fill="#3f4888"/>
<rect x="395" y="656.7" width="8.3" height="2.3" fill="#375b8c"/>
<rect x="255" y="658.7" width="6.3" height="2.3" fill="#375b8c"/>
<rect x="261" y="658.7" width="2.3" height="2.3" fill="#45327d"/>
<rect x="263" y="658.7" width="60.3" height="2.3" fill="#440154"/>
<rect x="323" y="658.7" width="2.3" height="2.3" fill="#471a6c"/>
<rect x="325" y="658.7" width="2.3" height="2.3" fill="#45327d"/>
<rect x="327" y="658.7" width="2.3" height="2.3" fill="#3f4888"/>
<rect x="329" y="658.7" width="6.3" height="2.3" fill="#375b8c"/>
<rect x="335" y="658.7" width="2.3" height="2.3" fill="#2f6d8e"/>
<rect x="337" y="658.7" width="20.3" height="2.3" fill="#277f8d"/>
<rect x="357" y="658.7" width="4.3" height="2.3" fill="#2f6d8e"/>
<rect x="361" y="658.7" width="16.3" height="2.3" fill="#375b8c"/>
<rect x="377" y="658.7" width="2.3" height="2.3" fill="#3f4888"/>
<rect x="379" y="658.7" width="2.3" height="2.3" fill="#45327d"/>
<rect x="381" y="658.7" width="4.3" height="2.3" fill="#471a6c"/>
<rect x="385" y="658.7" width="10.3" height="2.3" fill="#3f4888"/>
<rect x="395" y="658.7" width="2.3" height="2.3" fill="#375b8c"/>
<rect x="397" y="658.7" width="6.3" height="2.3" fill="#2f6d8e"/>
<rect x="255" y="660.7" width="6.3" height="2.3" fill="#375b8c"/>
<rect x="261" y="660.7" width="2.3" height="2.3" fill="#3f4888"/>
<rect x="263" y="660.7" width="2.3" height="2.3" fill="#471a6c"/>
<rect x="265" y="660.7" width="58.3" height="2.3" fill="#440154"/>
<rect x="323" y="660.7" width="2.3" height="2.3" fill="#471a6c"/>
<rect x="325" y="660.7" width="2.3" height="2.3" fill="#45327d"/>
<rect x="327" y="660.7" width="4.3" height="2.3" fill="#3f4888"/>
<rect x="331" y="660.7" width="4.3" height="2.3" fill="#375b8c"/>
<rect x="335" y="660.7" width="4.3" height="2.3" fill="#2f6d8e"/>
<rect x="339" y="660.7" width="20.3" height="2.3" fill="#277f8d"/>
<rect x="359" y="660.7" width="2.3" height="2.3" fill="#2f6d8e"/>
<rect x="361" y="660.7" width="18.3" height="2.3" fill="#375b8c"/>
<rect x="379" y="660.7" width="2.3" height="2.3" fill="#3f4888"/>
<rect x="381" y="660.7" width="2.3" height="2.3" fill="#45327d"/>
<rect x="383" y="660.7" width="2.3" height="2.3" fill="#471a6c"/>
<rect x="385" y="660.7" width="2.3" height="2.3" fill="#3f4888"/>
<rect x="387" y="660.7" width="8.3" height="2.3" fill="#375b8c"/>
<rect x="395" y="660.7" width="4.3" height="2.3" fill="#2f6d8e"/>
<rect x="399" y="660.7" width="4.3" height="2.3" fill="#277f8d"/>
<rect x="255" y="662.7" width="8.3" height="2.3" fill="#375b8c"/>
<rect x="263" y="662.7" width="2.3" height="2.3" fill="#45327d"/>
<rect x="265" y="662.7" width="60.3" height="2.3" fill="#440154"/>
<rect x="325" y="662.7" width="2.3" height="2.3" fill="#471a6c"/>
<rect x="327" y="662.7" width="2.3" height="2.3" fill="#45327d"/>
<rect x="329" y="662.7" width="2.3" height="2.3" fill="#3f4888"/>
<rect x="331" y="662.7" width="6.3" height="2.3" fill="#375b8c"/>
<rect x="337" y="662.7" width="2.3" height="2.3" fill="#2f6d8e"/>
<rect x="339" y="662.7" width="20.3" height="2.3" fill="#277f8d"/>
<rect x="359" y="662.7" width="4.3" height="2.3" fill="#2f6d8e"/>
<rect x="363" y="662.7" width="16.3" height="2.3" fill="#375b8c"/>
<rect x="379" y="662.7" width="2.3" height="2.3" fill="#3f4888"/>
<rect x="381" y="662.7" width="2.3" height="2.3" fill="#45327d"/>
<rect x="383" y="662.7" width="2.3" height="2.3" fill="#471a6c"/>
<rect x="385" y="662.7" width="2.3" height="2.3" fill="#3f4888"/>
<rect x="387" y="662.7" width="2.3" height="2.3" fill="#375b8c"/>
<rect x="389" y="662.7" width="14.3" height="2.3" fill="#277f8d"/>
<rect x="255" y="664.7" width="8.3" height="2.3" fill="#375b8c"/>
<rect x="263" y="664.7" width="2.3" height="2.3" fill="#3f4888"/>
<rect x="265" y="664.7" width="2.3" height="2.3" fill="#471a6c"/>
<rect x="267" y="664.7" width="58.3" height="2.3" fill="#440154"/>
<rect x="325" y="664.7" width="4.3" height="2.3" fill="#471a6c"/>
<rect x="329" y="664.7" width="2.3" height="2.3" fill="#45327d"/>
<rect x="331" y="664.7" width="2.3" height="2.3" fill="#3f4888"/>
<rect x="333" y="664.7" width="4.3" height="2.3" fill="#375b8c"/>
<rect x="337" y="664.7" width="4.3" height="2.3" fill="#2f6d8e"/>
<rect x="341" y="664.7" width="20.3" height="2.3" fill="#277f8d"/>
<rect x="361" y="664.7" width="2.3" height="2.3" fill="#2f6d8e"/>
<rect x="363" y="664.7" width="18.3" height="2.3" fill="#375b8c"/>
<rect x="381" y="664.7" width="2.3" height="2.3" fill="#3f4888"/>
<rect x="383" y="664.7" width="2.3" height="2.3" fill="#45327d"/>
<rect x="385" y="664.7" width="2.3" height="2.3" fill="#3f4888"/>
<rect x="387" y="664.7" width="2.3" height="2.3" fill="#375b8c"/>
<rect x="389" y="664.7" width="2.3" height="2.3" fill="#277f8d"/>
<rect x="391" y="664.7" width="12.3" height="2.3" fill="#21918c"/>
<rect x="255" y="666.7" width="10.3" height="2.3" fill="#375b8c"/>
<rect x="265" y="666.7" width="2.3" height="2.3" fill="#45327d"/>
<rect x="267" y="666.7" width="60.3" height="2.3" fill="#440154"/>
<rect x="327" y="666.7" width="2.3" height="2.3" fill="#471a6c"/>
<rect x="329" y="666.7" width="2.3" height="2.3" fill="#45327d"/>
<rect x="331" y="666.7" width="2.3" height="2.3" fill="#3f4888"/>
<rect x="333" y="666.7" width="6.3" height="2.3" fill="#375b8c"/>
<rect x="339" y="666.7" width="2.3" height="2.3" fill="#2f6d8e"/>
<rect x="341" y="666.7" width="22.3" height="2.3" fill="#277f8d"/>
<rect x="363" y="666.7" width="2.3" height="2.3" fill="#2f6d8e"/>
<rect x="365" y="666.7" width="18.3" height="2.3" fill="#375b8c"/>
<rect x="383" y="666.7" width="2.3" height="2.3" fill="#45327d"/>
<rect x="385" y="666.7" width="2.3" height="2.3" fill="#3f4888"/>
<rect x="387" y="666.7" width="2.3" height="2.3" fill="#375b8c"/>
<rect x="389" y="666.7" width="2.3" height="2.3" fill="#277f8d"/>
<rect x="391" y="666.7" width="12.3" height="2.3" fill="#21918c"/>
<rect x="255" y="668.7" width="10.3" height="2.3" fill="#375b8c"/>
<rect x="265" y="668.7" width="2.3" height="2.3" fill="#3f4888"/>
<rect x="267" y="668.7" width="2.3" height="2.3" fill="#471a6c"/>
<rect x="269" y="668.7" width="60.3" height="2.3" fill="#440154"/>
<rect x="329" y="668.7" width="2.3" height="2.3" fill="#471a6c"/>
<rect x="331" y="668.7" width="2.3" height="2.3" fill="#45327d"/>
<rect x="333" y="668.7" width="2.3" height="2.3" fill="#3f4888"/>
<rect x="335" y="668.7" width="4.3" height="2.3" fill="#375b8c"/>
<rect x="339" y="668.7" width="4.3" height="2.3" fill="#2f6d8e"/>
<rect x="343" y="668.7" width="20.3" height="2.3" fill="#277f8d"/>
<rect x="363" y="668.7" width="2.3" height="2.3" fill="#2f6d8e"/>
<rect x="365" y="668.7" width="18.3" height="2.3" fill="#375b8c"/>
<rect x="383" y="668.7" width="4.3" height="2.3" fill="#3f4888"/>
<rect x="387" y="668.7" width="2.3" height="2.3" fill="#2f6d8e"/>
<rect x="389" y="668.7" width="2.3" height="2.3" fill="#277f8d"/>
<rect x="391" y="668.7" width="12.3" height="2.3" fill="#21918c"/>
<rect x="255" y="670.7" width="12.3" height="2.3" fill="#375b8c"/>
<rect x="267" y="670.7" width="2.3" height="2.3" fill="#45327d"/>
<rect x="269" y="670.7" width="60.3" height="2.3" fill="#440154"/>
<rect x="329" y="670.7" width="2.3" height="2.3" fill="#471a6c"/>
<rect x="331" y="670.7" width="2.3" height="2.3" fill="#45327d"/>
<rect x="333" y="670.7" width="2.3" height="2.3" fill="#3f4888"/>
<rect x="335" y="670.7" width="6.3" height="2.3" fill="#375b8c"/>
<rect x="341" y="670.7" width="2.3" height="2.3" fill="#2f6d8e"/>
<rect x="343" y="670.7" width="22.3" height="2.3" fill="#277f8d"/>
<rect x="365" y="670.7" width="2.3" height="2.3" fill="#2f6d8e"/>
<rect x="367" y="670.7" width="20.3" height="2.3" fill="#375b8c"/>
<rect x="387" y="670.7" width="2.3" height="2.3" fill="#2f6d8e"/>
<rect x="389" y="670.7" width="2.3" height="2.3" fill="#277f8d"/>
<rect x="391" y="670.7" width="12.3" height="2.3" fill="#21918c"/>
<rect x="255" y="672.7" width="12.3" height="2.3" fill="#375b8c"/>
<rect x="267" y="672.7" width="2.3" height="2.3" fill="#3f4888"/>
<rect x="269" y="672.7" width="2.3" height="2.3" fill="#471a6c"/>
<rect x="271" y="672.7" width="60.3" height="2.3" fill="#440154"/>
<rect x="331" y="672.7" width="2.3" height="2.3" fill="#471a6c"/>
<rect x="333" y="672.7" width="2.3" height="2.3" fill="#45327d"/>
<rect x="335" y="672.7" width="2.3" height="2.3" fill="#3f4888"/>
<rect x="337" y="672.7" width="4.3" height="2.3" fill="#375b8c"/>
<rect x="341" y="672.7" width="4.3" height="2.3" fill="#2f6d8e"/>
<rect x="345" y="672.7" width="20.3" height="2.3" fill="#277f8d"/>
<rect x="365" y="672.7" width="2.3" height="2.3" fill="#2f6d8e"/>
<rect x="367" y="672.7" width="20.3" height="2.3" fill="#375b8c"/>
<rect x="387" y="672.7" width="2.3" height="2.3" fill="#2f6d8e"/>
<rect x="389" y="672.7" width="2.3" height="2.3" fill="#277f8d"/>
<rect x="391" y="672.7" width="12.3" height="2.3" fill="#21918c"/>
<rect x="255" y="674.7" width="14.3" height="2.3" fill="#375b8c"/>
<rect x="269" y="674.7" width="2.3" height="2.3" fill="#3f4888"/>
<rect x="271" y="674.7" width="60.3" height="2.3" fill="#440154"/>
<rect x="331" y="674.7" width="2.3" height="2.3" fill="#471a6c"/>
<rect x="333" y="674.7" width="2.3" height="2.3" fill="#45327d"/>
<rect x="335" y="674.7" width="2.3" height="2.3" fill="#3f4888"/>
<rect x="337" y="674.7" width="6.3" height="2.3" fill="#375b8c"/>
<rect x="343" y="674.7" width="2.3" height="2.3" fill="#2f6d8e"/>
<rect x="345" y="674.7" width="16.3" height="2.3" fill="#277f8d"/>
<rect x="361" y="674.7" width="8.3" height="2.3" fill="#2f6d8e"/>
<rect x="369" y="674.7" width="16.3" height="2.3" fill="#375b8c"/>
<rect x="385" y="674.7" width="4.3" height="2.3" fill="#2f6d8e"/>
<rect x="389" y="674.7" width="2.3" height="2.3" fill="#277f8d"/>
<rect x="391" y="674.7" width="12.3" height="2.3" fill="#21918c"/>
<rect x="255" y="676.7" width="16.3" height="2.3" fill="#375b8c"/>
<rect x="271" y="676.7" width="2.3" height="2.3" fill="#45327d"/>
<rect x="273" y="676.7" width="60.3" height="2.3" fill="#440154"/>
<rect x="333" y="676.7" width="2.3" height="2.3" fill="#471a6c"/>
<rect x="335" y="676.7" width="2.3" height="2.3" fill="#45327d"/>
<rect x="337" y="676.7" width="2.3" height="2.3" fill="#3f4888"/>
<rect x="339" y="676.7" width="4.3" height="2.3" fill="#375b8c"/>
<rect x="343" y="676.7" width="4.3" height="2.3" fill="#2f6d8e"/>
<rect x="347" y="676.7" width="10.3" height="2.3" fill="#277f8d"/>
<rect x="357" y="676.7" width="14.3" height="2.3" fill="#2f6d8e"/>
<rect x="371" y="676.7" width="14.3" height="2.3" fill="#375b8c"/>
<rect x="385" y="676.7" width="4.3" height="2.3" fill="#2f6d8e"/>
<rect x="389" y="676.7" width="2.3" height="2.3" fill="#277f8d"/>
<rect x="391" y="676.7" width="12.3" height="2.3" fill="#21918c"/>
<rect x="255" y="678.7" width="16.3" height="2.3" fill="#375b8c"/>
<rect x="271" y="678.7" width="2.3" height="2.3" fill="#3f4888"/>
<rect x="273" y="678.7" width="60.3" height="2.3" fill="#440154"/>
<rect x="333" y="678.7" width="2.3" height="2.3" fill="#471a6c"/>
<rect x="335" y="678.7" width="2.3" height="2.3" fill="#45327d"/>
<rect x="337" y="678.7" width="2.3" height="2.3" fill="#3f4888"/>
<rect x="339" y="678.7" width="6.3" height="2.3" fill="#375b8c"/>
<rect x="345" y="678.7" width="2.3" height="2.3" fill="#2f6d8e"/>
<rect x="347" y="678.7" width="6.3" height="2.3" fill="#277f8d"/>
<rect x="353" y="678.7" width="18.3" height="2.3" fill="#2f6d8e"/>
<rect x="371" y="678.7" width="14.3" height="2.3" fill="#375b8c"/>
<rect x="385" y="678.7" width="2.3" height="2.3" fill="#2f6d8e"/>
<rect x="387" y="678.7" width="2.3" height="2.3" fill="#277f8d"/>
<rect x="389" y="678.7" width="14.3" height="2.3" fill="#21918c"/>
</g>
<path d="M292.2 606.5H321.5M337.3 606.5H366M328.9 569.8V599.2M328.9 614.9V644.3" stroke="#ff0000" stroke-width="1.2"/>
<line x1="263.4" y1="680.5" x2="263.4" y2="684.0" stroke="#000" stroke-width="0.8"/>
<text transform="translate(263.4,696.3) scale(1.1,1.08)" font-family="Liberation Sans" font-size="11.00" fill="#000" text-anchor="middle" stroke="#000" stroke-width="0.12">−4</text>
<line x1="251.9" y1="672.0" x2="255.4" y2="672.0" stroke="#000" stroke-width="0.8"/>
<text transform="translate(248.4,676.0) scale(1.1,1.08)" font-family="Liberation Sans" font-size="11.00" fill="#000" text-anchor="end" stroke="#000" stroke-width="0.12">−4</text>
<line x1="296.2" y1="680.5" x2="296.2" y2="684.0" stroke="#000" stroke-width="0.8"/>
<text transform="translate(296.2,696.3) scale(1.1,1.08)" font-family="Liberation Sans" font-size="11.00" fill="#000" text-anchor="middle" stroke="#000" stroke-width="0.12">−2</text>
<line x1="251.9" y1="639.2" x2="255.4" y2="639.2" stroke="#000" stroke-width="0.8"/>
<text transform="translate(248.4,643.2) scale(1.1,1.08)" font-family="Liberation Sans" font-size="11.00" fill="#000" text-anchor="end" stroke="#000" stroke-width="0.12">−2</text>
<line x1="328.9" y1="680.5" x2="328.9" y2="684.0" stroke="#000" stroke-width="0.8"/>
<text transform="translate(328.9,696.3) scale(1.1,1.08)" font-family="Liberation Sans" font-size="11.00" fill="#000" text-anchor="middle" stroke="#000" stroke-width="0.12">0</text>
<line x1="251.9" y1="606.5" x2="255.4" y2="606.5" stroke="#000" stroke-width="0.8"/>
<text transform="translate(248.4,610.5) scale(1.1,1.08)" font-family="Liberation Sans" font-size="11.00" fill="#000" text-anchor="end" stroke="#000" stroke-width="0.12">0</text>
<line x1="361.6" y1="680.5" x2="361.6" y2="684.0" stroke="#000" stroke-width="0.8"/>
<text transform="translate(361.6,696.3) scale(1.1,1.08)" font-family="Liberation Sans" font-size="11.00" fill="#000" text-anchor="middle" stroke="#000" stroke-width="0.12">2</text>
<line x1="251.9" y1="573.8" x2="255.4" y2="573.8" stroke="#000" stroke-width="0.8"/>
<text transform="translate(248.4,577.8) scale(1.1,1.08)" font-family="Liberation Sans" font-size="11.00" fill="#000" text-anchor="end" stroke="#000" stroke-width="0.12">2</text>
<line x1="394.4" y1="680.5" x2="394.4" y2="684.0" stroke="#000" stroke-width="0.8"/>
<text transform="translate(394.4,696.3) scale(1.1,1.08)" font-family="Liberation Sans" font-size="11.00" fill="#000" text-anchor="middle" stroke="#000" stroke-width="0.12">4</text>
<line x1="251.9" y1="541.0" x2="255.4" y2="541.0" stroke="#000" stroke-width="0.8"/>
<text transform="translate(248.4,545.0) scale(1.1,1.08)" font-family="Liberation Sans" font-size="11.00" fill="#000" text-anchor="end" stroke="#000" stroke-width="0.12">4</text>
<rect x="255.4" y="532.7" width="148" height="147.8" fill="none" stroke="#222" stroke-width="1"/>
<text transform="translate(328.9,525.7) scale(1.1,1.08)" font-family="Liberation Sans" font-size="12.50" fill="#000" text-anchor="middle" stroke="#000" stroke-width="0.12">Lineflux Map</text>
<text transform="translate(328.9,706.3) scale(1.1,1.08)" font-family="Liberation Sans" font-size="11.00" fill="#000" text-anchor="middle" stroke="#000" stroke-width="0.12">s/b: 2.54 +/- 0.095</text>
<rect x="279.4" y="557.6" width="99" height="98.2" fill="none" stroke="#ff0000" stroke-width="1.2"/>
<text transform="translate(328.9,546.5) scale(1.1,1.08)" font-family="Liberation Sans" font-size="10.50" fill="#ff0000" text-anchor="middle" stroke="#ff0000" stroke-width="0.12">N</text>
<text transform="translate(264.9,610.5) scale(1.1,1.08)" font-family="Liberation Sans" font-size="10.50" fill="#ff0000" text-anchor="middle" stroke="#ff0000" stroke-width="0.12">E</text>
<defs><clipPath id="c3"><rect x="440.5" y="532.6" width="148" height="147.8"/></clipPath><radialGradient id="blob3" cx="0.5" cy="0.5" r="0.5"><stop offset="0" stop-color="#000"/><stop offset="0.6" stop-color="#000"/><stop offset="0.8" stop-color="#333" stop-opacity="0.8"/><stop offset="1" stop-color="#aaa" stop-opacity="0"/></radialGradient></defs>
<g clip-path="url(#c3)"><rect x="440.5" y="532.6" width="148" height="147.8" fill="#ccc" filter="url(#lg)"/>
<circle cx="511.2" cy="604.7" r="26" fill="url(#blob3)"/></g>
<ellipse cx="511.2" cy="604.7" rx="27.4" ry="26.1" fill="none" stroke="#ffc000" stroke-width="1.2"/>
<path d="M477.7 606.5H504.7M523.2 606.5H551.6M514.4 570V597.3M514.4 614.4V644" stroke="#ff0000" stroke-width="1.2"/>
<rect x="504.2" y="597.3" width="13.2" height="12.5" fill="none" stroke="#0000ff" stroke-width="1.2"/>
<line x1="448.9" y1="680.4" x2="448.9" y2="683.9" stroke="#000" stroke-width="0.8"/>
<text transform="translate(448.9,696.3) scale(1.1,1.08)" font-family="Liberation Sans" font-size="11.00" fill="#000" text-anchor="middle" stroke="#000" stroke-width="0.12">−4</text>
<line x1="437.0" y1="672.0" x2="440.5" y2="672.0" stroke="#000" stroke-width="0.8"/>
<text transform="translate(433.5,676.0) scale(1.1,1.08)" font-family="Liberation Sans" font-size="11.00" fill="#000" text-anchor="end" stroke="#000" stroke-width="0.12">−4</text>
<line x1="481.7" y1="680.4" x2="481.7" y2="683.9" stroke="#000" stroke-width="0.8"/>
<text transform="translate(481.7,696.3) scale(1.1,1.08)" font-family="Liberation Sans" font-size="11.00" fill="#000" text-anchor="middle" stroke="#000" stroke-width="0.12">−2</text>
<line x1="437.0" y1="639.2" x2="440.5" y2="639.2" stroke="#000" stroke-width="0.8"/>
<text transform="translate(433.5,643.2) scale(1.1,1.08)" font-family="Liberation Sans" font-size="11.00" fill="#000" text-anchor="end" stroke="#000" stroke-width="0.12">−2</text>
<line x1="514.4" y1="680.4" x2="514.4" y2="683.9" stroke="#000" stroke-width="0.8"/>
<text transform="translate(514.4,696.3) scale(1.1,1.08)" font-family="Liberation Sans" font-size="11.00" fill="#000" text-anchor="middle" stroke="#000" stroke-width="0.12">0</text>
<line x1="437.0" y1="606.5" x2="440.5" y2="606.5" stroke="#000" stroke-width="0.8"/>
<text transform="translate(433.5,610.5) scale(1.1,1.08)" font-family="Liberation Sans" font-size="11.00" fill="#000" text-anchor="end" stroke="#000" stroke-width="0.12">0</text>
<line x1="547.1" y1="680.4" x2="547.1" y2="683.9" stroke="#000" stroke-width="0.8"/>
<text transform="translate(547.1,696.3) scale(1.1,1.08)" font-family="Liberation Sans" font-size="11.00" fill="#000" text-anchor="middle" stroke="#000" stroke-width="0.12">2</text>
<line x1="437.0" y1="573.8" x2="440.5" y2="573.8" stroke="#000" stroke-width="0.8"/>
<text transform="translate(433.5,577.8) scale(1.1,1.08)" font-family="Liberation Sans" font-size="11.00" fill="#000" text-anchor="end" stroke="#000" stroke-width="0.12">2</text>
<line x1="579.9" y1="680.4" x2="579.9" y2="683.9" stroke="#000" stroke-width="0.8"/>
<text transform="translate(579.9,696.3) scale(1.1,1.08)" font-family="Liberation Sans" font-size="11.00" fill="#000" text-anchor="middle" stroke="#000" stroke-width="0.12">4</text>
<line x1="437.0" y1="541.0" x2="440.5" y2="541.0" stroke="#000" stroke-width="0.8"/>
<text transform="translate(433.5,545.0) scale(1.1,1.08)" font-family="Liberation Sans" font-size="11.00" fill="#000" text-anchor="end" stroke="#000" stroke-width="0.12">4</text>
<rect x="440.5" y="532.6" width="148" height="147.8" fill="none" stroke="#222" stroke-width="1"/>
<text transform="translate(514.4,525.7) scale(1.1,1.08)" font-family="Liberation Sans" font-size="12.50" fill="#000" text-anchor="middle" stroke="#000" stroke-width="0.12">HSC(26.2) r</text>
<text transform="translate(514.4,706.3) scale(1.1,1.08)" font-family="Liberation Sans" font-size="11.00" fill="#000" text-anchor="middle" stroke="#000" stroke-width="0.12">m:20.3  re:1.6"  s:0.2"</text>
<text transform="translate(514.4,719.0) scale(1.1,1.08)" font-family="Liberation Sans" font-size="11.00" fill="#000" text-anchor="middle" stroke="#000" stroke-width="0.12">EWr: 1, PLAE: 0.151</text>
<rect x="464.9" y="557.6" width="99" height="98.2" fill="none" stroke="#ff0000" stroke-width="1.2"/>
<text transform="translate(514.4,546.5) scale(1.1,1.08)" font-family="Liberation Sans" font-size="10.50" fill="#ff0000" text-anchor="middle" stroke="#ff0000" stroke-width="0.12">N</text>
<text transform="translate(450.0,610.5) scale(1.1,1.08)" font-family="Liberation Sans" font-size="10.50" fill="#ff0000" text-anchor="middle" stroke="#ff0000" stroke-width="0.12">E</text>
<text transform="translate(69.5,786.0) scale(1.0,1.107)" font-family="Liberation Mono" font-size="13.00" fill="#000" textLength="78.3" lengthAdjust="spacingAndGlyphs">Separation</text>
<text transform="translate(69.5,800.4) scale(1.0,1.107)" font-family="Liberation Mono" font-size="13.00" fill="#000" textLength="86.1" lengthAdjust="spacingAndGlyphs">Match score</text>
<text transform="translate(69.5,815.5) scale(1.0,1.107)" font-family="Liberation Mono" font-size="13.00" fill="#000" textLength="54.8" lengthAdjust="spacingAndGlyphs">RA, Dec</text>
<text transform="translate(69.5,829.8) scale(1.0,1.107)" font-family="Liberation Mono" font-size="13.00" fill="#000" textLength="47.0" lengthAdjust="spacingAndGlyphs">Spec z</text>
<text transform="translate(69.5,844.5) scale(1.0,1.107)" font-family="Liberation Mono" font-size="13.00" fill="#000" textLength="54.8" lengthAdjust="spacingAndGlyphs">Photo z</text>
<text transform="translate(69.5,858.8) scale(1.0,1.107)" font-family="Liberation Mono" font-size="13.00" fill="#000" textLength="117.4" lengthAdjust="spacingAndGlyphs">Est LyA rest-EW</text>
<text transform="translate(69.5,873.2) scale(1.0,1.107)" font-family="Liberation Mono" font-size="13.00" fill="#000" textLength="23.5" lengthAdjust="spacingAndGlyphs">mag</text>
<text transform="translate(69.5,888.6) scale(1.0,1.107)" font-family="Liberation Mono" font-size="13.00" fill="#000" textLength="101.7" lengthAdjust="spacingAndGlyphs">P(LAE)/P(OII)</text>
<text transform="translate(286.0,779.1) scale(1.0,1.107)" font-family="Liberation Mono" font-size="13.00" fill="#0000ff" textLength="70.4" lengthAdjust="spacingAndGlyphs">0.309447"</text>
<text transform="translate(286.0,793.5) scale(1.0,1.107)" font-family="Liberation Mono" font-size="13.00" fill="#0000ff" textLength="39.1" lengthAdjust="spacingAndGlyphs">1.000</text>
<text transform="translate(286.0,807.8) scale(1.0,1.107)" font-family="Liberation Mono" font-size="13.00" fill="#0000ff" textLength="164.3" lengthAdjust="spacingAndGlyphs">207.945219, 53.450159</text>
<text transform="translate(286.0,822.5) scale(1.0,1.107)" font-family="Liberation Mono" font-size="13.00" fill="#0000ff" textLength="23.5" lengthAdjust="spacingAndGlyphs">N/A</text>
<text transform="translate(286.0,837.4) scale(1.0,1.107)" font-family="Liberation Mono" font-size="13.00" fill="#0000ff" textLength="23.5" lengthAdjust="spacingAndGlyphs">N/A</text>
<text transform="translate(286.0,854.0) scale(1.0,1.107)" font-family="Liberation Mono" font-size="13.00" fill="#0000ff" textLength="93.9" lengthAdjust="spacingAndGlyphs">1.30(±0.38) </text>
<text transform="translate(373.4,854.0) scale(1.0,1.06)" font-family="Liberation Sans" font-size="12.80" fill="#0000ff" font-style="italic">Å</text>
<text transform="translate(286.0,869.5) scale(1.0,1.107)" font-family="Liberation Mono" font-size="13.00" fill="#0000ff" textLength="148.7" lengthAdjust="spacingAndGlyphs">20.27(20.25,20.28)R</text>
<text transform="translate(287.3,886.4) scale(1.0,1.08)" font-family="Liberation Sans" font-size="12.40" fill="#0000ff" textLength="27.5" lengthAdjust="spacingAndGlyphs" stroke="#0000ff" stroke-width="0.12">0.15</text>
<text transform="translate(320.0,881.0) scale(1.0,1.08)" font-family="Liberation Sans" font-size="8.80" fill="#0000ff" textLength="25.5" lengthAdjust="spacingAndGlyphs" stroke="#0000ff" stroke-width="0.12">0.221</text>
<text transform="translate(320.0,889.5) scale(1.0,1.08)" font-family="Liberation Sans" font-size="8.80" fill="#0000ff" textLength="25.5" lengthAdjust="spacingAndGlyphs" stroke="#0000ff" stroke-width="0.12">0.103</text>
<text transform="translate(938.0,821.4) scale(1.0,1.107)" font-family="Liberation Mono" font-size="13.00" fill="#000" textLength="203.5" lengthAdjust="spacingAndGlyphs">Phot z plot not available.</text>
</svg></body></html>
